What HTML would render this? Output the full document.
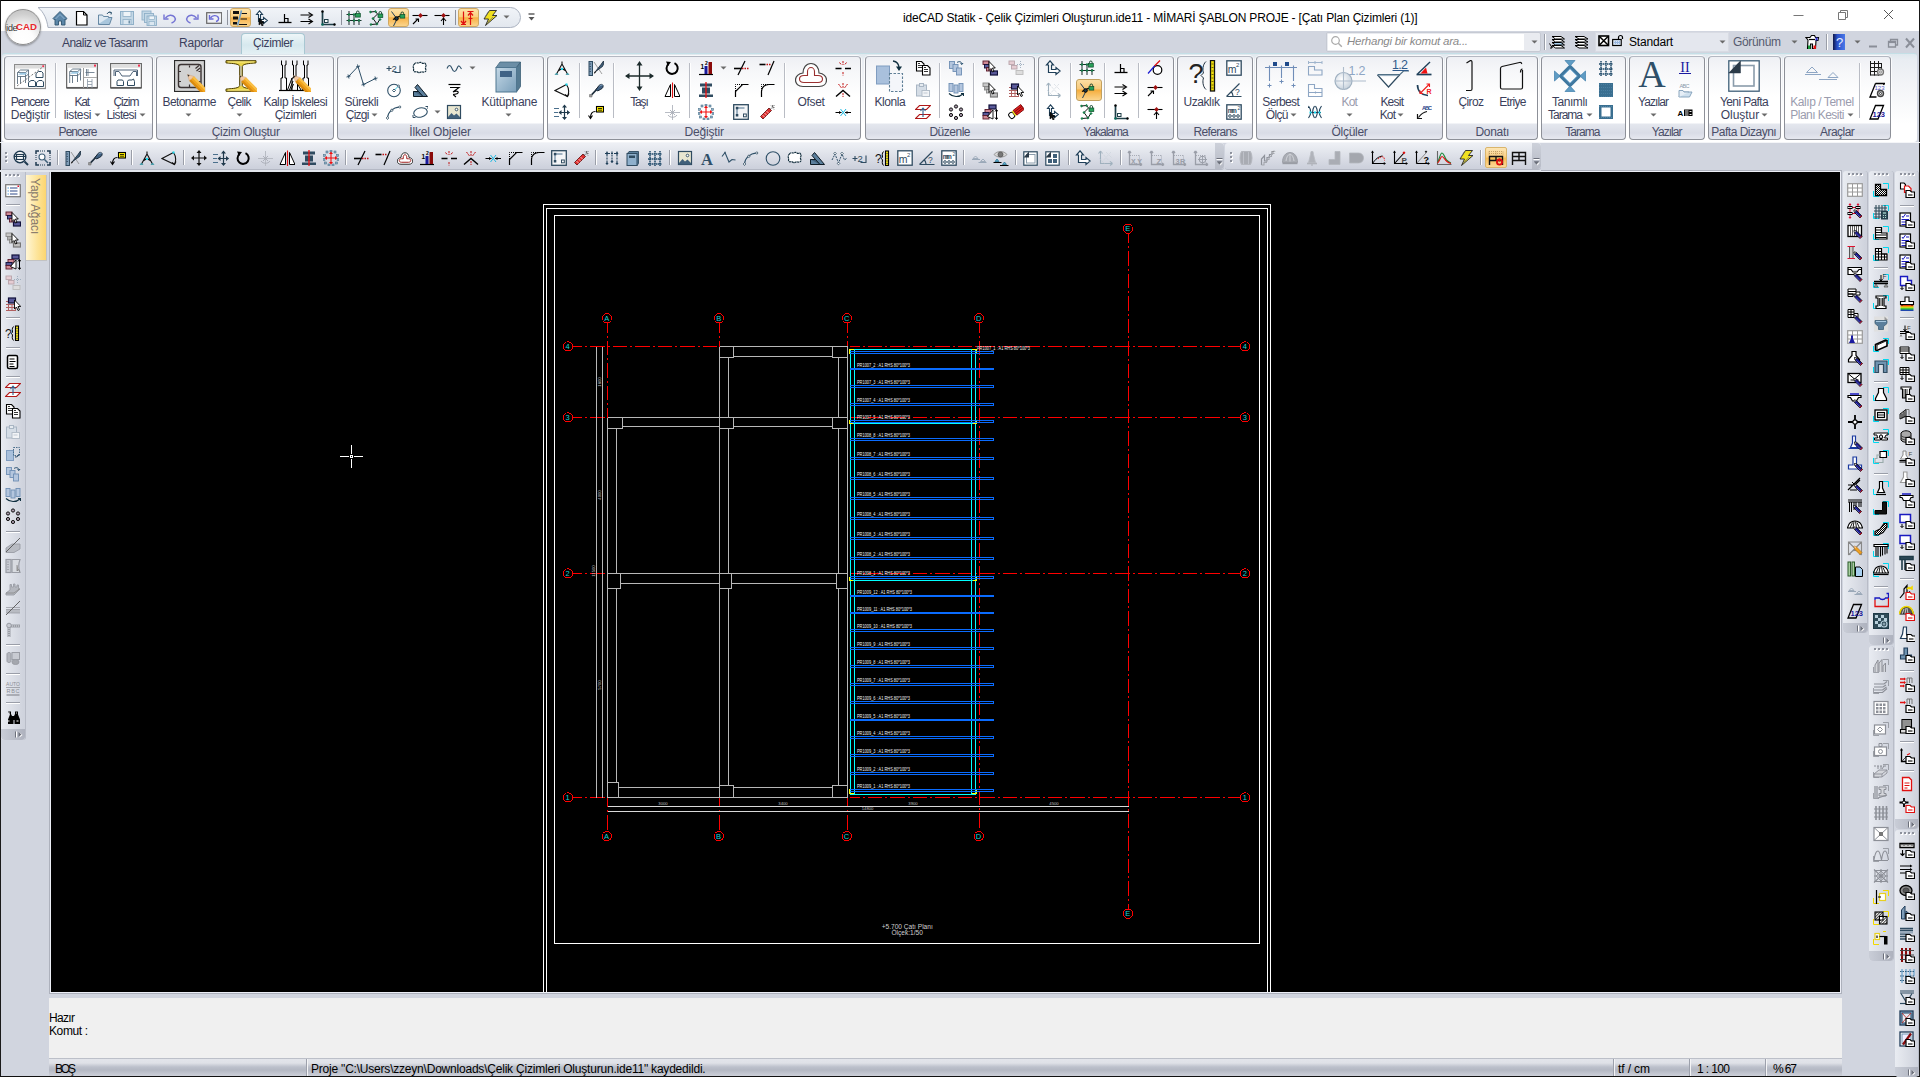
<!DOCTYPE html>
<html><head><meta charset="utf-8"><title>ideCAD Statik</title>
<style>
html,body{margin:0;padding:0}
body{width:1920px;height:1077px;position:relative;overflow:hidden;background:#d1d5df;font-family:"Liberation Sans",sans-serif;font-size:12px}
.t{position:absolute;white-space:nowrap;line-height:1;}
.g{position:absolute;top:56px;height:84px;border:1px solid #8d9098;border-top-color:#b4b8c2;border-radius:4px;box-sizing:border-box;background:linear-gradient(#eef0f4 0px,#f6f7f9 14px,#ffffff 40px,#ffffff 66px,#e4e7ee 67px,#d9dce6 76px,#e6e8ef 82px);box-shadow:0 0 0 1px rgba(255,255,255,.75)}
.sep{position:absolute;top:63px;height:55px;width:1px;background:#b9bcc4;box-shadow:1px 0 0 #fff}
.tsep{position:absolute;top:150px;height:15px;width:1px;background:#9a9ea8;box-shadow:1px 0 0 #fff}
</style></head><body>
<div style="position:absolute;left:0px;top:0px;width:1920px;height:31px;background:#fff"></div>
<div style="position:absolute;left:0px;top:31px;width:1920px;height:22px;background:#d1d5df"></div>
<div style="position:absolute;left:2px;top:53px;width:1915px;height:88px;background:linear-gradient(#dfe8ee 0,#e9edf2 6px,#f3f4f7 30px,#ffffff 70px);border-radius:3px;border-top:1px solid #c4dfe6"></div>
<div style="position:absolute;left:0px;top:142px;width:1920px;height:30px;background:#d1d5df"></div>
<div style="position:absolute;left:0px;top:0px;width:1920px;height:1px;background:#000"></div>
<div style="position:absolute;left:0px;top:0px;width:1px;height:1077px;background:#1a1a1a"></div>
<div style="position:absolute;left:1919px;top:0px;width:1px;height:1077px;background:#1a1a1a"></div>
<svg style="position:absolute;left:30px;top:0px" width="500" height="32" viewBox="0 0 500 32" ><defs><linearGradient id="qg" x1="0" x2="0" y1="0" y2="1"><stop offset="0" stop-color="#f1f4f8"/><stop offset="1" stop-color="#e2e7ee"/></linearGradient></defs><path d="M8 7.500H480.500a10 10 0 0 1 0 20H18C17 20 14 12 8 7.500z" fill="url(#qg)" stroke="#aab2c0" stroke-width="1"/></svg>
<div style="position:absolute;left:4.5px;top:9px;width:36px;height:36px;border-radius:50%;border:1px solid #8e8e8e;box-sizing:border-box;background:radial-gradient(circle at 50% 88%,#ffffff 0,#fdfdfd 30%,#e9e9e9 52%,#cfcfcf 75%,#bdbdbd 100%);box-shadow:0 1px 2px rgba(0,0,0,.35)"></div>
<div class="t" style="left:6px;top:23px;font-size:9.5px;color:#3c3c3c;letter-spacing:-0.4px">ide</div>
<div class="t" style="left:16px;top:23.4px;font-size:9px;font-weight:bold;color:#e8282c;letter-spacing:0.1px;transform-origin:0 50%;transform:scaleX(1.07)">CAD</div>
<div style="position:absolute;left:229.5px;top:8px;width:21px;height:19px;box-sizing:border-box;border:1px solid #d0a860;border-radius:3px;background:linear-gradient(#fde3a8,#fbcf80 45%,#f7b146 52%,#fbd58d)"></div>
<div style="position:absolute;left:387.5px;top:8px;width:21px;height:19px;box-sizing:border-box;border:1px solid #d0a860;border-radius:3px;background:linear-gradient(#fde3a8,#fbcf80 45%,#f7b146 52%,#fbd58d)"></div>
<div style="position:absolute;left:457.5px;top:8px;width:21px;height:19px;box-sizing:border-box;border:1px solid #d0a860;border-radius:3px;background:linear-gradient(#fde3a8,#fbcf80 45%,#f7b146 52%,#fbd58d)"></div>
<svg style="position:absolute;left:52px;top:9.5px" width="16" height="16" viewBox="0 0 16 16" ><path d="M1 8.500L8 1.500l7 7l-1.200 1.200L13 9v6H9.500v-4h-3v4H3V9l-0.800 0.700z" stroke="#2f5570" fill="#5b86a8" stroke-width="0.9" /><path d="M3.500 9L8 4.500L12.500 9" stroke="#9fc0dc" fill="none" stroke-width="0.8" /></svg>
<svg style="position:absolute;left:74px;top:9.5px" width="16" height="16" viewBox="0 0 16 16" ><path d="M2.500 1.500h7l3.500 3.500v10h-10.500z" stroke="#000" fill="#fff" stroke-width="1.2" /><path d="M9.500 1.500v3.500h3.500" stroke="#000" fill="none" stroke-width="1" /></svg>
<svg style="position:absolute;left:96.5px;top:9.5px" width="16" height="16" viewBox="0 0 16 16" ><path d="M1.500 14.500l2.500-7h11l-2.500 7z" stroke="#5a7f9c" fill="#a9c6dc" stroke-width="0.9" /><path d="M1.500 14V5h4l1 1.500h5V7.500" stroke="#5a7f9c" fill="#dce8f2" stroke-width="0.9" /><path d="M10 4c1-2 3-2.500 4-1 M12.500 2l2 0.500l-0.500 2" stroke="#2f5570" fill="none" stroke-width="1" /></svg>
<svg style="position:absolute;left:118.5px;top:9.5px" width="16" height="16" viewBox="0 0 16 16" ><rect x="1.5" y="1.5" width="13" height="13" stroke="#8fb0c8" fill="#c4d8e6" stroke-width="1" /><rect x="4" y="1.5" width="8" height="5" stroke="#8fb0c8" fill="#eef4f8" stroke-width="0.8" /><rect x="4" y="9.5" width="8" height="5" stroke="#8fb0c8" fill="#dbe7f0" stroke-width="0.8" /><rect x="9.5" y="10.5" width="1.5" height="3" stroke="none" fill="#6f90a8" stroke-width="1" /></svg>
<svg style="position:absolute;left:140.5px;top:9.5px" width="16" height="16" viewBox="0 0 16 16" ><rect x="1" y="1" width="9" height="9" stroke="#8fb0c8" fill="#c4d8e6" stroke-width="0.9" /><rect x="3.5" y="3.5" width="9" height="9" stroke="#8fb0c8" fill="#c4d8e6" stroke-width="0.9" /><rect x="6" y="6" width="9.5" height="9.5" stroke="#8fb0c8" fill="#c4d8e6" stroke-width="0.9" /><rect x="8" y="6" width="5.5" height="3.5" stroke="#8fb0c8" fill="#eef4f8" stroke-width="0.7" /><rect x="8" y="11.5" width="5.5" height="4" stroke="#8fb0c8" fill="#dbe7f0" stroke-width="0.7" /></svg>
<svg style="position:absolute;left:162px;top:9.5px" width="16" height="16" viewBox="0 0 16 16" ><path d="M3.500 8c2.500-3.500 7-3.500 9-1s0 5-3 6" stroke="#7474d4" fill="none" stroke-width="1.4" /><path d="M2 4.500v4.500h4.500" stroke="#7474d4" fill="none" stroke-width="1.4" /></svg>
<svg style="position:absolute;left:184px;top:9.5px" width="16" height="16" viewBox="0 0 16 16" ><path d="M12.500 8c-2.500-3.500-7-3.500-9-1s0 5 3 6" stroke="#7474d4" fill="none" stroke-width="1.4" /><path d="M14 4.500v4.500h-4.500" stroke="#7474d4" fill="none" stroke-width="1.4" /></svg>
<svg style="position:absolute;left:206px;top:9.5px" width="16" height="16" viewBox="0 0 16 16" ><rect x="0.7" y="2.7" width="15" height="10.6" stroke="#666" fill="#eef0f4" stroke-width="1.2" /><path d="M4.500 8c2-3 6-3 7.500-1s0 4-2 4.500" stroke="#6a6ad8" fill="none" stroke-width="1.4" /><path d="M3.500 5v4h4" stroke="#6a6ad8" fill="none" stroke-width="1.4" /></svg>
<svg style="position:absolute;left:232px;top:9.5px" width="16" height="16" viewBox="0 0 16 16" ><rect x="1" y="1" width="6" height="3" stroke="none" fill="#111" stroke-width="1" /><rect x="1" y="6.5" width="5" height="3" stroke="none" fill="#111" stroke-width="1" /><rect x="1" y="12" width="4" height="2.5" stroke="none" fill="#111" stroke-width="1" /><path d="M9.500 3.500h5.500 M8.500 9h6.500 M7 14.500h8" stroke="#111" fill="none" stroke-width="1.2" /><path d="M9.500 0.500L5.500 15.500" stroke="#6f9fc8" fill="none" stroke-width="1.6" /></svg>
<svg style="position:absolute;left:254px;top:9.5px" width="16" height="16" viewBox="0 0 16 16" ><path d="M4.500 0.800L1.500 4.500h2v7h5v2l3.800-3l-3.800-3v2h-3v-5h2z" stroke="#1f3f58" fill="#fff" stroke-width="1.1" transform="translate(1 0)"/><path d="M5 8v7l1.800-1.500l1.200 2.500l1.200-0.600l-1.200-2.400h2.200z" stroke="#000" fill="#111" stroke-width="0.6" /></svg>
<svg style="position:absolute;left:277px;top:9.5px" width="16" height="16" viewBox="0 0 16 16" ><path d="M1.500 12.500h13" stroke="#000" fill="none" stroke-width="1.3" /><path d="M7.500 12V4 M7.500 8.500h3.500V12" stroke="#000" fill="none" stroke-width="1.2" /></svg>
<svg style="position:absolute;left:299px;top:9.5px" width="16" height="16" viewBox="0 0 16 16" ><path d="M1.500 5h11.500 M1.500 11.500h11.500" stroke="#000" fill="none" stroke-width="1.1" /><path d="M9.500 2.500L13.500 5l-4 2.500 M9.500 9l4 2.500l-4 2.500" stroke="#000" fill="none" stroke-width="1.1" /></svg>
<svg style="position:absolute;left:320px;top:9.5px" width="16" height="16" viewBox="0 0 16 16" ><path d="M2.500 1.500V14.500H15" stroke="#1f3f48" fill="none" stroke-width="1.7" /><rect x="4.5" y="9.5" width="3.5" height="3" stroke="#1f3f48" fill="#fff" stroke-width="1" /><circle cx="2.5" cy="1.5" r="1.2" stroke="none" fill="#000" stroke-width="1" /><circle cx="14.5" cy="14.5" r="1.2" stroke="none" fill="#000" stroke-width="1" /><circle cx="2.5" cy="14.5" r="1.3" stroke="none" fill="#0a6a5a" stroke-width="1" /></svg>
<svg style="position:absolute;left:346px;top:9.5px" width="16" height="16" viewBox="0 0 16 16" ><path d="M0.500 4.500h10 M0.500 10.500h15 M3 1v14 M8 5v10 M13 9v6" stroke="#1a2a2a" fill="none" stroke-width="1" /><path d="M3 3.3l1.200 1.200l-1.200 1.200l-1.200-1.200z" stroke="#063" fill="#1a8a50" stroke-width="0.5" /><path d="M8 3.3l1.200 1.200l-1.200 1.200l-1.200-1.200z" stroke="#063" fill="#1a8a50" stroke-width="0.5" /><path d="M3 9.3l1.200 1.200l-1.200 1.200l-1.200-1.200z" stroke="#063" fill="#1a8a50" stroke-width="0.5" /><path d="M8 9.3l1.200 1.200l-1.200 1.200l-1.200-1.200z" stroke="#063" fill="#1a8a50" stroke-width="0.5" /><path d="M13 9.3l1.200 1.200l-1.200 1.200l-1.200-1.200z" stroke="#063" fill="#1a8a50" stroke-width="0.5" /><path d="M10.5 3.5v-1.200a1.300 1.300 0 0 1 2.600 0v1.200" stroke="#0a3a22" fill="none" stroke-width="0.9" /><rect x="9.5" y="3.5" width="4.8" height="3.6" stroke="#0a4a28" fill="#27a058" stroke-width="0.7" /></svg>
<svg style="position:absolute;left:368px;top:9.5px" width="16" height="16" viewBox="0 0 16 16" ><path d="M2.500 2l5-0.500l2 2.500L5 8.500l4 5.500l-6 0.500 M9 14l3-5" stroke="#111" fill="none" stroke-width="1" /><path d="M2.5 0.8l1.200 1.200l-1.200 1.200l-1.200-1.200z" stroke="#063" fill="#1a8a50" stroke-width="0.5" /><path d="M7.5 0.30000000000000004l1.200 1.200l-1.200 1.200l-1.200-1.200z" stroke="#063" fill="#1a8a50" stroke-width="0.5" /><path d="M5 7.3l1.200 1.200l-1.200 1.200l-1.200-1.200z" stroke="#063" fill="#1a8a50" stroke-width="0.5" /><path d="M3 13.3l1.200 1.200l-1.200 1.200l-1.200-1.200z" stroke="#063" fill="#1a8a50" stroke-width="0.5" /><path d="M9 12.8l1.200 1.200l-1.200 1.200l-1.200-1.200z" stroke="#063" fill="#1a8a50" stroke-width="0.5" /><path d="M12 8.3l1.200 1.200l-1.200 1.200l-1.200-1.200z" stroke="#063" fill="#1a8a50" stroke-width="0.5" /><path d="M11 4v-1.200a1.300 1.300 0 0 1 2.600 0v1.200" stroke="#0a3a22" fill="none" stroke-width="0.9" /><rect x="10" y="4" width="4.8" height="3.6" stroke="#0a4a28" fill="#27a058" stroke-width="0.7" /></svg>
<svg style="position:absolute;left:390px;top:9.5px" width="16" height="16" viewBox="0 0 16 16" ><path d="M1.500 1.500L7 9L3.500 16" stroke="#1f3f58" fill="none" stroke-width="1" /><path d="M3 9.500L10 6" stroke="#000" fill="none" stroke-width="1.3" /><circle cx="6.5" cy="8.5" r="1.8" stroke="#000" fill="#1a3a4a" stroke-width="1" /><path d="M11 4.5v-1.200a1.300 1.300 0 0 1 2.600 0v1.200" stroke="#0a3a22" fill="none" stroke-width="0.9" /><rect x="10" y="4.5" width="4.8" height="3.6" stroke="#0a4a28" fill="#27a058" stroke-width="0.7" /></svg>
<svg style="position:absolute;left:412px;top:9.5px" width="16" height="16" viewBox="0 0 16 16" ><path d="M0.500 5.500h15" stroke="#000" fill="none" stroke-width="1.1" /><path d="M8.500 3l2.300 2.500l-2.300 2.500l-2.300-2.500z" stroke="none" fill="#a01010" stroke-width="1" /><path d="M1 14l5-5 M3.500 9h3v3" stroke="#000" fill="none" stroke-width="1.1" /></svg>
<svg style="position:absolute;left:434px;top:9.5px" width="16" height="16" viewBox="0 0 16 16" ><path d="M0.500 5.500h15" stroke="#000" fill="none" stroke-width="1.1" /><path d="M9.500 3l2.300 2.500l-2.300 2.500l-2.300-2.500z" stroke="none" fill="#a01010" stroke-width="1" /><path d="M9.500 15V8 M7 11l2.500-3l2.500 3" stroke="#000" fill="none" stroke-width="1.1" /></svg>
<svg style="position:absolute;left:460px;top:9.5px" width="16" height="16" viewBox="0 0 16 16" ><path d="M3.500 1.500v12 M1 11l2.500 3l2.500-3 M1 14.500h5" stroke="#e01010" fill="none" stroke-width="1.2" /><path d="M10.500 15V3 M8 5.500l2.500-3l2.500 3 M7.500 1.500h6 M8.500 8.500h4" stroke="#e01010" fill="none" stroke-width="1.2" /></svg>
<svg style="position:absolute;left:482px;top:9.5px" width="16" height="16" viewBox="0 0 16 16" ><path d="M7.500 0.500h7l-4 5h4.500L3.500 15.500l3-6.500h-4.500z" stroke="#222" fill="#f0e020" stroke-width="0.9" /><path d="M6 2l-3 5 M11 7l-6 6" stroke="#777" fill="none" stroke-width="0.7" /></svg>
<div style="position:absolute;left:227px;top:10px;width:1px;height:15px;background:#8d919c"></div>
<div style="position:absolute;left:341px;top:10px;width:1px;height:15px;background:#8d919c"></div>
<div style="position:absolute;left:455px;top:10px;width:1px;height:15px;background:#8d919c"></div>
<svg style="position:absolute;left:502.7px;top:15.2px" width="7" height="4"><path d="M0.5 0.5h6l-3 3z" fill="#6a6a6a"/></svg>
<svg style="position:absolute;left:528px;top:13px" width="8" height="9" viewBox="0 0 8 9" ><path d="M0.500 1h6" stroke="#555" stroke-width="1.4"/><path d="M0.500 4h6l-3 3.500z" fill="#555"/></svg>
<div class="t" style="left:903.0px;top:12.2px;font-size:12px;letter-spacing:-0.18px;color:#000;">ideCAD Statik - Çelik Çizimleri Oluşturun.ide11 - MİMARİ ŞABLON PROJE - [Çatı Plan Çizimleri (1)]</div>
<svg style="position:absolute;left:1790px;top:5px" width="120" height="22" viewBox="0 0 120 22" ><path d="M3.5 10.5h10" stroke="#777" fill="none"/><path d="M48.5 7.5h7v7h-7z M50.5 7.5v-2h7v7h-2" stroke="#777" fill="none"/><path d="M94 5l9 9M103 5l-9 9" stroke="#555" fill="none"/></svg>
<div class="t" style="left:62.0px;top:36.8px;font-size:12px;letter-spacing:-0.53px;color:#3b3f5c;">Analiz ve Tasarım</div>
<div class="t" style="left:179.0px;top:36.8px;font-size:12px;letter-spacing:-0.22px;color:#3b3f5c;">Raporlar</div>
<div style="position:absolute;left:241px;top:33px;width:64px;height:21px;box-sizing:border-box;border:1px solid #a8c7d2;border-bottom:none;border-radius:4px 4px 0 0;background:linear-gradient(#eef6f8,#d6e8ee 55%,#e4f0f4)"></div>
<div class="t" style="left:253.0px;top:36.8px;font-size:12px;letter-spacing:-0.40px;color:#3b3f5c;">Çizimler</div>
<div style="position:absolute;left:1326px;top:32px;width:215px;height:20px;box-sizing:border-box;border:1px solid #c6cad3;background:#e9ebf0;border-radius:2px"></div>
<div style="position:absolute;left:1328px;top:34px;width:196px;height:16px;background:#fff"></div>
<svg style="position:absolute;left:1330px;top:35px" width="14" height="14" viewBox="0 0 14 14" ><circle cx="5.5" cy="5.5" r="3.8" stroke="#aaa" fill="none" stroke-width="1.2"/><path d="M8.3 8.3l3.5 3.5" stroke="#aaa" stroke-width="1.4"/></svg>
<div class="t" style="left:1347.0px;top:36.3px;font-size:11.5px;letter-spacing:-0.23px;color:#8a8a8a;font-style:italic">Herhangi bir komut ara...</div>
<svg style="position:absolute;left:1530.5px;top:40.0px" width="7" height="4"><path d="M0.5 0.5h6l-3 3z" fill="#6a6a6a"/></svg>
<div style="position:absolute;left:1595px;top:32px;width:134px;height:20px;box-sizing:border-box;background:#e4e7ee;border:1px solid #d8dbe3"></div>
<div class="t" style="left:1629.0px;top:35.8px;font-size:12px;letter-spacing:-0.19px;color:#000;">Standart</div>
<svg style="position:absolute;left:1718.5px;top:40.0px" width="7" height="4"><path d="M0.5 0.5h6l-3 3z" fill="#6a6a6a"/></svg>
<div class="t" style="left:1733.0px;top:35.8px;font-size:12px;letter-spacing:-0.34px;color:#555a6e;">Görünüm</div>
<svg style="position:absolute;left:1790.5px;top:40.0px" width="7" height="4"><path d="M0.5 0.5h6l-3 3z" fill="#6a6a6a"/></svg>
<svg style="position:absolute;left:1853.5px;top:40.0px" width="7" height="4"><path d="M0.5 0.5h6l-3 3z" fill="#6a6a6a"/></svg>
<div style="position:absolute;left:1544px;top:34px;width:1px;height:16px;background:#9a9ea8;box-shadow:1px 0 0 #fff"></div>
<div style="position:absolute;left:1826px;top:34px;width:1px;height:16px;background:#9a9ea8;box-shadow:1px 0 0 #fff"></div>
<svg style="position:absolute;left:1549px;top:34px" width="16" height="16" viewBox="0 0 16 16" ><path d="M3 2.500h9l3.500 2.500h-9z M3 5.500h9l3.500 2.500h-9z M3 11.500h9l3.500 2.500h-9z" stroke="#000" fill="#fff" stroke-width="1" /><path d="M3 8.500h9l3.500 2.500h-9z" stroke="#000" fill="#a8d0f0" stroke-width="1" /><path d="M0.500 9.500l2.500 4 M1 14l2 0 0-2" stroke="#000" fill="none" stroke-width="1" /></svg>
<svg style="position:absolute;left:1573px;top:34px" width="16" height="16" viewBox="0 0 16 16" ><path d="M2 2.500h9l4 2.500h-9z M2 5.500h9l4 2.500h-9z M2 8.500h9l4 2.500h-9z M2 11.500h9l4 2.500h-9z" stroke="#000" fill="#fff" stroke-width="1" /></svg>
<svg style="position:absolute;left:1597.5px;top:34.5px" width="12" height="12" viewBox="0 0 12 12" ><rect x="1" y="1" width="9.5" height="9.5" stroke="#000" fill="#fff" stroke-width="1.6" /><path d="M1.500 1.500l8.500 8.500 M10 1.500L1.500 10" stroke="#000" fill="none" stroke-width="1.5" /></svg>
<svg style="position:absolute;left:1612px;top:34px" width="12" height="13" viewBox="0 0 12 13" ><rect x="0.7" y="5.5" width="8.5" height="6" stroke="#000" fill="#fff" stroke-width="1.2" /><path d="M6.500 5.500v-2a2 2 0 0 1 4 0v1.500" stroke="#000" fill="none" stroke-width="1.2" /><rect x="1.7" y="6.5" width="6.5" height="4" stroke="none" fill="#9ab8e0" stroke-width="1" /><path d="M2 7.500h6 M2 9.500h6" stroke="#fff" fill="none" stroke-width="0.6" stroke-dasharray="1 1"/></svg>
<svg style="position:absolute;left:1805px;top:34px" width="16" height="16" viewBox="0 0 16 16" ><path d="M1 3.500h4l1.500-2h3l1 2h3l-0.500 3h-2l-0.500 8h-3v-4.500h-2v4.500h-3l0.500-8.500z" stroke="#000" fill="#fff" stroke-width="1.1" /><rect x="3" y="11.5" width="2.5" height="3.5" stroke="none" fill="#1a9a3a" stroke-width="1" /><rect x="8.5" y="11.5" width="2.5" height="3.5" stroke="none" fill="#e01010" stroke-width="1" /><path d="M4 5.500h6" stroke="#000" fill="none" stroke-width="1.2" /><rect x="10.5" y="3.5" width="2" height="3" stroke="none" fill="#2a2ad0" stroke-width="1" /></svg>
<svg style="position:absolute;left:1833px;top:34px" width="12" height="16" viewBox="0 0 12 16" ><defs><linearGradient id="hg" x1="0" x2="1"><stop offset="0" stop-color="#10184a"/><stop offset=".35" stop-color="#2a50c8"/><stop offset="1" stop-color="#4a78e8"/></linearGradient></defs><rect x="0" y="0" width="12" height="16" stroke="none" fill="url(#hg)" stroke-width="1" /><text x="3" y="13" font-size="13" fill="#e6eeff" font-family="Liberation Sans, sans-serif" font-family="Liberation Serif">?</text></svg>
<svg style="position:absolute;left:1866px;top:36px" width="52" height="14" viewBox="0 0 52 14" ><path d="M3 10.500h8" stroke="#8a8e98" stroke-width="2"/><path d="M22.500 5.500h7v5.500h-7z M24.500 5.500v-2h7v5.500h-2" stroke="#8a8e98" fill="none" stroke-width="1.300"/><path d="M22.500 6.300h7" stroke="#8a8e98" stroke-width="1.600"/><path d="M40 2.500l8 9 M48 2.500l-8 9" stroke="#8a8e98" stroke-width="2"/></svg>
<div class="g" style="left:4px;width:149px"></div>
<div class="t" style="left:58.6px;top:125.6px;font-size:12px;letter-spacing:-0.97px;color:#4a4e68;">Pencere</div>
<div class="g" style="left:156px;width:178px"></div>
<div class="t" style="left:211.7px;top:125.6px;font-size:12px;letter-spacing:-0.31px;color:#4a4e68;">Çizim Oluştur</div>
<div class="g" style="left:337px;width:207px"></div>
<div class="t" style="left:409.2px;top:125.6px;font-size:12px;letter-spacing:-0.13px;color:#4a4e68;">İlkel Objeler</div>
<div class="g" style="left:547px;width:314px"></div>
<div class="t" style="left:684.4px;top:125.6px;font-size:12px;letter-spacing:-0.15px;color:#4a4e68;">Değiştir</div>
<div class="g" style="left:865px;width:170px"></div>
<div class="t" style="left:929.4px;top:125.6px;font-size:12px;letter-spacing:-0.49px;color:#4a4e68;">Düzenle</div>
<div class="g" style="left:1038px;width:136px"></div>
<div class="t" style="left:1083.3px;top:125.6px;font-size:12px;letter-spacing:-1.01px;color:#4a4e68;">Yakalama</div>
<div class="g" style="left:1177px;width:76px"></div>
<div class="t" style="left:1193.6px;top:125.6px;font-size:12px;letter-spacing:-0.68px;color:#4a4e68;">Referans</div>
<div class="g" style="left:1256px;width:187px"></div>
<div class="t" style="left:1331.5px;top:125.6px;font-size:12px;letter-spacing:-0.28px;color:#4a4e68;">Ölçüler</div>
<div class="g" style="left:1446px;width:92px"></div>
<div class="t" style="left:1475.5px;top:125.6px;font-size:12px;letter-spacing:-0.31px;color:#4a4e68;">Donatı</div>
<div class="g" style="left:1541px;width:85px"></div>
<div class="t" style="left:1565.3px;top:125.6px;font-size:12px;letter-spacing:-0.98px;color:#4a4e68;">Tarama</div>
<div class="g" style="left:1629px;width:76px"></div>
<div class="t" style="left:1651.8px;top:125.6px;font-size:12px;letter-spacing:-0.96px;color:#4a4e68;">Yazılar</div>
<div class="g" style="left:1708px;width:73px"></div>
<div class="t" style="left:1711.3px;top:125.6px;font-size:12px;letter-spacing:-0.50px;color:#4a4e68;">Pafta Dizaynı</div>
<div class="g" style="left:1784px;width:107px"></div>
<div class="t" style="left:1820.0px;top:125.6px;font-size:12px;letter-spacing:-0.54px;color:#4a4e68;">Araçlar</div>
<div class="sep" style="left:55px"></div>
<div class="sep" style="left:579px"></div>
<div class="sep" style="left:613px"></div>
<div class="sep" style="left:689px"></div>
<div class="sep" style="left:784px"></div>
<div class="sep" style="left:939px"></div>
<div class="sep" style="left:973px"></div>
<div class="sep" style="left:1070px"></div>
<div class="sep" style="left:1104px"></div>
<div class="sep" style="left:1138px"></div>
<div class="sep" style="left:1859px"></div>
<div class="t" style="left:10.7px;top:95.6px;font-size:12px;letter-spacing:-0.95px;color:#3b3f5c;">Pencere</div>
<div class="t" style="left:10.7px;top:108.5px;font-size:12px;letter-spacing:-0.21px;color:#3b3f5c;">Değiştir</div>
<div class="t" style="left:74.6px;top:95.6px;font-size:12px;letter-spacing:-1.31px;color:#3b3f5c;">Kat</div>
<div class="t" style="left:63.7px;top:108.5px;font-size:12px;letter-spacing:-0.37px;color:#3b3f5c;">listesi</div>
<svg style="position:absolute;left:94.0px;top:112.5px" width="7" height="4"><path d="M0.5 0.5h6l-3 3z" fill="#6a6a6a"/></svg>
<div class="t" style="left:113.4px;top:95.6px;font-size:12px;letter-spacing:-0.97px;color:#3b3f5c;">Çizim</div>
<div class="t" style="left:106.5px;top:108.5px;font-size:12px;letter-spacing:-0.65px;color:#3b3f5c;">Listesi</div>
<svg style="position:absolute;left:139.0px;top:112.5px" width="7" height="4"><path d="M0.5 0.5h6l-3 3z" fill="#6a6a6a"/></svg>
<svg style="position:absolute;left:14px;top:64px" width="32" height="26" viewBox="0 0 32 26" ><rect x="0.5" y="0.5" width="31" height="24" stroke="#8c8c8c" fill="#fff" stroke-width="1.2" /><rect x="1" y="1" width="30" height="3.5" stroke="none" fill="#dcdcdc" stroke-width="1" /><path d="M3.5 20V8.5l3-2.5h8v3 M3.5 8.5h8l3-2.5 M11.5 8.5V19 M3.5 12.5h8l3-2.5 M14.5 9v8.5 M6.5 12.5V20" stroke="#5c6f80" fill="none" stroke-width="0.9" /><path d="M4 10.8h7.2l2.6-2h-7.4z" stroke="none" fill="#9fcbe6" stroke-width="1" /><path d="M3 22L29.5 2.5" stroke="#777" fill="none" stroke-width="1" stroke-dasharray="2 1.6"/><path d="M22 13.5V9.5l2.5-2h3l1.5 1.5V13.5z" stroke="#2f4b60" fill="none" stroke-width="1" /><path d="M14.5 22.5V18.5l2.5-2h3l1.5 1.5V22.5z" stroke="#2f4b60" fill="none" stroke-width="1" /><path d="M22.5 22.5V18.5l2.5-2h3l1.5 1.5V22.5z" stroke="#2f4b60" fill="none" stroke-width="1" /><rect x="28.3" y="1.3" width="1.8" height="1.8" stroke="none" fill="#f03050" stroke-width="1" /></svg>
<svg style="position:absolute;left:66px;top:63px" width="32" height="26" viewBox="0 0 32 26" ><rect x="0.6" y="0.6" width="30.8" height="24" stroke="#6a6a6a" fill="#fff" stroke-width="1.3" /><rect x="1.2" y="1.2" width="29.6" height="3.6" stroke="none" fill="#dedede" stroke-width="1" /><path d="M0.5 25h31" stroke="#555" fill="none" stroke-width="1.4" /><path d="M3.7 20V8.5l3-2.5h8v3 M3.7 8.5h8l3-2.5 M11.5 8.5V19 M3.7 12.5h8l3-2.5 M14.5 9v8.5 M6.5 12.5V20" stroke="#5c6f80" fill="none" stroke-width="0.9" /><path d="M4 10.8h7.2l2.6-2h-7.4z" stroke="none" fill="#9fcbe6" stroke-width="1" /><path d="M17.5 5V25" stroke="#999" fill="none" stroke-width="1" /><path d="M18 14.5h13" stroke="#aaa" fill="none" stroke-width="1" /><path d="M20.5 6v7 M22 6v7 M19.5 9.5h9" stroke="#5c6f80" fill="none" stroke-width="0.8" /><path d="M21.5 16v9 M26 16v9 M21.5 18.5h4.5 M21.5 21.5h4.5" stroke="#8a98a6" fill="none" stroke-width="0.8" /><rect x="28" y="1.6" width="2" height="2" stroke="none" fill="#f03050" stroke-width="1" /></svg>
<svg style="position:absolute;left:110px;top:63px" width="32" height="26" viewBox="0 0 32 26" ><rect x="0.6" y="0.6" width="30.8" height="24" stroke="#6a6a6a" fill="#fff" stroke-width="1.3" /><rect x="1.2" y="1.2" width="29.6" height="3.6" stroke="none" fill="#dedede" stroke-width="1" /><path d="M0.5 25h31" stroke="#555" fill="none" stroke-width="1.4" /><path d="M4 13V7h23.5v6 M5.5 13V8.5h3.5l3 4.5h8l3-4.5h3.5V13" stroke="#50657a" fill="none" stroke-width="1" /><path d="M7 22.5V18.5l1-1.5h4.5l1 1.5V22.5z" stroke="#2f4b60" fill="none" stroke-width="1" /><path d="M17.5 22.5V18.5l1-1.5h3.5l1.5-1 1 2.5V22.5z" stroke="#2f4b60" fill="none" stroke-width="1" /><rect x="28" y="1.6" width="2" height="2" stroke="none" fill="#f03050" stroke-width="1" /></svg>
<div class="t" style="left:162.5px;top:95.6px;font-size:12px;letter-spacing:-0.60px;color:#3b3f5c;">Betonarme</div>
<svg style="position:absolute;left:185.0px;top:112.5px" width="7" height="4"><path d="M0.5 0.5h6l-3 3z" fill="#6a6a6a"/></svg>
<div class="t" style="left:227.4px;top:95.6px;font-size:12px;letter-spacing:-0.64px;color:#3b3f5c;">Çelik</div>
<svg style="position:absolute;left:235.8px;top:112.5px" width="7" height="4"><path d="M0.5 0.5h6l-3 3z" fill="#6a6a6a"/></svg>
<div class="t" style="left:263.4px;top:95.6px;font-size:12px;letter-spacing:-0.49px;color:#3b3f5c;">Kalıp İskelesi</div>
<div class="t" style="left:274.7px;top:108.5px;font-size:12px;letter-spacing:-0.50px;color:#3b3f5c;">Çizimleri</div>
<svg style="position:absolute;left:174px;top:60px" width="32" height="32" viewBox="0 0 32 32" ><rect x="0.5" y="0.5" width="30" height="31" stroke="#2a2a2a" fill="#d2d2d2" stroke-width="1.2" /><rect x="4.5" y="4.5" width="22.5" height="23" rx="2.5" fill="none" stroke="#3a3232" stroke-width="1.4"/><path d="M15.5 5.5v2 M15.5 24.5v2.5 M5 11.5h2 M5 21.5h2 M24.5 11.5h2 M24.5 21.5h2 M21.5 8.5l3.5-3 M22.5 11l3.5-3" stroke="#3a3232" fill="none" stroke-width="1.2" /><g clip-path="url(#cb)"><clipPath id="cb"><rect x="0" y="0" width="31" height="32"/></clipPath><g transform="translate(13.5 14.5) rotate(45)"><path d="M0 0L6 -3.25V3.25z" fill="#f1c9a5" stroke="#c9956a" stroke-width=".4"/><path d="M0 0L2 -1.0833333333333333V1.0833333333333333z" fill="#333"/><rect x="6" y="-3.25" width="22" height="6.5" fill="#f2a41c"/><rect x="6" y="-3.25" width="22" height="2.1666666666666665" fill="#f9c04a"/><rect x="6" y="1.0833333333333335" width="22" height="2.1666666666666665" fill="#d98a10"/></g></g></svg>
<svg style="position:absolute;left:225px;top:60px" width="32" height="32" viewBox="0 0 32 32" ><path d="M1 0.7h30v2.2c-8 0.6-13 1-13.7 3.5v19.2c0.7 2.5 5.7 2.9 13.7 3.5v2.2h-30v-2.2c8-0.6 13-1 13.7-3.5v-19.2c-0.7-2.5-5.700-2.900-13.700-3.500z" stroke="#4a3c00" fill="#e9d44a" stroke-width="1" /><path d="M3 2h26 M3 30h26" stroke="#fff3a0" fill="none" stroke-width="0.7" /><path d="M15.9 6v20" stroke="#b9b9b9" fill="none" stroke-width="1.3" /><g clip-path="url(#cc)"><clipPath id="cc"><rect x="0" y="0" width="32" height="32"/></clipPath><g transform="translate(14.5 15.5) rotate(45)"><path d="M0 0L6 -3.25V3.25z" fill="#f1c9a5" stroke="#c9956a" stroke-width=".4"/><path d="M0 0L2 -1.0833333333333333V1.0833333333333333z" fill="#333"/><rect x="6" y="-3.25" width="22" height="6.5" fill="#f2a41c"/><rect x="6" y="-3.25" width="22" height="2.1666666666666665" fill="#f9c04a"/><rect x="6" y="1.0833333333333335" width="22" height="2.1666666666666665" fill="#d98a10"/></g></g></svg>
<svg style="position:absolute;left:279px;top:60px" width="32" height="32" viewBox="0 0 32 32" ><path d="M0 30.5h31" stroke="#000" fill="none" stroke-width="1.2" /><path d="M2.5 0.5v4.5h1v13h-1.5v12.500 M7.0 0.5v4.5h-1v13h1.5v12.500" stroke="#000" fill="none" stroke-width="1" /><path d="M13.5 0.5v4.5h1v13h-1.5v12.500 M18.0 0.5v4.5h-1v13h1.5v12.500" stroke="#000" fill="none" stroke-width="1" /><path d="M24.5 0.5v4.5h1v13h-1.5v12.500 M29.0 0.5v4.5h-1v13h1.5v12.500" stroke="#000" fill="none" stroke-width="1" /><path d="M8.5 30L13 18 M10.5 30L14 21 M12 30l2.5-6 M24 30L19 20 M22 30l-4-7" stroke="#000" fill="none" stroke-width="1" /><g clip-path="url(#ck)"><clipPath id="ck"><rect x="0" y="0" width="32" height="32"/></clipPath><g transform="translate(14.5 15.5) rotate(45)"><path d="M0 0L6 -3.25V3.25z" fill="#f1c9a5" stroke="#c9956a" stroke-width=".4"/><path d="M0 0L2 -1.0833333333333333V1.0833333333333333z" fill="#333"/><rect x="6" y="-3.25" width="22" height="6.5" fill="#f2a41c"/><rect x="6" y="-3.25" width="22" height="2.1666666666666665" fill="#f9c04a"/><rect x="6" y="1.0833333333333335" width="22" height="2.1666666666666665" fill="#d98a10"/></g></g></svg>
<div class="t" style="left:344.4px;top:95.6px;font-size:12px;letter-spacing:-0.41px;color:#3b3f5c;">Sürekli</div>
<div class="t" style="left:345.7px;top:108.5px;font-size:12px;letter-spacing:-0.72px;color:#3b3f5c;">Çizgi</div>
<svg style="position:absolute;left:371.0px;top:112.5px" width="7" height="4"><path d="M0.5 0.5h6l-3 3z" fill="#6a6a6a"/></svg>
<svg style="position:absolute;left:346px;top:62px" width="32" height="26" viewBox="0 0 32 26" ><path d="M2.5 14.500L12 4.5L17.5 22.500L29.500 16.500" stroke="#2f5068" fill="none" stroke-width="1" /><path d="M0.5 15.0l4-1 M2.0 12.5l1 4" stroke="#2f5068" fill="none" stroke-width="1" /><path d="M10 5.0l4-1 M11.5 2.5l1 4" stroke="#2f5068" fill="none" stroke-width="1" /><path d="M15.5 23.0l4-1 M17.0 20.5l1 4" stroke="#2f5068" fill="none" stroke-width="1" /><path d="M27.5 17.0l4-1 M29.0 14.5l1 4" stroke="#2f5068" fill="none" stroke-width="1" /></svg>
<div class="t" style="left:481.6px;top:95.6px;font-size:12px;letter-spacing:-0.28px;color:#3b3f5c;">Kütüphane</div>
<svg style="position:absolute;left:505.1px;top:112.5px" width="7" height="4"><path d="M0.5 0.5h6l-3 3z" fill="#6a6a6a"/></svg>
<svg style="position:absolute;left:495px;top:61px" width="27" height="32" viewBox="0 0 27 32" ><defs><linearGradient id="kg" x1="0" y1="0" x2="1" y2="1"><stop offset="0" stop-color="#c4d8e6"/><stop offset="1" stop-color="#7a9fba"/></linearGradient></defs><path d="M1 6.500L5 1h20.500L21.500 6.500z" stroke="#456a80" fill="#6b8ea6" stroke-width="0.8" /><path d="M21.500 6.500L25.500 1V25.500L21.500 31z" stroke="#3c5f76" fill="#547a92" stroke-width="0.8" /><rect x="1" y="6.5" width="20.5" height="24.5" stroke="#4f7690" fill="url(#kg)" stroke-width="1" /><rect x="5" y="10" width="12" height="6" stroke="none" fill="#3f6285" stroke-width="1" /></svg>
<svg style="position:absolute;left:386px;top:59.5px" width="16" height="16" viewBox="0 0 16 16" ><path d="M0.5 8.5h5 M3 6v5" stroke="#2f4b60" fill="none" stroke-width="1.1" /><text x="5.6" y="12" font-size="9.5" fill="#2f4b60" font-family="Liberation Sans, sans-serif" >2</text><path d="M8.5 12.5h5.5V5.500" stroke="#2f4b60" fill="none" stroke-width="1.1" /></svg>
<svg style="position:absolute;left:386px;top:81.5px" width="16" height="16" viewBox="0 0 16 16" ><circle cx="8" cy="8.5" r="6.3" stroke="#2f5068" fill="none" stroke-width="1.1" /><path d="M8 8.500L12.500 4" stroke="#37c8e0" fill="none" stroke-width="1" /><path d="M8 7l1.500 1.500l-1.500 1.500l-1.500-1.500z" stroke="#2f5068" fill="#fff" stroke-width="0.9" /><circle cx="12.5" cy="4" r="1" stroke="#2f5068" fill="#fff" stroke-width="0.8" /></svg>
<svg style="position:absolute;left:386px;top:103.5px" width="16" height="16" viewBox="0 0 16 16" ><path d="M1.500 14c0.500-6 5-10.500 12.500-11" stroke="#2f5068" fill="none" stroke-width="1.1" /><path d="M1.500 12.500l1.300 1.500l-1.300 1.500l-1.300-1.500z M13.800 1.700l1.300 1.300l-1.300 1.300l-1.300-1.300z" stroke="#2f4b60" fill="#fff" stroke-width="0.8" /><circle cx="5.8" cy="6.3" r="1.1" stroke="#2f4b60" fill="#fff" stroke-width="0.8" /></svg>
<svg style="position:absolute;left:412px;top:59.5px" width="16" height="16" viewBox="0 0 16 16" ><path d="M2.5 4c1-2 2.5-1 3.5-1s2.500-1.500 4 0s2.500-1 3.500 1c1.500 1.500-0.500 3 0 4.500s1 3-1 3.500c-1.500 0.500-2.500-0.500-3.500 0s-2.500 1-3.500 0s-2.500 0.500-3.500-0.500s0-2.500-0.500-3.500s-0.500-3 1-4z" stroke="#15303f" fill="#fff" stroke-width="1.2" stroke-dasharray="2.2 0.5"/></svg>
<svg style="position:absolute;left:412px;top:81.5px" width="16" height="16" viewBox="0 0 16 16" ><path d="M1.500 14.500V9.500h5l-3.500-4l2.500-3l10 12z" stroke="#0d1a24" fill="#5b7f9c" stroke-width="1" /><path d="M1.500 9.500h5l4.500 5" stroke="#0d1a24" fill="#3f5f7a" stroke-width="1" /></svg>
<svg style="position:absolute;left:412px;top:103.5px" width="16" height="16" viewBox="0 0 16 16" ><ellipse cx="8.5" cy="8.5" rx="6.8" ry="4.6" stroke="#2f5068" fill="none" stroke-width="1.1" transform="rotate(-12 8.500 8.500)"/><path d="M1 11v2.500h2.500 M13.500 2.500h2.500v2.500" stroke="#2f4b60" fill="none" stroke-width="1" /></svg>
<svg style="position:absolute;left:446px;top:59.5px" width="16" height="16" viewBox="0 0 16 16" ><path d="M1 8.500c1.500-4 3.500-4 5 0s3.500 4 5 0s2.500-3 4.500 0.500" stroke="#2f5068" fill="none" stroke-width="1.1" /></svg>
<svg style="position:absolute;left:446px;top:81.5px" width="16" height="16" viewBox="0 0 16 16" ><path d="M2.500 2.500h12" stroke="#000" fill="none" stroke-width="1.2" /><path d="M4 5.500h9l-6 4.500c3-1.500 6-1 5 1s-5 0.500-4.500 2l2.500 2" stroke="#000" fill="none" stroke-width="1.1" /></svg>
<svg style="position:absolute;left:446px;top:103.5px" width="16" height="16" viewBox="0 0 16 16" ><rect x="1.5" y="1.5" width="13" height="13" stroke="#2f4b60" fill="#e8e6d0" stroke-width="1.2" /><path d="M2 13l3.500-4l2.500 2.500l2.500-2l3.500 3.500v1.500h-12z" stroke="none" fill="#3f5f7a" stroke-width="1" /><circle cx="10.5" cy="5.5" r="1.3" stroke="#2f4b60" fill="#fff" stroke-width="0.9" /></svg>
<svg style="position:absolute;left:469.0px;top:65.5px" width="7" height="4"><path d="M0.5 0.5h6l-3 3z" fill="#6a6a6a"/></svg>
<svg style="position:absolute;left:433.9px;top:109.5px" width="7" height="4"><path d="M0.5 0.5h6l-3 3z" fill="#6a6a6a"/></svg>
<svg style="position:absolute;left:553.5px;top:59.5px" width="16" height="16" viewBox="0 0 16 16" ><path d="M8 1.500v3 M8 4L2.500 14 M8 4l5.500 10 M4 11l4-2.500l4 2.500" stroke="#111" fill="none" stroke-width="1.1" /><rect x="7" y="8" width="2" height="2" stroke="none" fill="#19d9f0" stroke-width="1" /><path d="M1 14.500l1.500-1.500l1.500 1.500z M12 14.500l1.500-1.500l1.500 1.500z" stroke="#2f8a96" fill="#2fb0c0" stroke-width="0.6" /></svg>
<svg style="position:absolute;left:553.5px;top:81.5px" width="16" height="16" viewBox="0 0 16 16" ><path d="M1 8.500L12.500 2.500C15.500 7 15 11 13.500 14.500z" stroke="#111" fill="none" stroke-width="1.1" /><path d="M11 12.500l2.500 2l1.500-3" stroke="#111" fill="none" stroke-width="1.1" /><rect x="11.5" y="1.5" width="2" height="2" stroke="none" fill="#19d9f0" stroke-width="1" /></svg>
<svg style="position:absolute;left:553.5px;top:103.5px" width="16" height="16" viewBox="0 0 16 16" ><path d="M0 4.500h5 M0 8.500h4 M0 12.500h5" stroke="#4a6f8c" fill="none" stroke-width="1" /><path d="M5.500 8.500h10 M10.500 2v13" stroke="#203a4c" fill="none" stroke-width="1.2" /><path d="M10.500 0.500l2.500 3h-5z M10.500 16l2.500-3h-5z M16 8.500l-3-2.500v5z M4.500 8.500l3-2.500v5z" stroke="none" fill="#203a4c" stroke-width="1" /></svg>
<svg style="position:absolute;left:588px;top:59.5px" width="16" height="16" viewBox="0 0 16 16" ><rect x="1" y="1.5" width="3.5" height="14" stroke="#2f4b60" fill="#7f9db8" stroke-width="1" /><path d="M1.500 4h1.500 M1.500 6.500h1.500 M1.500 9h1.500 M1.500 11.500h1.500" stroke="#24384a" fill="none" stroke-width="0.7" /><path d="M6 2l8 12 M6 14L11 8" stroke="#888" fill="none" stroke-width="0.8" /><path d="M7.500 11.500L13 4.500l2.500-3.500l0.500 2l-1.500 3.500z" stroke="#142433" fill="#3f5f7a" stroke-width="0.8" /><path d="M6.500 13l1-1.500" stroke="#000" fill="none" stroke-width="1.2" /></svg>
<svg style="position:absolute;left:588px;top:81.5px" width="16" height="16" viewBox="0 0 16 16" ><path d="M3 13.500L9.500 6.500" stroke="#1a2a38" fill="none" stroke-width="1.8" /><path d="M8 7.500l3-4c1.500-1.500 3.500-1.500 4 0s-0.500 3-2.500 4l-3 1.500z" stroke="#0f1c28" fill="#3f5f80" stroke-width="0.9" /><path d="M1.500 12.500h2.500v2.500h-2.500z" stroke="#777" fill="#999" stroke-width="0.6" /><path d="M11.500 4c1-1 2-1.200 3-0.800" stroke="#9fc0dc" fill="none" stroke-width="0.9" /></svg>
<svg style="position:absolute;left:588px;top:103.5px" width="16" height="16" viewBox="0 0 16 16" ><rect x="8.5" y="2.5" width="7" height="5.5" stroke="#000" fill="#ffee00" stroke-width="1.1" /><path d="M10 4.500h4 M10 6.200h4" stroke="#000" fill="none" stroke-width="0.8" /><path d="M7.500 7.500c-3.500 0-5 2-5 6.500 M0.500 11.500l2 3l2-3" stroke="#000" fill="none" stroke-width="1.1" /></svg>
<svg style="position:absolute;left:625px;top:61px" width="30" height="30" viewBox="0 0 30 30" ><path d="M14.500 2v26 M1.500 15h26" stroke="#1c2b2b" fill="none" stroke-width="1.3" /><path d="M14.500 0l3 4.500h-6z M14.500 30l3-4.500h-6z M0 15l4.500-3v6z M29 15l-4.500-3v6z" stroke="none" fill="#1c2b2b" stroke-width="1" /></svg>
<div class="t" style="left:630.2px;top:95.6px;font-size:12px;letter-spacing:-1.14px;color:#3b3f5c;">Taşı</div>
<svg style="position:absolute;left:664px;top:59.5px" width="16" height="16" viewBox="0 0 16 16" ><path d="M10.500 3.200A5.600 5.600 0 1 1 4.500 4" stroke="#000" fill="none" stroke-width="2" /><path d="M2 1.500l5 0.500l-3 4z" stroke="none" fill="#000" stroke-width="1" /></svg>
<svg style="position:absolute;left:664px;top:81.5px" width="16" height="16" viewBox="0 0 16 16" ><path d="M6.500 2.500V14.500H1z M10.500 2.500V14.500H16z" stroke="#000" fill="#fff" stroke-width="1" /><path d="M8.500 0.500V16" stroke="#e01010" fill="none" stroke-width="1.1" /></svg>
<svg style="position:absolute;left:664px;top:103.5px" width="16" height="16" viewBox="0 0 16 16" ><path d="M8.500 1v15 M1 8.500h15" stroke="#b8bcc4" fill="none" stroke-width="1" /><path d="M4 11c2 3 7 3 9 0 M6 6l5 5 M11 6l-5 5" stroke="#a8acb6" fill="none" stroke-width="0.9" /></svg>
<svg style="position:absolute;left:698px;top:59.5px" width="16" height="16" viewBox="0 0 16 16" ><path d="M1 14.500h14" stroke="#000" fill="none" stroke-width="1.2" /><rect x="6.5" y="6" width="3" height="8" stroke="none" fill="#1a1a9a" stroke-width="1" /><rect x="10.5" y="2" width="3.5" height="12" stroke="none" fill="#8a0a0a" stroke-width="1" /><text x="2.5" y="9" font-size="6.5" fill="#000" font-family="Liberation Sans, sans-serif" font-weight="bold">1</text><text x="7" y="4.5" font-size="5" fill="#000" font-family="Liberation Sans, sans-serif" font-weight="bold">2</text></svg>
<svg style="position:absolute;left:698px;top:81.5px" width="16" height="16" viewBox="0 0 16 16" ><rect x="2" y="1.5" width="12" height="3" stroke="none" fill="#2f4b60" stroke-width="1" /><rect x="4" y="5.5" width="8" height="6" stroke="none" fill="#2f4b60" stroke-width="1" /><rect x="1" y="12.5" width="14" height="2.5" stroke="none" fill="#2f4b60" stroke-width="1" /><path d="M8 0v16" stroke="#f01010" fill="none" stroke-width="1.3" /></svg>
<svg style="position:absolute;left:698px;top:103.5px" width="16" height="16" viewBox="0 0 16 16" ><rect x="3" y="1" width="2" height="2" stroke="#4f7690" fill="#8fb0c4" stroke-width="0.6" /><rect x="7" y="0" width="2" height="2" stroke="#4f7690" fill="#8fb0c4" stroke-width="0.6" /><rect x="11" y="1" width="2" height="2" stroke="#4f7690" fill="#8fb0c4" stroke-width="0.6" /><rect x="0.5" y="4.5" width="2" height="2" stroke="#4f7690" fill="#8fb0c4" stroke-width="0.6" /><rect x="13.5" y="4.5" width="2" height="2" stroke="#4f7690" fill="#8fb0c4" stroke-width="0.6" /><rect x="0" y="8.5" width="2" height="2" stroke="#4f7690" fill="#8fb0c4" stroke-width="0.6" /><rect x="14" y="8.5" width="2" height="2" stroke="#4f7690" fill="#8fb0c4" stroke-width="0.6" /><rect x="1.5" y="12" width="2" height="2" stroke="#4f7690" fill="#8fb0c4" stroke-width="0.6" /><rect x="12.5" y="12" width="2" height="2" stroke="#4f7690" fill="#8fb0c4" stroke-width="0.6" /><rect x="5" y="14" width="2" height="2" stroke="#4f7690" fill="#8fb0c4" stroke-width="0.6" /><rect x="9" y="14" width="2" height="2" stroke="#4f7690" fill="#8fb0c4" stroke-width="0.6" /><path d="M8 3v10 M3 8h10" stroke="#f01010" fill="none" stroke-width="1.1" /><path d="M8 1.500l2 2.500h-4z M8 14.500l2-2.500h-4z M1.500 8l2.500-2v4z M14.500 8l-2.500-2v4z" stroke="none" fill="#f01010" stroke-width="1" /></svg>
<svg style="position:absolute;left:720.1px;top:65.5px" width="7" height="4"><path d="M0.5 0.5h6l-3 3z" fill="#6a6a6a"/></svg>
<svg style="position:absolute;left:733px;top:59.5px" width="16" height="16" viewBox="0 0 16 16" ><path d="M1 8.500h7" stroke="#000" fill="none" stroke-width="1.6" /><path d="M12 1L5 15" stroke="#000" fill="none" stroke-width="1.2" /><path d="M9 8.500h6.500" stroke="#c01010" fill="none" stroke-width="1.6" stroke-dasharray="1.500 1"/></svg>
<svg style="position:absolute;left:733px;top:81.5px" width="16" height="16" viewBox="0 0 16 16" ><path d="M2.500 15V9.500L9.500 2.500H15.500" stroke="#000" fill="none" stroke-width="1.2" /><path d="M2.500 9V2.500H9" stroke="#000" fill="none" stroke-width="1" stroke-dasharray="1 1"/></svg>
<svg style="position:absolute;left:733px;top:103.5px" width="16" height="16" viewBox="0 0 16 16" ><rect x="0.7" y="0.7" width="14.6" height="14.6" stroke="#2f4b60" fill="#f4f6f8" stroke-width="1.3" /><path d="M4 11.500V4h7.500" stroke="#4a6f8c" fill="none" stroke-width="1" /><rect x="2.8" y="2.8" width="2.5" height="2.5" stroke="none" fill="#2f4b60" stroke-width="1" /><rect x="2.8" y="10" width="2.5" height="2.5" stroke="none" fill="#2f4b60" stroke-width="1" /><rect x="10.5" y="10" width="2.8" height="2.8" stroke="#2f4b60" fill="#fff" stroke-width="1" /></svg>
<svg style="position:absolute;left:759px;top:59.5px" width="16" height="16" viewBox="0 0 16 16" ><path d="M0.500 4.500h6" stroke="#000" fill="none" stroke-width="1.6" /><path d="M15 1L9 15" stroke="#000" fill="none" stroke-width="1.2" /><path d="M7.500 4.500h5" stroke="#c01010" fill="none" stroke-width="1.6" stroke-dasharray="1.500 1"/></svg>
<svg style="position:absolute;left:759px;top:81.5px" width="16" height="16" viewBox="0 0 16 16" ><path d="M2.500 15V9.500C2.500 5 6 2.500 10 2.500H15.500" stroke="#000" fill="none" stroke-width="1.2" /><path d="M2.500 9V2.500H9" stroke="#000" fill="none" stroke-width="1" stroke-dasharray="1 1"/></svg>
<svg style="position:absolute;left:759px;top:103.5px" width="16" height="16" viewBox="0 0 16 16" ><path d="M1.500 14.500L10 6l2.500 2.500L4 17z" stroke="#5a0808" fill="#e03030" stroke-width="0.8" transform="translate(0 -2)"/><path d="M3.500 11l2.500 2.500 M5.500 9l2.500 2.500 M7.500 7l2.500 2.500" stroke="#ffd0d0" fill="none" stroke-width="0.8" /><path d="M11 5.500l2-2 M13.500 1v2 M15.500 3.500h-2 M12 1.500l1 1 M15 5.500l-1-1 M15.500 1l-1.500 1.500" stroke="#555" fill="none" stroke-width="0.8" /></svg>
<svg style="position:absolute;left:795px;top:62px" width="32" height="26" viewBox="0 0 32 26" ><path d="M8 24.500c-5 0-7.500-3-7.500-6.500s3-6.500 7.500-7c0-5 3-9.500 8-9.500s8 4.500 8 9.500c4.500 0.500 7.500 3.500 7.500 7s-2.500 6.500-7.500 6.500z" stroke="#444" fill="#fff" stroke-width="1.2" /><path d="M9 20.500c-3 0-4.500-1.500-4.500-3.500s1.500-3.500 4.500-3.500h3.500v-4c0-2 1.500-4 3.500-4s3.500 2 3.500 4v4h3.500c3 0 4.500 1.500 4.500 3.500s-1.500 3.500-4.500 3.500z" stroke="#9a3030" fill="none" stroke-width="1.1" /></svg>
<div class="t" style="left:797.6px;top:95.6px;font-size:12px;letter-spacing:-0.37px;color:#3b3f5c;">Ofset</div>
<svg style="position:absolute;left:835px;top:59.5px" width="16" height="16" viewBox="0 0 16 16" ><path d="M0.500 8.500h6 M10 8.500h6" stroke="#000" fill="none" stroke-width="1.6" /><path d="M8 1v4 M8 12v3.500 M4.500 2.500l2 2.500 M11.500 2.500l-2 2.500" stroke="#c01010" fill="none" stroke-width="1" stroke-dasharray="2 .8"/></svg>
<svg style="position:absolute;left:835px;top:81.5px" width="16" height="16" viewBox="0 0 16 16" ><path d="M1 14.500L8 8.500l7 6" stroke="#000" fill="none" stroke-width="1.4" /><path d="M8 1v5 M8 11v4 M3.500 2l3 4 M12.500 2l-3 4" stroke="#c01010" fill="none" stroke-width="1" stroke-dasharray="2 .8"/></svg>
<svg style="position:absolute;left:835px;top:103.5px" width="16" height="16" viewBox="0 0 16 16" ><path d="M0.500 8.500h6 M10 8.500h6" stroke="#000" fill="none" stroke-width="1.1" /><path d="M6.500 8.500l-2.500-1.500v3z M10 8.500l2.500-1.500v3z" stroke="none" fill="#000" stroke-width="1" /><path d="M5.500 5l5.500 7 M11 5l-5.500 7" stroke="#20b8e0" fill="none" stroke-width="1" /></svg>
<svg style="position:absolute;left:875px;top:60px" width="32" height="32" viewBox="0 0 32 32" ><rect x="1.5" y="6" width="13" height="18" stroke="#7f9cc0" fill="#a9c0dc" stroke-width="1" /><rect x="14.5" y="13.5" width="13" height="18" stroke="#5f7f96" fill="#f4f6fa" stroke-width="1.1" stroke-dasharray="2.500 1.500"/><path d="M18 1c4 0.500 6 3.500 6 7.500" stroke="#0f2f3f" fill="none" stroke-width="1.3" /><path d="M21 6.500h6l-3 4.500z" stroke="none" fill="#0f2f3f" stroke-width="1" /></svg>
<div class="t" style="left:874.4px;top:95.6px;font-size:12px;letter-spacing:-0.43px;color:#3b3f5c;">Klonla</div>
<svg style="position:absolute;left:914.5px;top:59.5px" width="16" height="16" viewBox="0 0 16 16" ><path d="M1.5 1.5h5l2.500 2.500v7h-7.500z" stroke="#000" fill="#fff" stroke-width="1.1" /><path d="M3.0 5.5h4 M3.0 7.5h4 M3.0 3.5h2" stroke="#000" fill="none" stroke-width="0.8" /><path d="M7.5 5.5h5l2.500 2.500v7h-7.500z" stroke="#000" fill="#fff" stroke-width="1.1" /><path d="M9.0 9.5h4 M9.0 11.5h4 M9.0 7.5h2" stroke="#000" fill="none" stroke-width="0.8" /></svg>
<svg style="position:absolute;left:914.5px;top:81.5px" width="16" height="16" viewBox="0 0 16 16" ><rect x="1.5" y="3" width="10" height="11" stroke="#a9b6c4" fill="#d5dde6" stroke-width="1" /><rect x="4.5" y="1.5" width="4" height="3" stroke="#a9b6c4" fill="#e6ebf0" stroke-width="1" /><rect x="7" y="8.5" width="7.5" height="6" stroke="#b4bec9" fill="#f2f4f7" stroke-width="1" /><path d="M8.500 11h4" stroke="#b4bec9" fill="none" stroke-width="0.8" /></svg>
<svg style="position:absolute;left:914.5px;top:103.5px" width="16" height="16" viewBox="0 0 16 16" ><path d="M4.500 1.500h11l-4 4h-11z M4.500 10.500h11l-4 4h-11z" stroke="#b01818" fill="#fff" stroke-width="1.1" /><path d="M8 13V4.500 M5.500 7L8 4l2.500 3" stroke="#2f5f8c" fill="none" stroke-width="1.1" /></svg>
<svg style="position:absolute;left:948px;top:59.5px" width="16" height="16" viewBox="0 0 16 16" ><rect x="1.5" y="1.5" width="5" height="7" stroke="#6f8fb4" fill="#b4c6de" stroke-width="0.9" /><rect x="5" y="4.5" width="5" height="7" stroke="#6f8fb4" fill="#b4c6de" stroke-width="0.9" /><rect x="8.5" y="8" width="5" height="7" stroke="#6f8fb4" fill="#b4c6de" stroke-width="0.9" /><path d="M9 2.500c2-1.500 4.500-1 5 1.500 M12.500 3.500l1.500 1l1-1.500" stroke="#204a6a" fill="none" stroke-width="1" /></svg>
<svg style="position:absolute;left:948px;top:81.5px" width="16" height="16" viewBox="0 0 16 16" ><rect x="1" y="1.5" width="4" height="8" stroke="#6f8fb4" fill="#b4c6de" stroke-width="0.9" /><rect x="6" y="3" width="4" height="8" stroke="#6f8fb4" fill="#b4c6de" stroke-width="0.9" /><rect x="11" y="1.5" width="4" height="8" stroke="#6f8fb4" fill="#b4c6de" stroke-width="0.9" /><path d="M1 11.500c4 4 10 4 14 0.500 M13 11.500h2.500v2.500" stroke="#0f2f3f" fill="none" stroke-width="1.1" /></svg>
<svg style="position:absolute;left:948px;top:103.5px" width="16" height="16" viewBox="0 0 16 16" ><circle cx="8" cy="2.5" r="1.6" stroke="#111" fill="#a898aa" stroke-width="1" /><circle cx="13" cy="5.5" r="1.6" stroke="#111" fill="#a898aa" stroke-width="1" /><circle cx="13" cy="11" r="1.6" stroke="#111" fill="#a898aa" stroke-width="1" /><circle cx="8" cy="14" r="1.6" stroke="#111" fill="#a898aa" stroke-width="1" /><circle cx="3" cy="11" r="1.6" stroke="#111" fill="#a898aa" stroke-width="1" /><circle cx="3" cy="5.5" r="1.6" stroke="#111" fill="#a898aa" stroke-width="1" /></svg>
<svg style="position:absolute;left:982px;top:59.5px" width="16" height="16" viewBox="0 0 16 16" ><rect x="1" y="1" width="6" height="3.5" stroke="#5a1a2a" fill="#d08a96" stroke-width="0.9" /><rect x="2.5" y="4.5" width="6" height="3.5" stroke="#10103a" fill="#5a5a9a" stroke-width="0.9" /><rect x="4.5" y="7.5" width="6" height="3.5" stroke="#5a1a2a" fill="#d08a96" stroke-width="0.9" /><rect x="8.5" y="11" width="7" height="4" stroke="#10103a" fill="#5a5a9a" stroke-width="1.2" /><path d="M7 1.5v9l2-2l1.500 3.500l1.500-0.700l-1.500-3.300h2.800z" stroke="#000" fill="#fff" stroke-width="0.9" /></svg>
<svg style="position:absolute;left:982px;top:81.5px" width="16" height="16" viewBox="0 0 16 16" ><rect x="1" y="1" width="6" height="3.5" stroke="#888" fill="#c8c8c8" stroke-width="0.9" /><rect x="2.5" y="4.5" width="6" height="3.5" stroke="#888" fill="#b0b0b0" stroke-width="0.9" /><rect x="4.5" y="7.5" width="6" height="3.5" stroke="#888" fill="#c8c8c8" stroke-width="0.9" /><rect x="8.5" y="11" width="7" height="4" stroke="#777" fill="#c0c0c0" stroke-width="1.2" /><path d="M7 1.5v9l2-2l1.500 3.500l1.500-0.700l-1.500-3.300h2.800z" stroke="#000" fill="#fff" stroke-width="0.9" /></svg>
<svg style="position:absolute;left:982px;top:103.5px" width="16" height="16" viewBox="0 0 16 16" ><rect x="7" y="1" width="7" height="4" stroke="#10103a" fill="#5a5a9a" stroke-width="1.2" /><rect x="3" y="5.5" width="6" height="3.5" stroke="#5a1a2a" fill="#d08a96" stroke-width="0.9" /><rect x="1" y="8.5" width="6" height="3" stroke="#10103a" fill="#5a5a9a" stroke-width="0.9" /><rect x="1" y="11.5" width="6" height="3.5" stroke="#5a1a2a" fill="#d08a96" stroke-width="0.9" /><path d="M5.500 12.500L11 6v9z" stroke="#000" fill="#fff" stroke-width="0.9" /><path d="M14.500 6v9 M13 7.500l1.500-2l1.500 2 M13 13.500l1.500 2l1.500-2" stroke="#000" fill="none" stroke-width="1" /></svg>
<svg style="position:absolute;left:1008px;top:59.5px" width="16" height="16" viewBox="0 0 16 16" ><rect x="1" y="1" width="5.5" height="3.5" stroke="#b9a4aa" fill="#e6ccd2" stroke-width="0.9" /><rect x="3.5" y="5.5" width="5.5" height="3.5" stroke="#b9a4aa" fill="#e6ccd2" stroke-width="0.9" /><rect x="8" y="10.5" width="7" height="4" stroke="#bbb" fill="#ddd" stroke-width="0.9" /><path d="M12.500 1v7 M9 4.500h7" stroke="#9ab" fill="none" stroke-width="0.9" stroke-dasharray="1 1"/></svg>
<svg style="position:absolute;left:1008px;top:81.5px" width="16" height="16" viewBox="0 0 16 16" ><path d="M1 8.500h10 M1 11.500h10 M1 14.500h10 M3.500 8.500v6 M7 8.500v6 M10.500 8.500v6 M1 5.500h4" stroke="#b06060" fill="none" stroke-width="1" /><rect x="3.5" y="2" width="7" height="5" stroke="#10103a" fill="#5a5a9a" stroke-width="1.2" /><path d="M9.5 4v9l2-2l1.500 3.500l1.500-0.700l-1.500-3.300h2.800z" stroke="#000" fill="#fff" stroke-width="0.9" /></svg>
<svg style="position:absolute;left:1008px;top:103.5px" width="16" height="16" viewBox="0 0 16 16" ><g transform="rotate(-38 8 8)"><rect x="0" y="5" width="5" height="6" stroke="#000" fill="#fff" stroke-width="1" rx="2"/><rect x="5" y="5" width="1.8" height="6" stroke="none" fill="#f0e020" stroke-width="1" /><rect x="6.8" y="5" width="9.5" height="6" stroke="#700" fill="#e02020" stroke-width="0.8" /><path d="M7 7h9 M7 9h9" stroke="#600" fill="none" stroke-width="0.7" /></g></svg>
<div style="position:absolute;left:1076px;top:79px;width:26px;height:22px;box-sizing:border-box;border:1px solid #c2a05e;border-radius:3px;background:linear-gradient(#fbdfa4,#f9c97a 45%,#f5ad3c 50%,#fbd58d)"></div>
<svg style="position:absolute;left:1045px;top:59.5px" width="16" height="16" viewBox="0 0 16 16" ><path d="M5 0.800L1.500 5h2v7.500h7.500v2l4.200-3.500l-4.200-3.500v2h-4.500V5h2z" stroke="#1f3f58" fill="#fff" stroke-width="1.2" /></svg>
<svg style="position:absolute;left:1045px;top:81.5px" width="16" height="16" viewBox="0 0 16 16" ><path d="M3.500 1v12.500h12 M3.500 1l-2 2.500 M3.500 1l2 2.500 M15.500 13.500l-2.500-2 M15.500 13.500l-2.500 2" stroke="#9fb0bd" fill="none" stroke-width="1.1" /><path d="M4 2l10 11 M14 2L4 13 M9 2l6 6 M2 8l6 6" stroke="#c8d0d8" fill="none" stroke-width="0.8" stroke-dasharray="1 1"/></svg>
<svg style="position:absolute;left:1045px;top:103.5px" width="16" height="16" viewBox="0 0 16 16" ><path d="M4.500 0.800L1.500 4.500h2v7h5v2l3.800-3l-3.800-3v2h-3v-5h2z" stroke="#1f3f58" fill="#fff" stroke-width="1.1" transform="translate(1 0)"/><path d="M5 8v7l1.800-1.500l1.200 2.500l1.200-0.600l-1.200-2.400h2.200z" stroke="#000" fill="#111" stroke-width="0.6" /></svg>
<svg style="position:absolute;left:1079px;top:59.5px" width="16" height="16" viewBox="0 0 16 16" ><path d="M0.500 4.500h10 M0.500 10.500h15 M3 1v14 M8 5v10 M13 9v6" stroke="#1a2a2a" fill="none" stroke-width="1" /><path d="M3 3.3l1.200 1.200l-1.200 1.200l-1.200-1.200z" stroke="#063" fill="#1a8a50" stroke-width="0.5" /><path d="M8 3.3l1.200 1.200l-1.200 1.200l-1.200-1.200z" stroke="#063" fill="#1a8a50" stroke-width="0.5" /><path d="M3 9.3l1.200 1.200l-1.200 1.200l-1.200-1.200z" stroke="#063" fill="#1a8a50" stroke-width="0.5" /><path d="M8 9.3l1.200 1.200l-1.200 1.200l-1.200-1.200z" stroke="#063" fill="#1a8a50" stroke-width="0.5" /><path d="M13 9.3l1.200 1.200l-1.200 1.200l-1.200-1.200z" stroke="#063" fill="#1a8a50" stroke-width="0.5" /><path d="M10.5 3.5v-1.200a1.300 1.300 0 0 1 2.600 0v1.200" stroke="#0a3a22" fill="none" stroke-width="0.9" /><rect x="9.5" y="3.5" width="4.8" height="3.6" stroke="#0a4a28" fill="#27a058" stroke-width="0.7" /></svg>
<svg style="position:absolute;left:1079px;top:81.5px" width="16" height="16" viewBox="0 0 16 16" ><path d="M1.500 1.500L7 9L3.500 16" stroke="#1f3f58" fill="none" stroke-width="1" /><path d="M3 9.500L10 6" stroke="#000" fill="none" stroke-width="1.3" /><circle cx="6.5" cy="8.5" r="1.8" stroke="#000" fill="#1a3a4a" stroke-width="1" /><path d="M11 4.5v-1.200a1.300 1.300 0 0 1 2.600 0v1.200" stroke="#0a3a22" fill="none" stroke-width="0.9" /><rect x="10" y="4.5" width="4.8" height="3.6" stroke="#0a4a28" fill="#27a058" stroke-width="0.7" /></svg>
<svg style="position:absolute;left:1079px;top:103.5px" width="16" height="16" viewBox="0 0 16 16" ><path d="M2.500 2l5-0.500l2 2.500L5 8.500l4 5.500l-6 0.500 M9 14l3-5" stroke="#111" fill="none" stroke-width="1" /><path d="M2.5 0.8l1.200 1.200l-1.200 1.200l-1.200-1.200z" stroke="#063" fill="#1a8a50" stroke-width="0.5" /><path d="M7.5 0.30000000000000004l1.200 1.200l-1.200 1.200l-1.200-1.200z" stroke="#063" fill="#1a8a50" stroke-width="0.5" /><path d="M5 7.3l1.200 1.200l-1.200 1.200l-1.200-1.200z" stroke="#063" fill="#1a8a50" stroke-width="0.5" /><path d="M3 13.3l1.200 1.200l-1.200 1.200l-1.200-1.200z" stroke="#063" fill="#1a8a50" stroke-width="0.5" /><path d="M9 12.8l1.200 1.200l-1.200 1.200l-1.200-1.200z" stroke="#063" fill="#1a8a50" stroke-width="0.5" /><path d="M12 8.3l1.200 1.200l-1.200 1.200l-1.200-1.200z" stroke="#063" fill="#1a8a50" stroke-width="0.5" /><path d="M11 4v-1.200a1.300 1.300 0 0 1 2.600 0v1.200" stroke="#0a3a22" fill="none" stroke-width="0.9" /><rect x="10" y="4" width="4.8" height="3.6" stroke="#0a4a28" fill="#27a058" stroke-width="0.7" /></svg>
<svg style="position:absolute;left:1113px;top:59.5px" width="16" height="16" viewBox="0 0 16 16" ><path d="M1.500 12.500h13" stroke="#000" fill="none" stroke-width="1.3" /><path d="M7.500 12V4 M7.500 8.500h3.500V12" stroke="#000" fill="none" stroke-width="1.2" /></svg>
<svg style="position:absolute;left:1113px;top:81.5px" width="16" height="16" viewBox="0 0 16 16" ><path d="M1.500 5h11.500 M1.500 11.500h11.500" stroke="#000" fill="none" stroke-width="1.1" /><path d="M9.500 2.500L13.500 5l-4 2.500 M9.500 9l4 2.500l-4 2.500" stroke="#000" fill="none" stroke-width="1.1" /></svg>
<svg style="position:absolute;left:1113px;top:103.5px" width="16" height="16" viewBox="0 0 16 16" ><path d="M2.500 1.500V14.500H15" stroke="#1f3f48" fill="none" stroke-width="1.7" /><rect x="4.5" y="9.5" width="3.5" height="3" stroke="#1f3f48" fill="#fff" stroke-width="1" /><circle cx="2.5" cy="1.5" r="1.2" stroke="none" fill="#000" stroke-width="1" /><circle cx="14.5" cy="14.5" r="1.2" stroke="none" fill="#000" stroke-width="1" /><circle cx="2.5" cy="14.5" r="1.3" stroke="none" fill="#0a6a5a" stroke-width="1" /></svg>
<svg style="position:absolute;left:1147px;top:59.5px" width="16" height="16" viewBox="0 0 16 16" ><circle cx="10.5" cy="10" r="4.3" stroke="#000" fill="#fff" stroke-width="1.2" /><path d="M1 13.500L8 5.500" stroke="#1818d0" fill="none" stroke-width="1.2" /><path d="M7.500 6l5.500-5.500" stroke="#e01010" fill="none" stroke-width="1.2" /></svg>
<svg style="position:absolute;left:1147px;top:81.5px" width="16" height="16" viewBox="0 0 16 16" ><path d="M0.500 5.500h15" stroke="#000" fill="none" stroke-width="1.1" /><path d="M8.500 3l2.300 2.500l-2.300 2.500l-2.300-2.500z" stroke="none" fill="#a01010" stroke-width="1" /><path d="M1 14l5-5 M3.500 9h3v3" stroke="#000" fill="none" stroke-width="1.1" /></svg>
<svg style="position:absolute;left:1147px;top:103.5px" width="16" height="16" viewBox="0 0 16 16" ><path d="M0.500 5.500h15" stroke="#000" fill="none" stroke-width="1.1" /><path d="M9.500 3l2.300 2.500l-2.300 2.500l-2.300-2.500z" stroke="none" fill="#a01010" stroke-width="1" /><path d="M9.500 15V8 M7 11l2.500-3l2.500 3" stroke="#000" fill="none" stroke-width="1.1" /></svg>
<svg style="position:absolute;left:1189px;top:60px" width="27" height="32" viewBox="0 0 27 32" ><text x="-0.5" y="23" font-size="27" fill="#222" font-family="Liberation Sans, sans-serif" font-family="Liberation Sans">?</text><path d="M17 1.500c-3.500 3-3.500 9-2.500 11.500l-2.500 2.500l2.500 2.500c-1 2.500-1 8.500 2.500 11.500" stroke="#1f2f3f" fill="none" stroke-width="1" /><rect x="21.5" y="0.5" width="4" height="30.5" stroke="#111" fill="#f0e010" stroke-width="1.3" /><path d="M22.500 4h2 M22.500 7.500h2 M22.500 11h2 M22.500 14.500h2 M22.500 18h2 M22.500 21.500h2 M22.500 25h2 M22.500 28h2" stroke="#6a5a00" fill="none" stroke-width="0.9" /></svg>
<div class="t" style="left:1183.6px;top:95.6px;font-size:12px;letter-spacing:-0.49px;color:#3b3f5c;">Uzaklık</div>
<svg style="position:absolute;left:1226px;top:59.5px" width="16" height="16" viewBox="0 0 16 16" ><rect x="0.8" y="0.8" width="14.4" height="14.4" stroke="#2f4b60" fill="#fff" stroke-width="1.3" /><text x="1.8" y="13" font-size="10.5" fill="#2f4b60" font-family="Liberation Sans, sans-serif" >m</text><text x="10" y="7" font-size="6" fill="#2f4b60" font-family="Liberation Sans, sans-serif" >2</text></svg>
<svg style="position:absolute;left:1226px;top:81.5px" width="16" height="16" viewBox="0 0 16 16" ><path d="M0.500 14.500h15 M0.500 14.500L13.500 1.500 M7 14c0-2-1-3.500-2-4.500" stroke="#2f4b60" fill="none" stroke-width="1.2" /><text x="9" y="12.5" font-size="8.5" fill="#2f4b60" font-family="Liberation Sans, sans-serif" >?</text></svg>
<svg style="position:absolute;left:1226px;top:103.5px" width="16" height="16" viewBox="0 0 16 16" ><rect x="0.8" y="0.8" width="14.4" height="14.4" stroke="#2f4b60" fill="#fff" stroke-width="1.3" /><text x="1.8" y="8.5" font-size="6.5" fill="#2f4b60" font-family="Liberation Sans, sans-serif" font-weight="bold" textLength="9">mm</text><text x="11.5" y="6" font-size="5" fill="#2f4b60" font-family="Liberation Sans, sans-serif" >2</text><circle cx="4" cy="12" r="1.3" stroke="#2f4b60" fill="none" stroke-width="1" /><circle cx="8" cy="12" r="1.3" stroke="#2f4b60" fill="none" stroke-width="1" /><circle cx="12" cy="12" r="1.3" stroke="#2f4b60" fill="none" stroke-width="1" /></svg>
<svg style="position:absolute;left:1265px;top:60px" width="32" height="32" viewBox="0 0 32 32" ><path d="M0 7.500h32 M4.500 5.500V21 M16.500 5.500V18 M28.500 5.500V21" stroke="#6f8db8" fill="none" stroke-width="1.1" /><rect x="8" y="2" width="4" height="4" stroke="none" fill="#1f4a8a" stroke-width="1" /><rect x="20" y="2" width="4" height="4" stroke="none" fill="#1f4a8a" stroke-width="1" /><path d="M2.5 25.5h4 M4.5 23.5v4" stroke="#6f8db8" fill="none" stroke-width="1" /><path d="M14.5 21.5h4 M16.5 19.5v4" stroke="#6f8db8" fill="none" stroke-width="1" /><path d="M26.5 25.5h4 M28.5 23.5v4" stroke="#6f8db8" fill="none" stroke-width="1" /></svg>
<div class="t" style="left:1262.3px;top:95.6px;font-size:12px;letter-spacing:-0.64px;color:#3b3f5c;">Serbest</div>
<div class="t" style="left:1265.7px;top:108.5px;font-size:12px;letter-spacing:-0.62px;color:#3b3f5c;">Ölçü</div>
<svg style="position:absolute;left:1290.2px;top:112.5px" width="7" height="4"><path d="M0.5 0.5h6l-3 3z" fill="#6a6a6a"/></svg>
<svg style="position:absolute;left:1306.5px;top:59.5px" width="16" height="16" viewBox="0 0 16 16" ><path d="M1.500 1v3 M8 1v3 M15 1v3 M1.500 2.500h13.500" stroke="#9fb4cc" fill="none" stroke-width="1" /><path d="M1.500 6.500h6v3.500h7.500v5h-13.500z" stroke="#8ea6c4" fill="none" stroke-width="1.1" /></svg>
<svg style="position:absolute;left:1306.5px;top:81.5px" width="16" height="16" viewBox="0 0 16 16" ><path d="M1.500 2.500h6v4h7.500v8h-13.500z M1.500 10.500h13.500 M8.500 9.500v2" stroke="#8ea6c4" fill="none" stroke-width="1.1" /></svg>
<svg style="position:absolute;left:1306.5px;top:103.5px" width="16" height="16" viewBox="0 0 16 16" ><path d="M1.500 2c3 4 3 8 0 12 M7.500 2c-2.500 4-2.500 8 0 12 M8.500 2c2.500 4 2.500 8 0 12 M14.500 2c-3 4-3 8 0 12 M3 8.500h11" stroke="#1f3f58" fill="none" stroke-width="1.1" /><rect x="2.5" y="7.5" width="2" height="2" stroke="none" fill="#19d9f0" stroke-width="1" /><rect x="7" y="7.5" width="2" height="2" stroke="none" fill="#19d9f0" stroke-width="1" /><rect x="11.5" y="7.5" width="2" height="2" stroke="none" fill="#19d9f0" stroke-width="1" /><path d="M1 3.500h1" stroke="#1f3f58" fill="none" stroke-width="1" /></svg>
<svg style="position:absolute;left:1334px;top:60px" width="32" height="32" viewBox="0 0 32 32" ><defs><radialGradient id="kgr" cx=".4" cy=".4" r=".7"><stop offset="0" stop-color="#fff"/><stop offset="1" stop-color="#c0ccd8"/></radialGradient></defs><circle cx="9.5" cy="21" r="8.5" stroke="#9fb0c0" fill="url(#kgr)" stroke-width="1.2" /><path d="M9.500 7v23 M1 21h31" stroke="#aebccb" fill="none" stroke-width="1.1" /><text x="14.5" y="15" font-size="12.5" fill="#8ea6c4" font-family="Liberation Sans, sans-serif" textLength="17">1.2</text></svg>
<div class="t" style="left:1341.5px;top:95.6px;font-size:12px;letter-spacing:-0.86px;color:#9a9cae;">Kot</div>
<svg style="position:absolute;left:1345.9px;top:112.5px" width="7" height="4"><path d="M0.5 0.5h6l-3 3z" fill="#6a6a6a"/></svg>
<svg style="position:absolute;left:1377px;top:60px" width="32" height="32" viewBox="0 0 32 32" ><path d="M0.500 14.500h22.500l3.500-3.500h5.500" stroke="#4a6a80" fill="none" stroke-width="1.1" /><path d="M1 15.500h21L11.500 27z" stroke="#2f4b60" fill="#fff" stroke-width="1.2" /><path d="M1.500 15.500h20" stroke="#9fb4c4" fill="none" stroke-width="1.2" /><text x="15" y="8.5" font-size="12.5" fill="#2f5a8a" font-family="Liberation Sans, sans-serif" textLength="16">1.2</text><path d="M15.500 10.500h16" stroke="#2f5a8a" fill="none" stroke-width="1" /></svg>
<div class="t" style="left:1380.4px;top:95.6px;font-size:12px;letter-spacing:-0.77px;color:#3b3f5c;">Kesit</div>
<div class="t" style="left:1379.7px;top:108.5px;font-size:12px;letter-spacing:-0.86px;color:#3b3f5c;">Kot</div>
<svg style="position:absolute;left:1397.2px;top:112.5px" width="7" height="4"><path d="M0.5 0.5h6l-3 3z" fill="#6a6a6a"/></svg>
<svg style="position:absolute;left:1416px;top:59.5px" width="16" height="16" viewBox="0 0 16 16" ><path d="M0.500 14.500h15" stroke="#1f3f58" fill="none" stroke-width="1.7" /><path d="M1.500 14L14 2" stroke="#1f3f58" fill="none" stroke-width="1.4" /><path d="M4.500 13.500L10 7.500l1.500 6z" stroke="none" fill="#f01010" stroke-width="1" /></svg>
<svg style="position:absolute;left:1416px;top:81.5px" width="16" height="16" viewBox="0 0 16 16" ><path d="M1.500 3c0 6 4 10 10.500 10.500" stroke="#1f3f58" fill="none" stroke-width="1.7" /><path d="M4 11.500L13.500 2 M4 8.500v3h3 M10.500 2h3v3" stroke="#f02020" fill="none" stroke-width="1.1" /><text x="10.5" y="11.5" font-size="7" fill="#f02020" font-family="Liberation Sans, sans-serif" font-weight="bold">R</text></svg>
<svg style="position:absolute;left:1416px;top:103.5px" width="16" height="16" viewBox="0 0 16 16" ><text x="6" y="6" font-size="5.5" fill="#1f3f8a" font-family="Liberation Sans, sans-serif" font-weight="bold" textLength="10">ABC</text><path d="M11 7.500c-3 0.500-6 2.500-8.500 6 M1.500 10v4.500h4.500" stroke="#111" fill="none" stroke-width="1.2" /></svg>
<svg style="position:absolute;left:1458px;top:60px" width="27" height="32" viewBox="0 0 27 32" ><path d="M8.500 3l4-2.500c1 0 1.500 0.500 1.500 1.500v27c0 1-0.500 1.500-1.500 1.500h-4.500" stroke="#111" fill="none" stroke-width="1.2" /></svg>
<div class="t" style="left:1458.5px;top:95.6px;font-size:12px;letter-spacing:-0.63px;color:#3b3f5c;">Çiroz</div>
<svg style="position:absolute;left:1497px;top:60px" width="32" height="32" viewBox="0 0 32 32" ><path d="M25.500 10V27.500c0 1-0.500 1.500-1.500 1.500h-19c-1 0-1.500-0.500-1.500-1.500V8.500c0-1 0.500-1.700 1.500-2L22.500 2.500c1.500-0.300 2.500 0.500 2 1.500 M23.500 12.500c0-2.500 0.500-3.500 2-3.500" stroke="#111" fill="none" stroke-width="1.2" /></svg>
<div class="t" style="left:1499.3px;top:95.6px;font-size:12px;letter-spacing:-0.69px;color:#3b3f5c;">Etriye</div>
<svg style="position:absolute;left:1554px;top:60px" width="32" height="32" viewBox="0 0 32 32" ><path d="M16 6.500L25.500 16L16 25.500L6.500 16z" stroke="#3f78a0" fill="none" stroke-width="3.2" /><path d="M11 0.500h10L16 6z M11 31.500h10L16 26z M0.500 11v10L6 16z M31.500 11v10L26 16z" stroke="#4a86b0" fill="#5f9cc4" stroke-width="0.8" /><path d="M16 8.800L23.200 16L16 23.200L8.800 16z" stroke="#7fb4d8" fill="none" stroke-width="1" /></svg>
<div class="t" style="left:1552.0px;top:95.6px;font-size:12px;letter-spacing:-0.46px;color:#3b3f5c;">Tanımlı</div>
<div class="t" style="left:1548.0px;top:108.5px;font-size:12px;letter-spacing:-1.00px;color:#3b3f5c;">Tarama</div>
<svg style="position:absolute;left:1585.9px;top:112.5px" width="7" height="4"><path d="M0.5 0.5h6l-3 3z" fill="#6a6a6a"/></svg>
<svg style="position:absolute;left:1598px;top:59.5px" width="16" height="16" viewBox="0 0 16 16" ><defs><pattern id="chk" width="2" height="2" patternUnits="userSpaceOnUse"><rect width="2" height="2" fill="#2f5f7f"/><rect width="1" height="1" fill="#7fb0d0"/><rect x="1" y="1" width="1" height="1" fill="#7fb0d0"/></pattern></defs><path d="M1 4h14 M1 9h14 M1 14h14 M3 1v15 M8 1v15 M13 1v15" stroke="#1f4a6a" fill="none" stroke-width="1.5" stroke-dasharray="1.500 .5"/></svg>
<svg style="position:absolute;left:1598px;top:81.5px" width="16" height="16" viewBox="0 0 16 16" ><rect x="1" y="1" width="14" height="14" stroke="none" fill="#3a6f90" stroke-width="1" /><path d="M1 2.500h14 M1 5.500h14 M1 8.500h14 M1 11.500h14 M1 14.500h14" stroke="#5a8fb0" fill="none" stroke-width="0.5" stroke-dasharray="1 1"/></svg>
<svg style="position:absolute;left:1598px;top:103.5px" width="16" height="16" viewBox="0 0 16 16" ><rect x="1" y="1" width="14" height="14" stroke="none" fill="#3a6f90" stroke-width="1" /><rect x="3.5" y="3.5" width="9" height="9" stroke="none" fill="#fff" stroke-width="1" /><path d="M1 2.500h14 M1 13.500h14" stroke="#6a9fc0" fill="none" stroke-width="0.5" stroke-dasharray="1 1"/></svg>
<svg style="position:absolute;left:1638px;top:60px" width="28" height="32" viewBox="0 0 28 32" ><text x="14" y="27" font-size="38" fill="#2f4f68" text-anchor="middle" font-family="Liberation Serif, serif">A</text></svg>
<div class="t" style="left:1638.0px;top:95.6px;font-size:12px;letter-spacing:-0.91px;color:#3b3f5c;">Yazılar</div>
<svg style="position:absolute;left:1649.9px;top:112.5px" width="7" height="4"><path d="M0.5 0.5h6l-3 3z" fill="#6a6a6a"/></svg>
<svg style="position:absolute;left:1677px;top:59.5px" width="16" height="16" viewBox="0 0 16 16" ><text x="8" y="11.500" font-size="14" fill="#1a1aa0" text-anchor="middle" font-family="Liberation Serif, serif">II</text><path d="M2 13.500h12" stroke="#1a1aa0" fill="none" stroke-width="1" /></svg>
<svg style="position:absolute;left:1677px;top:81.5px" width="16" height="16" viewBox="0 0 16 16" ><text x="2.5" y="6" font-size="5.5" fill="#8a98a8" font-family="Liberation Sans, sans-serif" textLength="10">ABC</text><path d="M2 15l2-5h11l-2.500 5z" stroke="#7f9db8" fill="#cfe0ee" stroke-width="0.9" /><path d="M2 15V8.500h4l1 1.500h5" stroke="#7f9db8" fill="#e6eef6" stroke-width="0.9" /></svg>
<svg style="position:absolute;left:1677px;top:103.5px" width="16" height="16" viewBox="0 0 16 16" ><text x="0.5" y="11.5" font-size="8" fill="#000" font-family="Liberation Sans, sans-serif" font-weight="bold">A</text><rect x="7" y="5.5" width="8.5" height="6.5" stroke="none" fill="#000" stroke-width="1" /><path d="M8 7h3.500 M8 9h3.500 M8 11h3.500 M12.500 7.500h2 M12.500 10.500h2" stroke="#fff" fill="none" stroke-width="0.9" /></svg>
<svg style="position:absolute;left:1728px;top:60px" width="32" height="32" viewBox="0 0 32 32" ><rect x="0.8" y="0.8" width="30.4" height="30.4" stroke="#3f5f78" fill="#fff" stroke-width="1.3" /><rect x="5.5" y="5.5" width="20.5" height="20.5" stroke="#8a9cab" fill="#fff" stroke-width="1.6" /><path d="M0.500 13L12.500 0.500v12.500z" stroke="none" fill="#2a3a48" stroke-width="1" /><path d="M0.500 13h12v-12" stroke="#2a3a48" fill="none" stroke-width="0.5" /></svg>
<div class="t" style="left:1720.0px;top:95.6px;font-size:12px;letter-spacing:-0.62px;color:#3b3f5c;">Yeni Pafta</div>
<div class="t" style="left:1720.7px;top:108.5px;font-size:12px;letter-spacing:-0.03px;color:#3b3f5c;">Oluştur</div>
<svg style="position:absolute;left:1761.1px;top:112.5px" width="7" height="4"><path d="M0.5 0.5h6l-3 3z" fill="#6a6a6a"/></svg>
<svg style="position:absolute;left:1799px;top:60px" width="46" height="32" viewBox="0 0 46 32" ><path d="M6 14.500h16 M20 19.500h18" stroke="#8ea6c4" fill="none" stroke-width="1" /><path d="M7.500 12.500L13 7l5.500 5.500z M29 17.500l5-5l5 5z" stroke="#8ea6c4" fill="none" stroke-width="1" /></svg>
<div class="t" style="left:1790.3px;top:95.6px;font-size:12px;letter-spacing:-0.45px;color:#9a9cae;">Kalıp / Temel</div>
<div class="t" style="left:1790.3px;top:108.5px;font-size:12px;letter-spacing:-0.54px;color:#9a9cae;">Planı Kesiti</div>
<svg style="position:absolute;left:1846.9px;top:112.5px" width="7" height="4"><path d="M0.5 0.5h6l-3 3z" fill="#6a6a6a"/></svg>
<svg style="position:absolute;left:1868.5px;top:59.5px" width="16" height="16" viewBox="0 0 16 16" ><path d="M1.500 1v14.500 M5.500 1v14.500 M9.500 1v14.500 M1 3.500h12 M1 7.500h12 M1 11.500h12 M1.500 15h9 M12.500 3.500v6" stroke="#1a1a1a" fill="none" stroke-width="1" /><circle cx="11.5" cy="12" r="3" stroke="#777" fill="#ddd" stroke-width="1.3" /><circle cx="11.5" cy="12" r="1" stroke="#777" fill="#fff" stroke-width="0.8" /></svg>
<svg style="position:absolute;left:1868.5px;top:81.5px" width="16" height="16" viewBox="0 0 16 16" ><path d="M6.500 1.500h9l-1 1.500 M6.500 1.500L1 15h6.500" stroke="#000" fill="none" stroke-width="1.3" /><text x="5.5" y="8" font-size="6" fill="#5a5ac0" font-family="Liberation Sans, sans-serif" textLength="10">123</text><circle cx="11.5" cy="11.5" r="3" stroke="#444" fill="#ccc" stroke-width="1.4" /><circle cx="11.5" cy="11.5" r="1" stroke="#222" fill="#fff" stroke-width="0.8" /></svg>
<svg style="position:absolute;left:1868.5px;top:103.5px" width="16" height="16" viewBox="0 0 16 16" ><path d="M6.500 1.500h8L9 15H1z" stroke="#000" fill="none" stroke-width="1.3" /><text x="3.5" y="13" font-size="7.5" fill="#1a1a9a" font-family="Liberation Sans, sans-serif" font-weight="bold" textLength="12.500">123</text></svg>
<div style="position:absolute;left:51px;top:172px;width:1789px;height:820px;background:#000;box-shadow:0 0 0 1px #eceef6,0 0 0 2px #adb1bc"></div>
<svg style="position:absolute;left:0;top:0" width="1920" height="1077" viewBox="0 0 1920 1077"><defs><clipPath id="cv"><rect x="51" y="172" width="1789" height="820"/></clipPath></defs><g clip-path="url(#cv)" shape-rendering="crispEdges"><path d="M543.5 992V204.5H1270.5V992 M546.5 992V208.5H1267.5V992" stroke="#ffffff" fill="none"/><rect x="554.5" y="215.5" width="705" height="728" fill="none" stroke="#ffffff" stroke-width="1"/><circle cx="607.0" cy="318.2" r="4.6" fill="none" stroke="#ff0000" stroke-width="1"/><text x="606.7" y="320.8" font-size="7.5" fill="#19d7d7" text-anchor="middle" font-family="Liberation Sans, sans-serif">A</text><circle cx="606.8" cy="836.2" r="4.6" fill="none" stroke="#ff0000" stroke-width="1"/><text x="606.5" y="838.8000000000001" font-size="7.5" fill="#19d7d7" text-anchor="middle" font-family="Liberation Sans, sans-serif">A</text><circle cx="719.0" cy="318.2" r="4.6" fill="none" stroke="#ff0000" stroke-width="1"/><text x="718.7" y="320.8" font-size="7.5" fill="#19d7d7" text-anchor="middle" font-family="Liberation Sans, sans-serif">B</text><circle cx="718.8" cy="836.2" r="4.6" fill="none" stroke="#ff0000" stroke-width="1"/><text x="718.5" y="838.8000000000001" font-size="7.5" fill="#19d7d7" text-anchor="middle" font-family="Liberation Sans, sans-serif">B</text><circle cx="847.0" cy="318.2" r="4.6" fill="none" stroke="#ff0000" stroke-width="1"/><text x="846.7" y="320.8" font-size="7.5" fill="#19d7d7" text-anchor="middle" font-family="Liberation Sans, sans-serif">C</text><circle cx="846.8" cy="836.2" r="4.6" fill="none" stroke="#ff0000" stroke-width="1"/><text x="846.5" y="838.8000000000001" font-size="7.5" fill="#19d7d7" text-anchor="middle" font-family="Liberation Sans, sans-serif">C</text><circle cx="979.0" cy="318.2" r="4.6" fill="none" stroke="#ff0000" stroke-width="1"/><text x="978.7" y="320.8" font-size="7.5" fill="#19d7d7" text-anchor="middle" font-family="Liberation Sans, sans-serif">D</text><circle cx="978.8" cy="836.2" r="4.6" fill="none" stroke="#ff0000" stroke-width="1"/><text x="978.5" y="838.8000000000001" font-size="7.5" fill="#19d7d7" text-anchor="middle" font-family="Liberation Sans, sans-serif">D</text><path d="M607.5 323L607.5 417.5" stroke="#ff0000" stroke-width="1" stroke-dasharray="14.5 3 2 3" stroke-dashoffset="5"/><path d="M607.5 797.5L607.5 831.5" stroke="#ff0000" stroke-width="1" stroke-dasharray="14.5 3 2 3" stroke-dashoffset="5"/><path d="M719.5 323L719.5 346.5" stroke="#ff0000" stroke-width="1" stroke-dasharray="14.5 3 2 3" stroke-dashoffset="5"/><path d="M719.5 797.5L719.5 831.5" stroke="#ff0000" stroke-width="1" stroke-dasharray="14.5 3 2 3" stroke-dashoffset="5"/><path d="M847.5 323L847.5 346.5" stroke="#ff0000" stroke-width="1" stroke-dasharray="14.5 3 2 3" stroke-dashoffset="5"/><path d="M847.5 797.5L847.5 831.5" stroke="#ff0000" stroke-width="1" stroke-dasharray="14.5 3 2 3" stroke-dashoffset="5"/><path d="M979.5 323L979.5 831.5" stroke="#ff0000" stroke-width="1" stroke-dasharray="14.5 3 2 3" stroke-dashoffset="5"/><path d="M1128.5 233.5L1128.5 909" stroke="#ff0000" stroke-width="1" stroke-dasharray="14.5 3 2 3" stroke-dashoffset="5"/><circle cx="1128" cy="228.8" r="4.6" fill="none" stroke="#ff0000" stroke-width="1"/><text x="1127.7" y="231.4" font-size="7.5" fill="#19d7d7" text-anchor="middle" font-family="Liberation Sans, sans-serif">E</text><circle cx="1128" cy="913.7" r="4.6" fill="none" stroke="#ff0000" stroke-width="1"/><text x="1127.7" y="916.3000000000001" font-size="7.5" fill="#19d7d7" text-anchor="middle" font-family="Liberation Sans, sans-serif">E</text><circle cx="567.9" cy="346.4" r="4.6" fill="none" stroke="#ff0000" stroke-width="1"/><text x="567.6" y="349.0" font-size="7.5" fill="#19d7d7" text-anchor="middle" font-family="Liberation Sans, sans-serif">4</text><circle cx="1245.1" cy="346.4" r="4.6" fill="none" stroke="#ff0000" stroke-width="1"/><text x="1244.8" y="349.0" font-size="7.5" fill="#19d7d7" text-anchor="middle" font-family="Liberation Sans, sans-serif">4</text><circle cx="567.9" cy="417.4" r="4.6" fill="none" stroke="#ff0000" stroke-width="1"/><text x="567.6" y="420.0" font-size="7.5" fill="#19d7d7" text-anchor="middle" font-family="Liberation Sans, sans-serif">3</text><circle cx="1245.1" cy="417.4" r="4.6" fill="none" stroke="#ff0000" stroke-width="1"/><text x="1244.8" y="420.0" font-size="7.5" fill="#19d7d7" text-anchor="middle" font-family="Liberation Sans, sans-serif">3</text><circle cx="567.9" cy="573.4" r="4.6" fill="none" stroke="#ff0000" stroke-width="1"/><text x="567.6" y="576.0" font-size="7.5" fill="#19d7d7" text-anchor="middle" font-family="Liberation Sans, sans-serif">2</text><circle cx="1245.1" cy="573.4" r="4.6" fill="none" stroke="#ff0000" stroke-width="1"/><text x="1244.8" y="576.0" font-size="7.5" fill="#19d7d7" text-anchor="middle" font-family="Liberation Sans, sans-serif">2</text><circle cx="567.9" cy="797.4" r="4.6" fill="none" stroke="#ff0000" stroke-width="1"/><text x="567.6" y="800.0" font-size="7.5" fill="#19d7d7" text-anchor="middle" font-family="Liberation Sans, sans-serif">1</text><circle cx="1245.1" cy="797.4" r="4.6" fill="none" stroke="#ff0000" stroke-width="1"/><text x="1244.8" y="800.0" font-size="7.5" fill="#19d7d7" text-anchor="middle" font-family="Liberation Sans, sans-serif">1</text><path d="M572.5 346.5L719.5 346.5" stroke="#ff0000" stroke-width="1" stroke-dasharray="14.5 3 2 3" stroke-dashoffset="5"/><path d="M850 346.5L1240.5 346.5" stroke="#ff0000" stroke-width="1" stroke-dasharray="14.5 3 2 3" stroke-dashoffset="5"/><path d="M572.5 417.5L607.5 417.5" stroke="#ff0000" stroke-width="1" stroke-dasharray="14.5 3 2 3" stroke-dashoffset="5"/><path d="M850 417.5L1240.5 417.5" stroke="#ff0000" stroke-width="1" stroke-dasharray="14.5 3 2 3" stroke-dashoffset="5"/><path d="M572.5 573.5L607.5 573.5" stroke="#ff0000" stroke-width="1" stroke-dasharray="14.5 3 2 3" stroke-dashoffset="5"/><path d="M850 573.5L1240.5 573.5" stroke="#ff0000" stroke-width="1" stroke-dasharray="14.5 3 2 3" stroke-dashoffset="5"/><path d="M572.5 797.5L607.5 797.5" stroke="#ff0000" stroke-width="1" stroke-dasharray="14.5 3 2 3" stroke-dashoffset="5"/><path d="M850 797.5L1240.5 797.5" stroke="#ff0000" stroke-width="1" stroke-dasharray="14.5 3 2 3" stroke-dashoffset="5"/><path d="M596.5 346.5L596.5 797.5" stroke="#b8b8b8" stroke-width="1" /><path d="M602.5 346.5L602.5 797.5" stroke="#b8b8b8" stroke-width="1" /><path d="M607.5 806.5L1128.5 806.5" stroke="#d8d8d8" stroke-width="1" /><path d="M607.5 811.5L1128.5 811.5" stroke="#d8d8d8" stroke-width="1" /><path d="M719.5 346.5H847.5 M733.5 356.5H832.5 M719.5 346.5V357.5H733.5V346.5 M832.5 346.5V357.5H847.5 M719.5 357.5V417.5 M728.5 357.5V417.5 M838.5 357.5V417.5 M847.5 346.5V797.5 M607.5 417.5H847.5 M622.5 426.5H719.5 M733.5 426.5H832.5 M607.5 417.5V428.5H622.5V417.5 M719.5 417.5V428.5H733.5V417.5 M832.5 417.5V428.5H847.5 M607.5 428.5V573.5 M616.5 428.5V573.5 M719.5 428.5V573.5 M728.5 428.5V573.5 M838.5 428.5V573.5 M607.5 573.5H847.5 M620.5 583.5H719.5 M731.5 583.5H836.5 M607.5 573.5V588.5H620.5V573.5 M719.5 573.5V588.5H731.5V573.5 M836.5 573.5V588.5H847.5 M607.5 588.5V797.5 M616.5 588.5V782.5 M719.5 588.5V797.5 M728.5 588.5V785.5 M838.5 588.5V785.5 M607.5 797.5H847.5 M618.5 787.5H719.5 M733.5 787.5H832.5 M607.5 782.5H618.5V797.5 M719.5 785.5H733.5V797.5 M832.5 797.5V785.5H847.5" stroke="#b8b8b8" fill="none"/><path d="M850.5 349.5V794.5 M854.5 349.5V794.5 M971.5 349.5V794.5 M975.5 349.5V794.5 M850 349.5H976 M850 423.5H976 M850 580.5H976 M850 794.5H976" stroke="#00ffff" fill="none"/><path d="M849.5 354V349.5H854 M972 349.5H976.5V354 M849.5 420V423.5H853 M973 423.5H976.5V420 M849.5 577V580.5H853 M973 580.5H976.5V577 M849.5 789V793.5H854 M972 793.5H976.5V789" stroke="#ffff00" fill="none"/><path d="M850 351.5H993.5 M993.5 351.0V354.0 M850 353.5H993.5" stroke="#0a6cff" fill="none" stroke-width="1"/><text x="977" y="349.9" font-size="4.6" fill="#f4f4f4" font-family="Liberation Sans, sans-serif" textLength="53" lengthAdjust="spacingAndGlyphs">PR1007_1 : A1 RHS 80*100*3</text><path d="M850 368.5H993.5 M850 369.5H993.5" stroke="#0a6cff" fill="none" stroke-width="1"/><text x="857" y="367.3" font-size="4.6" fill="#f4f4f4" font-family="Liberation Sans, sans-serif" textLength="53" lengthAdjust="spacingAndGlyphs">PR1007_2 : A1 RHS 80*100*3</text><path d="M850 385.5H993.5 M993.5 385.0V388.0 M850 387.5H993.5" stroke="#0a6cff" fill="none" stroke-width="1"/><text x="857" y="384.3" font-size="4.6" fill="#f4f4f4" font-family="Liberation Sans, sans-serif" textLength="53" lengthAdjust="spacingAndGlyphs">PR1007_3 : A1 RHS 80*100*3</text><path d="M850 403.5H993.5 M993.5 403.0V406.0 M850 405.5H993.5" stroke="#0a6cff" fill="none" stroke-width="1"/><text x="857" y="402.3" font-size="4.6" fill="#f4f4f4" font-family="Liberation Sans, sans-serif" textLength="53" lengthAdjust="spacingAndGlyphs">PR1007_4 : A1 RHS 80*100*3</text><path d="M850 420.5H993.5 M993.5 420.0V423.0 M850 422.5H993.5" stroke="#0a6cff" fill="none" stroke-width="1"/><text x="857" y="419.3" font-size="4.6" fill="#f4f4f4" font-family="Liberation Sans, sans-serif" textLength="53" lengthAdjust="spacingAndGlyphs">PR1007_5 : A1 RHS 80*100*3</text><path d="M850 438.5H993.5 M993.5 438.0V441.0 M850 440.5H993.5" stroke="#0a6cff" fill="none" stroke-width="1"/><text x="857" y="437.3" font-size="4.6" fill="#f4f4f4" font-family="Liberation Sans, sans-serif" textLength="53" lengthAdjust="spacingAndGlyphs">PR1008_8 : A1 RHS 80*100*3</text><path d="M850 457.5H993.5 M993.5 457.0V460.0 M850 459.5H993.5" stroke="#0a6cff" fill="none" stroke-width="1"/><text x="857" y="456.3" font-size="4.6" fill="#f4f4f4" font-family="Liberation Sans, sans-serif" textLength="53" lengthAdjust="spacingAndGlyphs">PR1008_7 : A1 RHS 80*100*3</text><path d="M850 477.5H993.5 M993.5 477.0V480.0 M850 479.5H993.5" stroke="#0a6cff" fill="none" stroke-width="1"/><text x="857" y="476.3" font-size="4.6" fill="#f4f4f4" font-family="Liberation Sans, sans-serif" textLength="53" lengthAdjust="spacingAndGlyphs">PR1008_6 : A1 RHS 80*100*3</text><path d="M850 497.5H993.5 M993.5 497.0V500.0 M850 499.5H993.5" stroke="#0a6cff" fill="none" stroke-width="1"/><text x="857" y="496.3" font-size="4.6" fill="#f4f4f4" font-family="Liberation Sans, sans-serif" textLength="53" lengthAdjust="spacingAndGlyphs">PR1008_5 : A1 RHS 80*100*3</text><path d="M850 517.5H993.5 M993.5 517.0V520.0 M850 519.5H993.5" stroke="#0a6cff" fill="none" stroke-width="1"/><text x="857" y="516.3" font-size="4.6" fill="#f4f4f4" font-family="Liberation Sans, sans-serif" textLength="53" lengthAdjust="spacingAndGlyphs">PR1008_4 : A1 RHS 80*100*3</text><path d="M850 537.5H993.5 M993.5 537.0V540.0 M850 539.5H993.5" stroke="#0a6cff" fill="none" stroke-width="1"/><text x="857" y="536.3" font-size="4.6" fill="#f4f4f4" font-family="Liberation Sans, sans-serif" textLength="53" lengthAdjust="spacingAndGlyphs">PR1008_3 : A1 RHS 80*100*3</text><path d="M850 557.5H993.5 M993.5 557.0V560.0 M850 559.5H993.5" stroke="#0a6cff" fill="none" stroke-width="1"/><text x="857" y="556.3" font-size="4.6" fill="#f4f4f4" font-family="Liberation Sans, sans-serif" textLength="53" lengthAdjust="spacingAndGlyphs">PR1008_2 : A1 RHS 80*100*3</text><path d="M850 576.5H993.5 M993.5 576.0V579.0 M850 578.5H993.5" stroke="#0a6cff" fill="none" stroke-width="1"/><text x="857" y="575.3" font-size="4.6" fill="#f4f4f4" font-family="Liberation Sans, sans-serif" textLength="53" lengthAdjust="spacingAndGlyphs">PR1008_1 : A1 RHS 80*100*3</text><path d="M850 595.5H993.5 M850 596.5H993.5" stroke="#0a6cff" fill="none" stroke-width="1"/><text x="857" y="594.3" font-size="4.6" fill="#f4f4f4" font-family="Liberation Sans, sans-serif" textLength="55" lengthAdjust="spacingAndGlyphs">PR1009_12 : A1 RHS 80*100*3</text><path d="M850 612.5H993.5 M850 613.5H993.5" stroke="#0a6cff" fill="none" stroke-width="1"/><text x="857" y="611.3" font-size="4.6" fill="#f4f4f4" font-family="Liberation Sans, sans-serif" textLength="55" lengthAdjust="spacingAndGlyphs">PR1009_11 : A1 RHS 80*100*3</text><path d="M850 629.5H993.5 M993.5 629.0V632.0 M850 631.5H993.5" stroke="#0a6cff" fill="none" stroke-width="1"/><text x="857" y="628.3" font-size="4.6" fill="#f4f4f4" font-family="Liberation Sans, sans-serif" textLength="55" lengthAdjust="spacingAndGlyphs">PR1009_10 : A1 RHS 80*100*3</text><path d="M850 647.5H993.5 M993.5 647.0V650.0 M850 649.5H993.5" stroke="#0a6cff" fill="none" stroke-width="1"/><text x="857" y="646.3" font-size="4.6" fill="#f4f4f4" font-family="Liberation Sans, sans-serif" textLength="53" lengthAdjust="spacingAndGlyphs">PR1009_9 : A1 RHS 80*100*3</text><path d="M850 665.5H993.5 M993.5 665.0V668.0 M850 667.5H993.5" stroke="#0a6cff" fill="none" stroke-width="1"/><text x="857" y="664.3" font-size="4.6" fill="#f4f4f4" font-family="Liberation Sans, sans-serif" textLength="53" lengthAdjust="spacingAndGlyphs">PR1009_8 : A1 RHS 80*100*3</text><path d="M850 683.5H993.5 M993.5 683.0V686.0 M850 685.5H993.5" stroke="#0a6cff" fill="none" stroke-width="1"/><text x="857" y="682.3" font-size="4.6" fill="#f4f4f4" font-family="Liberation Sans, sans-serif" textLength="53" lengthAdjust="spacingAndGlyphs">PR1009_7 : A1 RHS 80*100*3</text><path d="M850 701.5H993.5 M993.5 701.0V704.0 M850 703.5H993.5" stroke="#0a6cff" fill="none" stroke-width="1"/><text x="857" y="700.3" font-size="4.6" fill="#f4f4f4" font-family="Liberation Sans, sans-serif" textLength="53" lengthAdjust="spacingAndGlyphs">PR1009_6 : A1 RHS 80*100*3</text><path d="M850 719.5H993.5 M850 720.5H993.5" stroke="#0a6cff" fill="none" stroke-width="1"/><text x="857" y="718.3" font-size="4.6" fill="#f4f4f4" font-family="Liberation Sans, sans-serif" textLength="53" lengthAdjust="spacingAndGlyphs">PR1009_5 : A1 RHS 80*100*3</text><path d="M850 736.5H993.5 M993.5 736.0V739.0 M850 738.5H993.5" stroke="#0a6cff" fill="none" stroke-width="1"/><text x="857" y="735.3" font-size="4.6" fill="#f4f4f4" font-family="Liberation Sans, sans-serif" textLength="53" lengthAdjust="spacingAndGlyphs">PR1009_4 : A1 RHS 80*100*3</text><path d="M850 754.5H993.5 M993.5 754.0V757.0 M850 756.5H993.5" stroke="#0a6cff" fill="none" stroke-width="1"/><text x="857" y="753.3" font-size="4.6" fill="#f4f4f4" font-family="Liberation Sans, sans-serif" textLength="53" lengthAdjust="spacingAndGlyphs">PR1009_3 : A1 RHS 80*100*3</text><path d="M850 772.5H993.5 M993.5 772.0V775.0 M850 774.5H993.5" stroke="#0a6cff" fill="none" stroke-width="1"/><text x="857" y="771.3" font-size="4.6" fill="#f4f4f4" font-family="Liberation Sans, sans-serif" textLength="53" lengthAdjust="spacingAndGlyphs">PR1009_2 : A1 RHS 80*100*3</text><path d="M850 789.5H993.5 M993.5 789.0V792.0 M850 791.5H993.5" stroke="#0a6cff" fill="none" stroke-width="1"/><text x="857" y="788.3" font-size="4.6" fill="#f4f4f4" font-family="Liberation Sans, sans-serif" textLength="53" lengthAdjust="spacingAndGlyphs">PR1009_1 : A1 RHS 80*100*3</text><text x="663" y="804.8" font-size="4.2" fill="#c0c0c0" text-anchor="middle" font-family="Liberation Sans, sans-serif">3000</text><text x="783" y="804.8" font-size="4.2" fill="#c0c0c0" text-anchor="middle" font-family="Liberation Sans, sans-serif">3400</text><text x="913" y="804.8" font-size="4.2" fill="#c0c0c0" text-anchor="middle" font-family="Liberation Sans, sans-serif">3900</text><text x="1054" y="804.8" font-size="4.2" fill="#c0c0c0" text-anchor="middle" font-family="Liberation Sans, sans-serif">4500</text><text x="867.6" y="809.8" font-size="4.2" fill="#c0c0c0" text-anchor="middle" font-family="Liberation Sans, sans-serif">14800</text><text x="601" y="382" font-size="4.2" fill="#c0c0c0" text-anchor="middle" font-family="Liberation Sans, sans-serif" transform="rotate(-90 601 382)">1800</text><text x="601" y="495" font-size="4.2" fill="#c0c0c0" text-anchor="middle" font-family="Liberation Sans, sans-serif" transform="rotate(-90 601 495)">4000</text><text x="601" y="685" font-size="4.2" fill="#c0c0c0" text-anchor="middle" font-family="Liberation Sans, sans-serif" transform="rotate(-90 601 685)">5700</text><text x="595" y="571" font-size="4.2" fill="#c0c0c0" text-anchor="middle" font-family="Liberation Sans, sans-serif" transform="rotate(-90 595 571)">11500</text><text x="907.2" y="929" font-size="6.6" fill="#d0d0d0" text-anchor="middle" font-family="Liberation Sans, sans-serif">+5.700 Çatı Planı</text><text x="907.2" y="935" font-size="6.6" fill="#d0d0d0" text-anchor="middle" font-family="Liberation Sans, sans-serif">Ölçek:1/50</text><path d="M340 456.5H349 M354 456.5H363 M351.5 445V454 M351.5 459V468" stroke="#fff" fill="none"/><rect x="350.5" y="455.5" width="2" height="2" fill="none" stroke="#fff"/></g></svg>
<div style="position:absolute;left:49px;top:998px;width:1793px;height:60px;background:#f0f0f0"></div>
<div class="t" style="left:49.0px;top:1012.3px;font-size:12px;letter-spacing:-0.67px;color:#000;">Hazır</div>
<div class="t" style="left:49.0px;top:1025.3px;font-size:12px;letter-spacing:-0.39px;color:#000;">Komut :</div>
<div style="position:absolute;left:49px;top:1058px;width:1793px;height:19px;background:linear-gradient(#a9adb8 0,#e2e4ea 1.5px,#dfe1e7 5px,#bcc0cb 9px,#b4b8c3 12px,#cdd0d9 18px)"></div>
<div style="position:absolute;left:0px;top:1076px;width:1920px;height:1px;background:#111"></div>
<div style="position:absolute;left:306px;top:1059px;width:1px;height:17px;background:#9da1ac;box-shadow:1px 0 0 #f4f4f6"></div>
<div style="position:absolute;left:1613px;top:1059px;width:1px;height:17px;background:#9da1ac;box-shadow:1px 0 0 #f4f4f6"></div>
<div style="position:absolute;left:1689px;top:1059px;width:1px;height:17px;background:#9da1ac;box-shadow:1px 0 0 #f4f4f6"></div>
<div style="position:absolute;left:1765px;top:1059px;width:1px;height:17px;background:#9da1ac;box-shadow:1px 0 0 #f4f4f6"></div>
<div class="t" style="left:55.0px;top:1062.8px;font-size:12px;letter-spacing:-2.17px;color:#000;">BOŞ</div>
<div class="t" style="left:311.0px;top:1062.8px;font-size:12px;letter-spacing:-0.21px;color:#000;">Proje "C:\Users\zzeyn\Downloads\Çelik Çizimleri Oluşturun.ide11" kaydedildi.</div>
<div class="t" style="left:1618.0px;top:1062.8px;font-size:12px;letter-spacing:-0.11px;color:#000;">tf / cm</div>
<div class="t" style="left:1697.0px;top:1062.8px;font-size:12px;letter-spacing:-0.62px;color:#000;">1 : 100</div>
<div class="t" style="left:1773.0px;top:1062.8px;font-size:12px;letter-spacing:-1.12px;color:#000;">% 67</div>
<div style="position:absolute;left:0px;top:142px;width:1920px;height:1px;background:#f4f5f8"></div>
<div style="position:absolute;left:2px;top:143px;width:1222px;height:26px;background:linear-gradient(#eef0f5 0,#e6e9ef 6px,#d9dce5 16px,#cdd1dc 25px);border-radius:0 3px 3px 0;border-bottom:1px solid #b4b8c4"></div>
<div style="position:absolute;left:1215px;top:143px;width:9px;height:26px;background:linear-gradient(#cdd1da,#b6bac5);border-radius:0 4px 4px 0"></div>
<div style="position:absolute;left:1225px;top:143px;width:316px;height:26px;background:linear-gradient(#eef0f5 0,#e6e9ef 6px,#d9dce5 16px,#cdd1dc 25px);border-radius:3px;border-bottom:1px solid #b4b8c4"></div>
<div style="position:absolute;left:1532px;top:143px;width:9px;height:26px;background:linear-gradient(#cdd1da,#b6bac5);border-radius:0 4px 4px 0"></div>
<div style="position:absolute;left:0px;top:170px;width:1541px;height:2px;background:#e3e6ec"></div>
<svg style="position:absolute;left:1216px;top:158px" width="7" height="8" viewBox="0 0 7 8" ><path d="M0.5 1.5h6" stroke="#fff"/><path d="M0.5 0.5h6" stroke="#6b6f7a"/><path d="M1 3.5h5l-2.5 3z" fill="#6b6f7a"/><path d="M2 4.5h5l-2.5 3z" fill="#fff" opacity=".8"/><path d="M1 3.5h5l-2.5 3z" fill="#6b6f7a"/></svg>
<svg style="position:absolute;left:1533px;top:158px" width="7" height="8" viewBox="0 0 7 8" ><path d="M0.5 1.5h6" stroke="#fff"/><path d="M0.5 0.5h6" stroke="#6b6f7a"/><path d="M1 3.5h5l-2.5 3z" fill="#6b6f7a"/><path d="M2 4.5h5l-2.5 3z" fill="#fff" opacity=".8"/><path d="M1 3.5h5l-2.5 3z" fill="#6b6f7a"/></svg>
<svg style="position:absolute;left:5px;top:152px" width="3" height="12" viewBox="0 0 3 12" ><rect x="0" y="0" width="2" height="2" fill="#8d919c"/><rect x="1" y="1" width="2" height="2" fill="#fff"/><rect x="0" y="0" width="2" height="2" fill="#8d919c" opacity=".9"/><rect x="1" y="5" width="2" height="2" fill="#fff"/><rect x="0" y="4" width="2" height="2" fill="#8d919c"/><rect x="1" y="9" width="2" height="2" fill="#fff"/><rect x="0" y="8" width="2" height="2" fill="#8d919c"/></svg>
<svg style="position:absolute;left:1230px;top:152px" width="3" height="12" viewBox="0 0 3 12" ><rect x="0" y="0" width="2" height="2" fill="#8d919c"/><rect x="1" y="1" width="2" height="2" fill="#fff"/><rect x="0" y="0" width="2" height="2" fill="#8d919c" opacity=".9"/><rect x="1" y="5" width="2" height="2" fill="#fff"/><rect x="0" y="4" width="2" height="2" fill="#8d919c"/><rect x="1" y="9" width="2" height="2" fill="#fff"/><rect x="0" y="8" width="2" height="2" fill="#8d919c"/></svg>
<div class="tsep" style="left:57px"></div>
<div class="tsep" style="left:131px"></div>
<div class="tsep" style="left:183px"></div>
<div class="tsep" style="left:345px"></div>
<div class="tsep" style="left:595px"></div>
<div class="tsep" style="left:669px"></div>
<div class="tsep" style="left:963px"></div>
<div class="tsep" style="left:1015px"></div>
<div class="tsep" style="left:1068px"></div>
<div class="tsep" style="left:1120px"></div>
<div class="tsep" style="left:1480px"></div>
<div style="position:absolute;left:1485px;top:147px;width:22px;height:21px;box-sizing:border-box;border:1px solid #d9b56c;border-radius:2px;background:linear-gradient(#fde6b4,#fbd086 45%,#f9bd55 55%,#fcd999)"></div>
<svg style="position:absolute;left:13px;top:149.5px" width="16" height="16" viewBox="0 0 16 16" ><circle cx="7" cy="7" r="5.8" stroke="#1f3a50" fill="#fff" stroke-width="1.4" /><rect x="3.5" y="4.5" width="7" height="5" stroke="#1f3a50" fill="none" stroke-width="1.2" /><path d="M2 6.500h10" stroke="#1f3a50" fill="none" stroke-width="1" /><path d="M11.500 11.500l3.500 3.500" stroke="#1f3a50" fill="none" stroke-width="2" /></svg>
<svg style="position:absolute;left:35px;top:149.5px" width="16" height="16" viewBox="0 0 16 16" ><path d="M1 4V1h3 M12 1h3v3 M15 12v3h-3 M4 15H1v-3" stroke="#1f3a50" fill="none" stroke-width="1.5" /><path d="M5 1h6 M5 15h6 M1 5v6 M15 5v6" stroke="#1f3a50" fill="none" stroke-width="1" stroke-dasharray="1 1"/><circle cx="7" cy="7" r="3" stroke="#3f5f78" fill="#fff" stroke-width="1.1" /><path d="M9.500 9.500l3.500 3.500" stroke="#3f5f78" fill="none" stroke-width="1.5" /></svg>
<svg style="position:absolute;left:64.5px;top:149.5px" width="16" height="16" viewBox="0 0 16 16" ><rect x="1" y="1.5" width="3.5" height="14" stroke="#2f4b60" fill="#7f9db8" stroke-width="1" /><path d="M1.500 4h1.500 M1.500 6.500h1.500 M1.500 9h1.500 M1.500 11.500h1.500" stroke="#24384a" fill="none" stroke-width="0.7" /><path d="M6 2l8 12 M6 14L11 8" stroke="#888" fill="none" stroke-width="0.8" /><path d="M7.500 11.500L13 4.500l2.500-3.500l0.500 2l-1.500 3.500z" stroke="#142433" fill="#3f5f7a" stroke-width="0.8" /><path d="M6.500 13l1-1.500" stroke="#000" fill="none" stroke-width="1.2" /></svg>
<svg style="position:absolute;left:87px;top:149.5px" width="16" height="16" viewBox="0 0 16 16" ><path d="M3 13.500L9.500 6.500" stroke="#1a2a38" fill="none" stroke-width="1.8" /><path d="M8 7.500l3-4c1.500-1.500 3.500-1.500 4 0s-0.500 3-2.500 4l-3 1.500z" stroke="#0f1c28" fill="#3f5f80" stroke-width="0.9" /><path d="M1.500 12.500h2.500v2.500h-2.500z" stroke="#777" fill="#999" stroke-width="0.6" /><path d="M11.500 4c1-1 2-1.200 3-0.800" stroke="#9fc0dc" fill="none" stroke-width="0.9" /></svg>
<svg style="position:absolute;left:110px;top:149.5px" width="16" height="16" viewBox="0 0 16 16" ><rect x="8.5" y="2.5" width="7" height="5.5" stroke="#000" fill="#ffee00" stroke-width="1.1" /><path d="M10 4.500h4 M10 6.200h4" stroke="#000" fill="none" stroke-width="0.8" /><path d="M7.500 7.500c-3.500 0-5 2-5 6.500 M0.500 11.500l2 3l2-3" stroke="#000" fill="none" stroke-width="1.1" /></svg>
<svg style="position:absolute;left:139px;top:149.5px" width="16" height="16" viewBox="0 0 16 16" ><path d="M8 1.500v3 M8 4L2.500 14 M8 4l5.500 10 M4 11l4-2.500l4 2.500" stroke="#111" fill="none" stroke-width="1.1" /><rect x="7" y="8" width="2" height="2" stroke="none" fill="#19d9f0" stroke-width="1" /><path d="M1 14.500l1.500-1.500l1.500 1.500z M12 14.500l1.500-1.500l1.500 1.500z" stroke="#2f8a96" fill="#2fb0c0" stroke-width="0.6" /></svg>
<svg style="position:absolute;left:161px;top:149.5px" width="16" height="16" viewBox="0 0 16 16" ><path d="M1 8.500L12.500 2.500C15.500 7 15 11 13.500 14.500z" stroke="#111" fill="none" stroke-width="1.1" /><path d="M11 12.500l2.500 2l1.500-3" stroke="#111" fill="none" stroke-width="1.1" /><rect x="11.5" y="1.5" width="2" height="2" stroke="none" fill="#19d9f0" stroke-width="1" /></svg>
<svg style="position:absolute;left:190.5px;top:149.5px" width="16" height="16" viewBox="0 0 16 16" ><path d="M8 2v12 M2 8h12" stroke="#111" fill="none" stroke-width="1.2" /><path d="M8 0l2.500 3h-5z M8 16l2.500-3h-5z M0 8l3-2.500v5z M16 8l-3-2.500v5z" stroke="none" fill="#111" stroke-width="1" /></svg>
<svg style="position:absolute;left:212.5px;top:149.5px" width="16" height="16" viewBox="0 0 16 16" ><path d="M0 4.500h5 M0 8.500h4 M0 12.500h5" stroke="#4a6f8c" fill="none" stroke-width="1" /><path d="M5.500 8.500h10 M10.500 2v13" stroke="#203a4c" fill="none" stroke-width="1.2" /><path d="M10.500 0.500l2.500 3h-5z M10.500 16l2.500-3h-5z M16 8.500l-3-2.500v5z M4.500 8.500l3-2.500v5z" stroke="none" fill="#203a4c" stroke-width="1" /></svg>
<svg style="position:absolute;left:235px;top:149.5px" width="16" height="16" viewBox="0 0 16 16" ><path d="M10.500 3.200A5.600 5.600 0 1 1 4.500 4" stroke="#000" fill="none" stroke-width="2" /><path d="M2 1.500l5 0.500l-3 4z" stroke="none" fill="#000" stroke-width="1" /></svg>
<svg style="position:absolute;left:257px;top:149.5px" width="16" height="16" viewBox="0 0 16 16" ><path d="M8.500 1v15 M1 8.500h15" stroke="#b8bcc4" fill="none" stroke-width="1" /><path d="M4 11c2 3 7 3 9 0 M6 6l5 5 M11 6l-5 5" stroke="#a8acb6" fill="none" stroke-width="0.9" /></svg>
<svg style="position:absolute;left:279px;top:149.5px" width="16" height="16" viewBox="0 0 16 16" ><path d="M6.500 2.500V14.500H1z M10.500 2.500V14.500H16z" stroke="#000" fill="#fff" stroke-width="1" /><path d="M8.500 0.500V16" stroke="#e01010" fill="none" stroke-width="1.1" /></svg>
<svg style="position:absolute;left:301px;top:149.5px" width="16" height="16" viewBox="0 0 16 16" ><rect x="2" y="1.5" width="12" height="3" stroke="none" fill="#2f4b60" stroke-width="1" /><rect x="4" y="5.5" width="8" height="6" stroke="none" fill="#2f4b60" stroke-width="1" /><rect x="1" y="12.5" width="14" height="2.5" stroke="none" fill="#2f4b60" stroke-width="1" /><path d="M8 0v16" stroke="#f01010" fill="none" stroke-width="1.3" /></svg>
<svg style="position:absolute;left:323px;top:149.5px" width="16" height="16" viewBox="0 0 16 16" ><rect x="3" y="1" width="2" height="2" stroke="#4f7690" fill="#8fb0c4" stroke-width="0.6" /><rect x="7" y="0" width="2" height="2" stroke="#4f7690" fill="#8fb0c4" stroke-width="0.6" /><rect x="11" y="1" width="2" height="2" stroke="#4f7690" fill="#8fb0c4" stroke-width="0.6" /><rect x="0.5" y="4.5" width="2" height="2" stroke="#4f7690" fill="#8fb0c4" stroke-width="0.6" /><rect x="13.5" y="4.5" width="2" height="2" stroke="#4f7690" fill="#8fb0c4" stroke-width="0.6" /><rect x="0" y="8.5" width="2" height="2" stroke="#4f7690" fill="#8fb0c4" stroke-width="0.6" /><rect x="14" y="8.5" width="2" height="2" stroke="#4f7690" fill="#8fb0c4" stroke-width="0.6" /><rect x="1.5" y="12" width="2" height="2" stroke="#4f7690" fill="#8fb0c4" stroke-width="0.6" /><rect x="12.5" y="12" width="2" height="2" stroke="#4f7690" fill="#8fb0c4" stroke-width="0.6" /><rect x="5" y="14" width="2" height="2" stroke="#4f7690" fill="#8fb0c4" stroke-width="0.6" /><rect x="9" y="14" width="2" height="2" stroke="#4f7690" fill="#8fb0c4" stroke-width="0.6" /><path d="M8 3v10 M3 8h10" stroke="#f01010" fill="none" stroke-width="1.1" /><path d="M8 1.500l2 2.500h-4z M8 14.500l2-2.500h-4z M1.500 8l2.500-2v4z M14.500 8l-2.500-2v4z" stroke="none" fill="#f01010" stroke-width="1" /></svg>
<svg style="position:absolute;left:353px;top:149.5px" width="16" height="16" viewBox="0 0 16 16" ><path d="M1 8.500h7" stroke="#000" fill="none" stroke-width="1.6" /><path d="M12 1L5 15" stroke="#000" fill="none" stroke-width="1.2" /><path d="M9 8.500h6.500" stroke="#c01010" fill="none" stroke-width="1.6" stroke-dasharray="1.500 1"/></svg>
<svg style="position:absolute;left:375px;top:149.5px" width="16" height="16" viewBox="0 0 16 16" ><path d="M0.500 4.500h6" stroke="#000" fill="none" stroke-width="1.6" /><path d="M15 1L9 15" stroke="#000" fill="none" stroke-width="1.2" /><path d="M7.500 4.500h5" stroke="#c01010" fill="none" stroke-width="1.6" stroke-dasharray="1.500 1"/></svg>
<svg style="position:absolute;left:397px;top:149.5px" width="16" height="16" viewBox="0 0 16 16" ><g transform="scale(.5) translate(0 4)"><path d="M8 24.500c-5 0-7.500-3-7.500-6.500s3-6.500 7.500-7c0-5 3-9.500 8-9.500s8 4.500 8 9.500c4.500 0.500 7.500 3.500 7.500 7s-2.500 6.500-7.500 6.500z" stroke="#333" fill="#fff" stroke-width="2" /><path d="M9 20.500c-3 0-4.500-1.500-4.500-3.500s1.500-3.500 4.500-3.500h3.500v-4c0-2 1.500-4 3.500-4s3.500 2 3.500 4v4h3.500c3 0 4.500 1.500 4.500 3.500s-1.500 3.500-4.500 3.500z" stroke="#a02020" fill="none" stroke-width="2" /></g></svg>
<svg style="position:absolute;left:419px;top:149.5px" width="16" height="16" viewBox="0 0 16 16" ><path d="M1 14.500h14" stroke="#000" fill="none" stroke-width="1.2" /><rect x="6.5" y="6" width="3" height="8" stroke="none" fill="#1a1a9a" stroke-width="1" /><rect x="10.5" y="2" width="3.5" height="12" stroke="none" fill="#8a0a0a" stroke-width="1" /><text x="2.5" y="9" font-size="6.5" fill="#000" font-family="Liberation Sans, sans-serif" font-weight="bold">1</text><text x="7" y="4.5" font-size="5" fill="#000" font-family="Liberation Sans, sans-serif" font-weight="bold">2</text></svg>
<svg style="position:absolute;left:441px;top:149.5px" width="16" height="16" viewBox="0 0 16 16" ><path d="M0.500 8.500h6 M10 8.500h6" stroke="#000" fill="none" stroke-width="1.6" /><path d="M8 1v4 M8 12v3.500 M4.500 2.500l2 2.500 M11.500 2.500l-2 2.500" stroke="#c01010" fill="none" stroke-width="1" stroke-dasharray="2 .8"/></svg>
<svg style="position:absolute;left:463px;top:149.5px" width="16" height="16" viewBox="0 0 16 16" ><path d="M1 14.500L8 8.500l7 6" stroke="#000" fill="none" stroke-width="1.4" /><path d="M8 1v5 M8 11v4 M3.500 2l3 4 M12.500 2l-3 4" stroke="#c01010" fill="none" stroke-width="1" stroke-dasharray="2 .8"/></svg>
<svg style="position:absolute;left:485px;top:149.5px" width="16" height="16" viewBox="0 0 16 16" ><path d="M0.500 8.500h6 M10 8.500h6" stroke="#000" fill="none" stroke-width="1.1" /><path d="M6.500 8.500l-2.500-1.500v3z M10 8.500l2.500-1.500v3z" stroke="none" fill="#000" stroke-width="1" /><path d="M5.500 5l5.500 7 M11 5l-5.500 7" stroke="#20b8e0" fill="none" stroke-width="1" /></svg>
<svg style="position:absolute;left:507px;top:149.5px" width="16" height="16" viewBox="0 0 16 16" ><path d="M2.500 15V9.500L9.500 2.500H15.500" stroke="#000" fill="none" stroke-width="1.2" /><path d="M2.500 9V2.500H9" stroke="#000" fill="none" stroke-width="1" stroke-dasharray="1 1"/></svg>
<svg style="position:absolute;left:529px;top:149.5px" width="16" height="16" viewBox="0 0 16 16" ><path d="M2.500 15V9.500C2.500 5 6 2.500 10 2.500H15.500" stroke="#000" fill="none" stroke-width="1.2" /><path d="M2.500 9V2.500H9" stroke="#000" fill="none" stroke-width="1" stroke-dasharray="1 1"/></svg>
<svg style="position:absolute;left:551px;top:149.5px" width="16" height="16" viewBox="0 0 16 16" ><rect x="0.7" y="0.7" width="14.6" height="14.6" stroke="#2f4b60" fill="#f4f6f8" stroke-width="1.3" /><path d="M4 11.500V4h7.500" stroke="#4a6f8c" fill="none" stroke-width="1" /><rect x="2.8" y="2.8" width="2.5" height="2.5" stroke="none" fill="#2f4b60" stroke-width="1" /><rect x="2.8" y="10" width="2.5" height="2.5" stroke="none" fill="#2f4b60" stroke-width="1" /><rect x="10.5" y="10" width="2.8" height="2.8" stroke="#2f4b60" fill="#fff" stroke-width="1" /></svg>
<svg style="position:absolute;left:573px;top:149.5px" width="16" height="16" viewBox="0 0 16 16" ><path d="M1.500 14.500L10 6l2.500 2.500L4 17z" stroke="#5a0808" fill="#e03030" stroke-width="0.8" transform="translate(0 -2)"/><path d="M3.500 11l2.500 2.500 M5.500 9l2.500 2.500 M7.500 7l2.500 2.500" stroke="#ffd0d0" fill="none" stroke-width="0.8" /><path d="M11 5.500l2-2 M13.500 1v2 M15.500 3.500h-2 M12 1.500l1 1 M15 5.500l-1-1 M15.500 1l-1.500 1.500" stroke="#555" fill="none" stroke-width="0.8" /></svg>
<svg style="position:absolute;left:604px;top:149.5px" width="16" height="16" viewBox="0 0 16 16" ><path d="M1 3.500h13 M3 1.500v12 M8 1.500v11 M13 1.500v12" stroke="#1f3f58" fill="none" stroke-width="1.1" stroke-dasharray="2 1"/><path d="M3 12.0l1.500 1.500l-1.500 1.500l-1.500-1.500z" stroke="none" fill="#1f3f58" stroke-width="1" /><path d="M8 10.0l1.500 1.500l-1.500 1.500l-1.500-1.500z" stroke="none" fill="#1f3f58" stroke-width="1" /><path d="M13 12.0l1.500 1.500l-1.500 1.500l-1.500-1.500z" stroke="none" fill="#1f3f58" stroke-width="1" /><path d="M3 2.0l1.500 1.500l-1.500 1.500l-1.500-1.500z" stroke="none" fill="#1f3f58" stroke-width="1" /><path d="M13 2.0l1.500 1.500l-1.500 1.500l-1.500-1.500z" stroke="none" fill="#1f3f58" stroke-width="1" /></svg>
<svg style="position:absolute;left:625px;top:149.5px" width="16" height="16" viewBox="0 0 16 16" ><path d="M2.500 3.500l1.500-2h9.500v12l-1.500 2z" stroke="#2f4b60" fill="#5b7f9c" stroke-width="0.9" /><rect x="2" y="3.5" width="10" height="12" stroke="#2f4b60" fill="#8fb0cc" stroke-width="1" /><rect x="4" y="5.5" width="6" height="2.5" stroke="none" fill="#2f4b60" stroke-width="1" /></svg>
<svg style="position:absolute;left:647px;top:149.5px" width="16" height="16" viewBox="0 0 16 16" ><defs><pattern id="chk" width="2" height="2" patternUnits="userSpaceOnUse"><rect width="2" height="2" fill="#2f5f7f"/><rect width="1" height="1" fill="#7fb0d0"/><rect x="1" y="1" width="1" height="1" fill="#7fb0d0"/></pattern></defs><path d="M1 4h14 M1 9h14 M1 14h14 M3 1v15 M8 1v15 M13 1v15" stroke="#1f4a6a" fill="none" stroke-width="1.5" stroke-dasharray="1.500 .5"/></svg>
<svg style="position:absolute;left:677px;top:149.5px" width="16" height="16" viewBox="0 0 16 16" ><rect x="1.5" y="1.5" width="13" height="13" stroke="#2f4b60" fill="#e8e6d0" stroke-width="1.2" /><path d="M2 13l3.500-4l2.500 2.500l2.500-2l3.500 3.500v1.500h-12z" stroke="none" fill="#3f5f7a" stroke-width="1" /><circle cx="10.5" cy="5.5" r="1.3" stroke="#2f4b60" fill="#fff" stroke-width="0.9" /></svg>
<svg style="position:absolute;left:699px;top:149.5px" width="16" height="16" viewBox="0 0 16 16" ><text x="8" y="15" font-size="16.500" fill="#2f4f68" text-anchor="middle" font-family="Liberation Serif, serif" font-weight="bold">A</text></svg>
<svg style="position:absolute;left:721px;top:149.5px" width="16" height="16" viewBox="0 0 16 16" ><path d="M1 6.500l3-4l4 9.500l3-2.500l3.500 0.500" stroke="#2f5068" fill="none" stroke-width="1.1" /><path d="M3.500 2.500h1" stroke="#2f4b60" fill="none" stroke-width="1.5" /></svg>
<svg style="position:absolute;left:743px;top:149.5px" width="16" height="16" viewBox="0 0 16 16" ><path d="M1.500 14c0.500-6 5-10.500 12.500-11" stroke="#2f5068" fill="none" stroke-width="1.1" /><path d="M1.500 12.500l1.300 1.500l-1.300 1.500l-1.300-1.500z M13.800 1.700l1.300 1.300l-1.300 1.300l-1.300-1.300z" stroke="#2f4b60" fill="#fff" stroke-width="0.8" /><circle cx="5.8" cy="6.3" r="1.1" stroke="#2f4b60" fill="#fff" stroke-width="0.8" /></svg>
<svg style="position:absolute;left:765px;top:149.5px" width="16" height="16" viewBox="0 0 16 16" ><circle cx="8" cy="8.5" r="6.8" stroke="#2f5068" fill="none" stroke-width="1.1" /></svg>
<svg style="position:absolute;left:787px;top:149.5px" width="16" height="16" viewBox="0 0 16 16" ><path d="M2.5 4c1-2 2.5-1 3.5-1s2.500-1.500 4 0s2.500-1 3.500 1c1.500 1.500-0.500 3 0 4.500s1 3-1 3.500c-1.500 0.500-2.500-0.500-3.500 0s-2.500 1-3.500 0s-2.500 0.500-3.500-0.500s0-2.500-0.500-3.500s-0.500-3 1-4z" stroke="#15303f" fill="#fff" stroke-width="1.2" stroke-dasharray="2.2 0.5"/></svg>
<svg style="position:absolute;left:809px;top:149.5px" width="16" height="16" viewBox="0 0 16 16" ><path d="M1.500 14.500V9.500h5l-3.500-4l2.500-3l10 12z" stroke="#0d1a24" fill="#5b7f9c" stroke-width="1" /><path d="M1.500 9.500h5l4.500 5" stroke="#0d1a24" fill="#3f5f7a" stroke-width="1" /></svg>
<svg style="position:absolute;left:831px;top:149.5px" width="16" height="16" viewBox="0 0 16 16" ><path d="M1 10l3-6l3.500 9l3.500-9l2.500 6l2-1.500" stroke="#2f5068" fill="none" stroke-width="1" stroke-dasharray="2 1"/><path d="M4 2.2l1.300 1.300l-1.300 1.300l-1.300-1.300z" stroke="#2f4b60" fill="#fff" stroke-width="0.8" /><path d="M7.5 12.2l1.300 1.300l-1.300 1.300l-1.300-1.300z" stroke="#2f4b60" fill="#fff" stroke-width="0.8" /><path d="M11 2.2l1.300 1.300l-1.300 1.300l-1.300-1.300z" stroke="#2f4b60" fill="#fff" stroke-width="0.8" /></svg>
<svg style="position:absolute;left:852px;top:149.5px" width="16" height="16" viewBox="0 0 16 16" ><path d="M0.5 8.5h5 M3 6v5" stroke="#2f4b60" fill="none" stroke-width="1.1" /><text x="5.6" y="12" font-size="9.5" fill="#2f4b60" font-family="Liberation Sans, sans-serif" >2</text><path d="M8.5 12.5h5.5V5.500" stroke="#2f4b60" fill="none" stroke-width="1.1" /></svg>
<svg style="position:absolute;left:875px;top:149.5px" width="16" height="16" viewBox="0 0 16 16" ><text x="0" y="12.5" font-size="12" fill="#111" font-family="Liberation Sans, sans-serif" >?</text><path d="M8.500 1.500c-2 2-1 4.500-1 5.500l-1 1.500l1 1.500c0 1-1 3.500 1 5.500" stroke="#000" fill="none" stroke-width="1" /><rect x="10.5" y="1" width="3" height="14.5" stroke="#000" fill="#f0e010" stroke-width="1.1" /><path d="M11 3.500h2 M11 6h2 M11 8.500h2 M11 11h2 M11 13.500h2" stroke="#554" fill="none" stroke-width="0.7" /></svg>
<svg style="position:absolute;left:897px;top:149.5px" width="16" height="16" viewBox="0 0 16 16" ><rect x="0.8" y="0.8" width="14.4" height="14.4" stroke="#2f4b60" fill="#fff" stroke-width="1.3" /><text x="1.8" y="13" font-size="10.5" fill="#2f4b60" font-family="Liberation Sans, sans-serif" >m</text><text x="10" y="7" font-size="6" fill="#2f4b60" font-family="Liberation Sans, sans-serif" >2</text></svg>
<svg style="position:absolute;left:919px;top:149.5px" width="16" height="16" viewBox="0 0 16 16" ><path d="M0.500 14.500h15 M0.500 14.500L13.500 1.500 M7 14c0-2-1-3.500-2-4.500" stroke="#2f4b60" fill="none" stroke-width="1.2" /><text x="9" y="12.5" font-size="8.5" fill="#2f4b60" font-family="Liberation Sans, sans-serif" >?</text></svg>
<svg style="position:absolute;left:941px;top:149.5px" width="16" height="16" viewBox="0 0 16 16" ><rect x="0.8" y="0.8" width="14.4" height="14.4" stroke="#2f4b60" fill="#fff" stroke-width="1.3" /><text x="1.8" y="8.5" font-size="6.5" fill="#2f4b60" font-family="Liberation Sans, sans-serif" font-weight="bold" textLength="9">mm</text><text x="11.5" y="6" font-size="5" fill="#2f4b60" font-family="Liberation Sans, sans-serif" >2</text><circle cx="4" cy="12" r="1.3" stroke="#2f4b60" fill="none" stroke-width="1" /><circle cx="8" cy="12" r="1.3" stroke="#2f4b60" fill="none" stroke-width="1" /><circle cx="12" cy="12" r="1.3" stroke="#2f4b60" fill="none" stroke-width="1" /></svg>
<svg style="position:absolute;left:971px;top:149.5px" width="16" height="16" viewBox="0 0 16 16" ><path d="M1 9.500h8 M7.500 12.500h8" stroke="#9aa8b8" fill="none" stroke-width="1" /><path d="M2 8.500l2.500-2.500l2.500 2.500z M9.500 11.500l2.500-2.500l2.500 2.500z" stroke="#9aa8b8" fill="none" stroke-width="0.9" /></svg>
<svg style="position:absolute;left:993px;top:149.5px" width="16" height="16" viewBox="0 0 16 16" ><path d="M1 4.500c3-4 10-4 13 0c-3 3.500-10 3.500-13 0z" stroke="#888" fill="#d8d8d8" stroke-width="0.8" /><circle cx="7.5" cy="4.5" r="2.5" stroke="#555" fill="#777" stroke-width="0.8" /><path d="M0.500 12.500h8 M7 15.500h8.500" stroke="#000" fill="none" stroke-width="1.2" /><path d="M2 11.500l2-2.500l2 2.500z M9.500 14.500l2-2.500l2 2.500z" stroke="#1f6a8a" fill="#5fb0d0" stroke-width="0.7" /></svg>
<svg style="position:absolute;left:1023px;top:149.5px" width="16" height="16" viewBox="0 0 16 16" ><rect x="0.8" y="1.8" width="13.4" height="13.4" stroke="#2f4b60" fill="#fff" stroke-width="1.2" /><rect x="3.5" y="4.5" width="8.5" height="8.5" stroke="#8a9cab" fill="#fff" stroke-width="1" /><path d="M0.500 7.500L6 1.500v6z" stroke="none" fill="#2a3a48" stroke-width="1" /></svg>
<svg style="position:absolute;left:1045px;top:149.5px" width="16" height="16" viewBox="0 0 16 16" ><rect x="0.8" y="1.8" width="13.4" height="13.4" stroke="#2f4b60" fill="#fff" stroke-width="1.2" /><rect x="3" y="9" width="4" height="4" stroke="none" fill="#3f5f78" stroke-width="1" /><rect x="8" y="9" width="4" height="4" stroke="none" fill="#3f5f78" stroke-width="1" /><rect x="8" y="4" width="4" height="4" stroke="none" fill="#3f5f78" stroke-width="1" /><path d="M0.500 7.500L6 1.500v6z" stroke="none" fill="#2a3a48" stroke-width="1" /></svg>
<svg style="position:absolute;left:1075px;top:149.5px" width="16" height="16" viewBox="0 0 16 16" ><path d="M5 0.800L1.500 5h2v7.500h7.500v2l4.200-3.500l-4.200-3.500v2h-4.500V5h2z" stroke="#1f3f58" fill="#fff" stroke-width="1.2" /></svg>
<svg style="position:absolute;left:1097px;top:149.5px" width="16" height="16" viewBox="0 0 16 16" ><path d="M3.500 1v12.500h12 M3.500 1l-2 2.500 M3.500 1l2 2.500 M15.500 13.500l-2.500-2 M15.500 13.500l-2.500 2" stroke="#9fb0bd" fill="none" stroke-width="1.1" /><path d="M4 2l10 11 M14 2L4 13 M9 2l6 6 M2 8l6 6" stroke="#c8d0d8" fill="none" stroke-width="0.8" stroke-dasharray="1 1"/></svg>
<svg style="position:absolute;left:1127px;top:149.5px" width="16" height="16" viewBox="0 0 16 16" ><path d="M2.500 1.500v13h12 M2.500 1l-1.500 2 M2.500 1l1.500 2 M15 14.500l-2-1.500 M15 14.500l-2 1.500" stroke="#9a9ea8" fill="none" stroke-width="1.3" /><path d="M3 5.500h10 M12.500 5.500v8" stroke="#9a9ea8" fill="none" stroke-width="0.8" stroke-dasharray="1 1"/><text x="4" y="14" font-size="7" fill="#9a9ea8" font-family="Liberation Sans, sans-serif" font-weight="bold" textLength="11">X,Y</text></svg>
<svg style="position:absolute;left:1149px;top:149.5px" width="16" height="16" viewBox="0 0 16 16" ><path d="M2.500 1.500v13h12 M2.500 1l-1.500 2 M2.500 1l1.500 2 M15 14.500l-2-1.500 M15 14.500l-2 1.500" stroke="#9a9ea8" fill="none" stroke-width="1.3" /><path d="M3 5.500h10 M12.500 5.500v8" stroke="#9a9ea8" fill="none" stroke-width="0.8" stroke-dasharray="1 1"/><text x="7.5" y="13.5" font-size="8" fill="#9a9ea8" font-family="Liberation Sans, sans-serif" font-weight="bold">Z</text></svg>
<svg style="position:absolute;left:1171px;top:149.5px" width="16" height="16" viewBox="0 0 16 16" ><path d="M2.500 1.500v13h12 M2.500 1l-1.500 2 M2.500 1l1.500 2 M15 14.500l-2-1.500 M15 14.500l-2 1.500" stroke="#9a9ea8" fill="none" stroke-width="1.3" /><path d="M3 5.500h10 M12.500 5.500v8" stroke="#9a9ea8" fill="none" stroke-width="0.8" stroke-dasharray="1 1"/><text x="4.5" y="14" font-size="7.5" fill="#9a9ea8" font-family="Liberation Sans, sans-serif" font-weight="bold" textLength="10">3R</text></svg>
<svg style="position:absolute;left:1193px;top:149.5px" width="16" height="16" viewBox="0 0 16 16" ><path d="M2.500 1.500v13h12 M2.500 1l-1.500 2 M2.500 1l1.500 2 M15 14.500l-2-1.500 M15 14.500l-2 1.500" stroke="#9a9ea8" fill="none" stroke-width="1.3" /><path d="M3 5.500h10 M12.500 5.500v8" stroke="#9a9ea8" fill="none" stroke-width="0.8" stroke-dasharray="1 1"/><circle cx="9.5" cy="9.5" r="3.3" stroke="#9a9ea8" fill="none" stroke-width="1" /><path d="M9.500 5v9 M5 9.500h9" stroke="#9a9ea8" fill="none" stroke-width="0.9" /></svg>
<svg style="position:absolute;left:1238px;top:149.5px" width="16" height="16" viewBox="0 0 16 16" ><path d="M3.500 1.500h9c2 4 2 9 0 13h-9c-2-4-2-9 0-13z" stroke="#b4b7be" fill="#a9acb3" stroke-width="1" /><path d="M5.500 2v12 M10.500 2v12" stroke="#c4c7ce" fill="none" stroke-width="0.8" /></svg>
<svg style="position:absolute;left:1260px;top:149.5px" width="16" height="16" viewBox="0 0 16 16" ><path d="M1.500 15V9l3-3.500V11h2.500V7.500h2.500V4.500h2.500V1.500h2.500" stroke="#8f939b" fill="none" stroke-width="1.2" /><path d="M4 15V12.500h2.500V9.500h2.500V6.500h2.500V3.500h3 M1.500 15h3" stroke="#a4a7ae" fill="none" stroke-width="1.1" /><path d="M12 1l1.500 1.500 M14 0.500l1 1" stroke="#999" fill="none" stroke-width="0.8" /></svg>
<svg style="position:absolute;left:1282px;top:149.5px" width="16" height="16" viewBox="0 0 16 16" ><path d="M0.500 12.500c0-6 3-10 7.500-10s7.500 4 7.500 10z" stroke="#9a9da5" fill="#a9acb3" stroke-width="0.9" /><path d="M0.500 13.500h15" stroke="#9a9da5" fill="none" stroke-width="1.4" /><path d="M4 11c0.500-4 2-6.500 4-7 M12 11c-0.500-4-2-6.500-4-7 M8 4v7.500" stroke="#d4d6db" fill="none" stroke-width="0.9" /></svg>
<svg style="position:absolute;left:1304px;top:149.5px" width="16" height="16" viewBox="0 0 16 16" ><path d="M7 1.500h2l0.500 3l2 8h-7l2-8z" stroke="#b9bcc3" fill="#b0b3ba" stroke-width="0.8" /><path d="M3 13.500h10" stroke="#b0b3ba" fill="none" stroke-width="1.6" /><path d="M8 14v2" stroke="#b0b3ba" fill="none" stroke-width="1.2" /></svg>
<svg style="position:absolute;left:1326px;top:149.5px" width="16" height="16" viewBox="0 0 16 16" ><path d="M9 1.500h5v13h-11v-5h6z" stroke="#b4b7be" fill="#aaadb4" stroke-width="0.8" /></svg>
<svg style="position:absolute;left:1348px;top:149.5px" width="16" height="16" viewBox="0 0 16 16" ><path d="M1.500 3h9c3.500 0 5 2.500 5 5s-1.500 5-5 5h-9z" stroke="#b4b7be" fill="#a4a7ae" stroke-width="0.8" /></svg>
<svg style="position:absolute;left:1370px;top:149.5px" width="16" height="16" viewBox="0 0 16 16" ><path d="M2.500 1.500v12h12.500" stroke="#000" fill="none" stroke-width="1.1" /><path d="M2.500 0.500l-1.500 2.200h3z M16 13.500l-2.200-1.500v3z" stroke="none" fill="#000" stroke-width="1" /><path d="M2.500 13.500c3-4.500 6-7 10-7.500" stroke="#000" fill="none" stroke-width="1" /><path d="M8 9c2-2 4.500-3 6-1.500l0.500 3" stroke="#e01010" fill="none" stroke-width="0.9" stroke-dasharray="1.500 .8"/></svg>
<svg style="position:absolute;left:1392px;top:149.5px" width="16" height="16" viewBox="0 0 16 16" ><path d="M2.500 1.500v12h12.500" stroke="#000" fill="none" stroke-width="1.1" /><path d="M2.500 0.500l-1.500 2.200h3z M16 13.500l-2.200-1.500v3z" stroke="none" fill="#000" stroke-width="1" /><path d="M2.500 13.500L12 3" stroke="#000" fill="none" stroke-width="1.1" /><path d="M12 1.300l1.500 1.500l-1.500 1.500l-1.500-1.500z" stroke="none" fill="#e01010" stroke-width="1" /><text x="9.5" y="12.5" font-size="8" fill="#444" font-family="Liberation Sans, sans-serif" font-weight="bold">P</text></svg>
<svg style="position:absolute;left:1414px;top:149.5px" width="16" height="16" viewBox="0 0 16 16" ><path d="M2.500 1.500v12h12.500" stroke="#000" fill="none" stroke-width="1.1" /><path d="M2.500 0.500l-1.500 2.200h3z M16 13.500l-2.200-1.500v3z" stroke="none" fill="#000" stroke-width="1" /><path d="M2.500 13.500L12 3" stroke="#777" fill="none" stroke-width="0.8" /><path d="M12 0.500l1.300 1.300l-1.300 1.300l-1.300-1.300z" stroke="none" fill="#111" stroke-width="1" /><text x="9.5" y="12.5" font-size="9" fill="#000" font-family="Liberation Sans, sans-serif" font-weight="bold">?</text></svg>
<svg style="position:absolute;left:1436px;top:149.5px" width="16" height="16" viewBox="0 0 16 16" ><path d="M1.500 1v13.500h14" stroke="#666" fill="none" stroke-width="1.1" /><path d="M1.500 12c2-2 2.500-9 4.500-9s2.500 5 4.500 7s3 2.500 4.500 3" stroke="#1a8a3a" fill="none" stroke-width="1.2" /><path d="M1.500 13c2-1 3-6.500 4.500-6.500s3 3.500 5 5s2.500 1.500 4 2" stroke="#e01010" fill="none" stroke-width="1.1" /></svg>
<svg style="position:absolute;left:1458px;top:149.5px" width="16" height="16" viewBox="0 0 16 16" ><path d="M7.500 0.500h7l-4 5h4.500L3.500 15.500l3-6.500h-4.500z" stroke="#222" fill="#f0e020" stroke-width="0.9" /><path d="M6 2l-3 5 M11 7l-6 6" stroke="#777" fill="none" stroke-width="0.7" /></svg>
<svg style="position:absolute;left:1488px;top:149.5px" width="16" height="16" viewBox="0 0 16 16" ><path d="M1.500 15V6.500h13V15 M1.500 10.500h13 M8 6.500v4" stroke="#111" fill="none" stroke-width="1.4" /><path d="M1 1.500h14 M1 3.500h14 M1 1.500v4 M15 1.500v4 M8 1.500v4" stroke="#b08a50" fill="none" stroke-width="0.7" stroke-dasharray="1 1"/><circle cx="11.5" cy="12" r="2.6" stroke="#e01010" fill="none" stroke-width="1.8" /><path d="M11.500 8.500v3" stroke="#e01010" fill="none" stroke-width="1.4" /></svg>
<svg style="position:absolute;left:1511px;top:149.5px" width="16" height="16" viewBox="0 0 16 16" ><path d="M1.500 15V2.500h13V15 M1.500 6.500h13 M1.500 10.500h13 M8 2.500v8" stroke="#111" fill="none" stroke-width="1.4" /></svg>
<div style="position:absolute;left:1px;top:172px;width:24px;height:568px;background:linear-gradient(90deg,#e9ecf2 0,#e0e3ea 8px,#cfd3dd 22px);border-radius:0 0 3px 3px;border-right:1px solid #b8bcc7"></div>
<div style="position:absolute;left:1px;top:729px;width:24px;height:11px;background:linear-gradient(90deg,#c9cdd7,#aeb2be);border-radius:0 0 4px 4px"></div>
<svg style="position:absolute;left:5px;top:174px" width="15" height="3" viewBox="0 0 15 3" ><rect x="1" y="1" width="2" height="2" fill="#fff"/><rect x="0" y="0" width="2" height="2" fill="#8d919c"/><rect x="5" y="1" width="2" height="2" fill="#fff"/><rect x="4" y="0" width="2" height="2" fill="#8d919c"/><rect x="9" y="1" width="2" height="2" fill="#fff"/><rect x="8" y="0" width="2" height="2" fill="#8d919c"/><rect x="13" y="1" width="2" height="2" fill="#fff"/><rect x="12" y="0" width="2" height="2" fill="#8d919c"/></svg>
<svg style="position:absolute;left:15px;top:731px" width="8" height="7" viewBox="0 0 8 7" ><path d="M0.5 0.5v6" stroke="#6b6f7a"/><path d="M1.5 0.5v6" stroke="#fff"/><path d="M4.5 1.5l3 2.5l-3 2.5z" fill="#fff"/><path d="M3.5 1l3 2.5l-3 2.5z" fill="#6b6f7a"/></svg>
<svg style="position:absolute;left:5px;top:183px" width="16" height="16" viewBox="0 0 16 16" ><rect x="0.7" y="1.7" width="14.6" height="12" stroke="#777" fill="#fff" stroke-width="1.2" /><path d="M5 5h7.500 M5 8h7.500 M5 11h7.500" stroke="#2f4b8a" fill="none" stroke-width="1.2" /><path d="M2.500 5h1.500 M2.500 8h1.500 M2.500 11h1.500" stroke="#8fc0e8" fill="none" stroke-width="1.4" /><rect x="12.5" y="2.5" width="1.5" height="1.5" stroke="none" fill="#e01030" stroke-width="1" /></svg>
<div style="position:absolute;left:6px;top:204px;width:14px;height:1px;background:#9a9ea8;box-shadow:0 1px 0 #fff"></div>
<svg style="position:absolute;left:5px;top:211px" width="16" height="16" viewBox="0 0 16 16" ><rect x="1" y="1" width="6" height="3.5" stroke="#5a1a2a" fill="#d08a96" stroke-width="0.9" /><rect x="2.5" y="4.5" width="6" height="3.5" stroke="#10103a" fill="#5a5a9a" stroke-width="0.9" /><rect x="4.5" y="7.5" width="6" height="3.5" stroke="#5a1a2a" fill="#d08a96" stroke-width="0.9" /><rect x="8.5" y="11" width="7" height="4" stroke="#10103a" fill="#5a5a9a" stroke-width="1.2" /><path d="M7 1.5v9l2-2l1.500 3.500l1.500-0.700l-1.500-3.300h2.800z" stroke="#000" fill="#fff" stroke-width="0.9" /></svg>
<svg style="position:absolute;left:5px;top:232px" width="16" height="16" viewBox="0 0 16 16" ><rect x="1" y="1" width="6" height="3.5" stroke="#888" fill="#c8c8c8" stroke-width="0.9" /><rect x="2.5" y="4.5" width="6" height="3.5" stroke="#888" fill="#b0b0b0" stroke-width="0.9" /><rect x="4.5" y="7.5" width="6" height="3.5" stroke="#888" fill="#c8c8c8" stroke-width="0.9" /><rect x="8.5" y="11" width="7" height="4" stroke="#777" fill="#c0c0c0" stroke-width="1.2" /><path d="M7 1.5v9l2-2l1.500 3.500l1.500-0.700l-1.500-3.300h2.800z" stroke="#000" fill="#fff" stroke-width="0.9" /></svg>
<svg style="position:absolute;left:5px;top:254px" width="16" height="16" viewBox="0 0 16 16" ><rect x="7" y="1" width="7" height="4" stroke="#10103a" fill="#5a5a9a" stroke-width="1.2" /><rect x="3" y="5.5" width="6" height="3.5" stroke="#5a1a2a" fill="#d08a96" stroke-width="0.9" /><rect x="1" y="8.5" width="6" height="3" stroke="#10103a" fill="#5a5a9a" stroke-width="0.9" /><rect x="1" y="11.5" width="6" height="3.5" stroke="#5a1a2a" fill="#d08a96" stroke-width="0.9" /><path d="M5.500 12.500L11 6v9z" stroke="#000" fill="#fff" stroke-width="0.9" /><path d="M14.500 6v9 M13 7.500l1.500-2l1.500 2 M13 13.500l1.500 2l1.500-2" stroke="#000" fill="none" stroke-width="1" /></svg>
<svg style="position:absolute;left:5px;top:275px" width="16" height="16" viewBox="0 0 16 16" ><rect x="1" y="1" width="5.5" height="3.5" stroke="#b9a4aa" fill="#e6ccd2" stroke-width="0.9" /><rect x="3.5" y="5.5" width="5.5" height="3.5" stroke="#b9a4aa" fill="#e6ccd2" stroke-width="0.9" /><rect x="8" y="10.5" width="7" height="4" stroke="#bbb" fill="#ddd" stroke-width="0.9" /><path d="M12.500 1v7 M9 4.500h7" stroke="#9ab" fill="none" stroke-width="0.9" stroke-dasharray="1 1"/></svg>
<svg style="position:absolute;left:5px;top:296px" width="16" height="16" viewBox="0 0 16 16" ><path d="M1 8.500h10 M1 11.500h10 M1 14.500h10 M3.500 8.500v6 M7 8.500v6 M10.500 8.500v6 M1 5.500h4" stroke="#b06060" fill="none" stroke-width="1" /><rect x="3.5" y="2" width="7" height="5" stroke="#10103a" fill="#5a5a9a" stroke-width="1.2" /><path d="M9.5 4v9l2-2l1.500 3.500l1.500-0.700l-1.500-3.300h2.800z" stroke="#000" fill="#fff" stroke-width="0.9" /></svg>
<div style="position:absolute;left:6px;top:317px;width:14px;height:1px;background:#9a9ea8;box-shadow:0 1px 0 #fff"></div>
<svg style="position:absolute;left:5px;top:325px" width="16" height="16" viewBox="0 0 16 16" ><text x="0" y="12.5" font-size="12" fill="#111" font-family="Liberation Sans, sans-serif" >?</text><path d="M8.500 1.500c-2 2-1 4.500-1 5.500l-1 1.500l1 1.500c0 1-1 3.500 1 5.500" stroke="#000" fill="none" stroke-width="1" /><rect x="10.5" y="1" width="3" height="14.5" stroke="#000" fill="#f0e010" stroke-width="1.1" /><path d="M11 3.500h2 M11 6h2 M11 8.500h2 M11 11h2 M11 13.500h2" stroke="#554" fill="none" stroke-width="0.7" /></svg>
<div style="position:absolute;left:6px;top:347px;width:14px;height:1px;background:#9a9ea8;box-shadow:0 1px 0 #fff"></div>
<svg style="position:absolute;left:5px;top:354px" width="16" height="16" viewBox="0 0 16 16" ><rect x="2.5" y="1.5" width="10" height="13" stroke="#000" fill="#fff" stroke-width="1.5" rx="1.500"/><path d="M4.500 5h5 M4.500 7.500h6 M4.500 10h4 M4.500 12.500h5" stroke="#000" fill="none" stroke-width="1" /></svg>
<div style="position:absolute;left:6px;top:376px;width:14px;height:1px;background:#9a9ea8;box-shadow:0 1px 0 #fff"></div>
<svg style="position:absolute;left:5px;top:382px" width="16" height="16" viewBox="0 0 16 16" ><path d="M4.500 1.500h11l-4 4h-11z M4.500 10.500h11l-4 4h-11z" stroke="#b01818" fill="#fff" stroke-width="1.1" /><path d="M8 13V4.500 M5.500 7L8 4l2.500 3" stroke="#2f5f8c" fill="none" stroke-width="1.1" /></svg>
<svg style="position:absolute;left:5px;top:403px" width="16" height="16" viewBox="0 0 16 16" ><path d="M1.5 1.5h5l2.500 2.500v7h-7.500z" stroke="#000" fill="#fff" stroke-width="1.1" /><path d="M3.0 5.5h4 M3.0 7.5h4 M3.0 3.5h2" stroke="#000" fill="none" stroke-width="0.8" /><path d="M7.5 5.5h5l2.500 2.500v7h-7.500z" stroke="#000" fill="#fff" stroke-width="1.1" /><path d="M9.0 9.5h4 M9.0 11.5h4 M9.0 7.5h2" stroke="#000" fill="none" stroke-width="0.8" /></svg>
<svg style="position:absolute;left:5px;top:424px" width="16" height="16" viewBox="0 0 16 16" ><rect x="1.5" y="3" width="10" height="11" stroke="#a9b6c4" fill="#d5dde6" stroke-width="1" /><rect x="4.5" y="1.5" width="4" height="3" stroke="#a9b6c4" fill="#e6ebf0" stroke-width="1" /><rect x="7" y="8.5" width="7.5" height="6" stroke="#b4bec9" fill="#f2f4f7" stroke-width="1" /><path d="M8.500 11h4" stroke="#b4bec9" fill="none" stroke-width="0.8" /></svg>
<svg style="position:absolute;left:5px;top:446px" width="16" height="16" viewBox="0 0 16 16" ><rect x="1.5" y="4.5" width="7" height="10" stroke="#7f9cc0" fill="#a9c0dc" stroke-width="1" /><rect x="8.5" y="1.5" width="6" height="8" stroke="#4a6f8c" fill="none" stroke-width="1" stroke-dasharray="1.500 1"/><path d="M10 11c2 0 4-1 4-3" stroke="#204060" fill="none" stroke-width="1" /></svg>
<svg style="position:absolute;left:5px;top:466px" width="16" height="16" viewBox="0 0 16 16" ><rect x="1.5" y="1.5" width="5" height="7" stroke="#6f8fb4" fill="#b4c6de" stroke-width="0.9" /><rect x="5" y="4.5" width="5" height="7" stroke="#6f8fb4" fill="#b4c6de" stroke-width="0.9" /><rect x="8.5" y="8" width="5" height="7" stroke="#6f8fb4" fill="#b4c6de" stroke-width="0.9" /><path d="M9 2.500c2-1.500 4.500-1 5 1.500 M12.500 3.500l1.500 1l1-1.500" stroke="#204a6a" fill="none" stroke-width="1" /></svg>
<svg style="position:absolute;left:5px;top:487px" width="16" height="16" viewBox="0 0 16 16" ><rect x="1" y="1.5" width="4" height="8" stroke="#6f8fb4" fill="#b4c6de" stroke-width="0.9" /><rect x="6" y="3" width="4" height="8" stroke="#6f8fb4" fill="#b4c6de" stroke-width="0.9" /><rect x="11" y="1.5" width="4" height="8" stroke="#6f8fb4" fill="#b4c6de" stroke-width="0.9" /><path d="M1 11.500c4 4 10 4 14 0.500 M13 11.500h2.500v2.500" stroke="#0f2f3f" fill="none" stroke-width="1.1" /></svg>
<svg style="position:absolute;left:5px;top:508px" width="16" height="16" viewBox="0 0 16 16" ><circle cx="8" cy="2.5" r="1.6" stroke="#111" fill="#a898aa" stroke-width="1" /><circle cx="13" cy="5.5" r="1.6" stroke="#111" fill="#a898aa" stroke-width="1" /><circle cx="13" cy="11" r="1.6" stroke="#111" fill="#a898aa" stroke-width="1" /><circle cx="8" cy="14" r="1.6" stroke="#111" fill="#a898aa" stroke-width="1" /><circle cx="3" cy="11" r="1.6" stroke="#111" fill="#a898aa" stroke-width="1" /><circle cx="3" cy="5.5" r="1.6" stroke="#111" fill="#a898aa" stroke-width="1" /></svg>
<div style="position:absolute;left:6px;top:531px;width:14px;height:1px;background:#9a9ea8;box-shadow:0 1px 0 #fff"></div>
<svg style="position:absolute;left:5px;top:537px" width="16" height="16" viewBox="0 0 16 16" ><path d="M1 11l6-4h8v5l-6 3.500h-8z" stroke="#9a9da5" fill="#b8bbc2" stroke-width="0.9" /><path d="M1 15L15 1" stroke="#555" fill="none" stroke-width="0.9" /></svg>
<svg style="position:absolute;left:5px;top:558px" width="16" height="16" viewBox="0 0 16 16" ><rect x="1" y="1.5" width="5" height="13" stroke="#9a9da5" fill="#c8cbd2" stroke-width="1.2" /><path d="M2 4h2 M2 6.500h2 M2 9h2 M2 11.500h2" stroke="#9a9da5" fill="none" stroke-width="0.8" /><path d="M7 1.500h8c-1.500 4-1.500 9 0 13h-8z" stroke="#9a9da5" fill="#d8dbe0" stroke-width="1.2" /><path d="M12 7v6l1.500-1.500l1 2" stroke="#777" fill="#aaa" stroke-width="0.7" /></svg>
<svg style="position:absolute;left:5px;top:580px" width="16" height="16" viewBox="0 0 16 16" ><path d="M1 13l4-3V4.500h1.500V7h2V4h1.500V7h2V5h1.500v4.500L15 9l-6 6h-8z" stroke="#9a9da5" fill="#b4b7be" stroke-width="0.9" /><path d="M1 13h8l6-4.500" stroke="#888" fill="none" stroke-width="0.8" /></svg>
<svg style="position:absolute;left:5px;top:600px" width="16" height="16" viewBox="0 0 16 16" ><path d="M1 9.500h14v3.500h-14z" stroke="none" fill="#b8bbc2" stroke-width="1" /><path d="M1 9.500h14 M1 7.500h14 M1 13h14" stroke="#9a9da5" fill="none" stroke-width="0.8" /><path d="M1 15L15 1" stroke="#555" fill="none" stroke-width="0.9" /></svg>
<svg style="position:absolute;left:5px;top:622px" width="16" height="16" viewBox="0 0 16 16" ><path d="M4 15V4h11" stroke="#9a9da5" fill="none" stroke-width="3" /><path d="M4 15V4h11" stroke="#d8dbe0" fill="none" stroke-width="1.2" stroke-dasharray="1 1"/><circle cx="4" cy="3.5" r="2.3" stroke="#9a9da5" fill="#c8cbd2" stroke-width="1" /></svg>
<div style="position:absolute;left:6px;top:644px;width:14px;height:1px;background:#9a9ea8;box-shadow:0 1px 0 #fff"></div>
<svg style="position:absolute;left:5px;top:650px" width="16" height="16" viewBox="0 0 16 16" ><path d="M2 4c0-2 4-2 4 0v7c0 2-4 2-4 0z" stroke="#9a9da5" fill="#b4b7be" stroke-width="1" /><rect x="7" y="2.5" width="7.5" height="7" stroke="#9a9da5" fill="#c8cbd2" stroke-width="1" /><ellipse cx="10.5" cy="12" rx="3.5" ry="2.5" stroke="#9a9da5" fill="#a4a7ae" stroke-width="1" /></svg>
<div style="position:absolute;left:6px;top:673px;width:14px;height:1px;background:#9a9ea8;box-shadow:0 1px 0 #fff"></div>
<svg style="position:absolute;left:5px;top:680px" width="16" height="16" viewBox="0 0 16 16" ><text x="1" y="6" font-size="5" fill="#8a8d95" font-family="Liberation Sans, sans-serif" textLength="14">AUTO</text><path d="M1 7.500h14" stroke="#8a8d95" fill="none" stroke-width="0.7" /><text x="1.5" y="13" font-size="5.5" fill="#8a8d95" font-family="Liberation Sans, sans-serif" textLength="13">RBC</text><path d="M1.500 15h13" stroke="#9a9da5" fill="none" stroke-width="1.5" /></svg>
<div style="position:absolute;left:6px;top:702px;width:14px;height:1px;background:#9a9ea8;box-shadow:0 1px 0 #fff"></div>
<svg style="position:absolute;left:5px;top:709px" width="16" height="16" viewBox="0 0 16 16" ><path d="M3 2.500h3v2.500l1 2h2l1-2V2.500h3v3l2 5v4.500h-5.500v-4h-1v4h-5.500v-4.500l2-5z" stroke="none" fill="#000" stroke-width="1" /><path d="M2.500 12h2 M11.500 12h2" stroke="#fff" fill="none" stroke-width="1.2" /><path d="M4 4h1 M11 4h1" stroke="#fff" fill="none" stroke-width="0.8" /></svg>
<div style="position:absolute;left:26px;top:175px;width:20px;height:85px;background:linear-gradient(90deg,#fff6d6,#fde49a 55%,#fcd56e);border-right:1px solid #c2c2c2;border-bottom:1px solid #c2c2c2"></div>
<div class="t" style="left:40.5px;top:177.5px;font-size:12px;color:#85776a;transform-origin:0 0;transform:rotate(90deg);letter-spacing:-0.1px">Yapı Ağacı</div>
<div style="position:absolute;left:1843px;top:171px;width:24px;height:462px;background:linear-gradient(90deg,#e9ecf2 0,#e0e3ea 8px,#cfd3dd 22px);border-radius:3px 3px 4px 4px;box-shadow:1px 0 0 #b8bcc7"></div>
<div style="position:absolute;left:1843px;top:623px;width:24px;height:10px;background:linear-gradient(90deg,#c9cdd7,#aeb2be);border-radius:0 0 4px 4px"></div>
<svg style="position:absolute;left:1848px;top:173px" width="15" height="3" viewBox="0 0 15 3" ><rect x="1" y="1" width="2" height="2" fill="#fff"/><rect x="0" y="0" width="2" height="2" fill="#8d919c"/><rect x="5" y="1" width="2" height="2" fill="#fff"/><rect x="4" y="0" width="2" height="2" fill="#8d919c"/><rect x="9" y="1" width="2" height="2" fill="#fff"/><rect x="8" y="0" width="2" height="2" fill="#8d919c"/><rect x="13" y="1" width="2" height="2" fill="#fff"/><rect x="12" y="0" width="2" height="2" fill="#8d919c"/></svg>
<svg style="position:absolute;left:1857px;top:625px" width="8" height="7" viewBox="0 0 8 7" ><path d="M0.5 0.5v6" stroke="#6b6f7a"/><path d="M1.5 0.5v6" stroke="#fff"/><path d="M4.5 1.5l3 2.5l-3 2.5z" fill="#fff"/><path d="M3.5 1l3 2.5l-3 2.5z" fill="#6b6f7a"/></svg>
<div style="position:absolute;left:1869px;top:171px;width:24px;height:474px;background:linear-gradient(90deg,#e9ecf2 0,#e0e3ea 8px,#cfd3dd 22px);border-radius:3px 3px 4px 4px;box-shadow:1px 0 0 #b8bcc7"></div>
<div style="position:absolute;left:1869px;top:635px;width:24px;height:10px;background:linear-gradient(90deg,#c9cdd7,#aeb2be);border-radius:0 0 4px 4px"></div>
<svg style="position:absolute;left:1874px;top:173px" width="15" height="3" viewBox="0 0 15 3" ><rect x="1" y="1" width="2" height="2" fill="#fff"/><rect x="0" y="0" width="2" height="2" fill="#8d919c"/><rect x="5" y="1" width="2" height="2" fill="#fff"/><rect x="4" y="0" width="2" height="2" fill="#8d919c"/><rect x="9" y="1" width="2" height="2" fill="#fff"/><rect x="8" y="0" width="2" height="2" fill="#8d919c"/><rect x="13" y="1" width="2" height="2" fill="#fff"/><rect x="12" y="0" width="2" height="2" fill="#8d919c"/></svg>
<svg style="position:absolute;left:1883px;top:637px" width="8" height="7" viewBox="0 0 8 7" ><path d="M0.5 0.5v6" stroke="#6b6f7a"/><path d="M1.5 0.5v6" stroke="#fff"/><path d="M4.5 1.5l3 2.5l-3 2.5z" fill="#fff"/><path d="M3.5 1l3 2.5l-3 2.5z" fill="#6b6f7a"/></svg>
<div style="position:absolute;left:1869px;top:646px;width:24px;height:315px;background:linear-gradient(90deg,#e9ecf2 0,#e0e3ea 8px,#cfd3dd 22px);border-radius:3px 3px 4px 4px;box-shadow:1px 0 0 #b8bcc7"></div>
<div style="position:absolute;left:1869px;top:951px;width:24px;height:10px;background:linear-gradient(90deg,#c9cdd7,#aeb2be);border-radius:0 0 4px 4px"></div>
<svg style="position:absolute;left:1874px;top:648px" width="15" height="3" viewBox="0 0 15 3" ><rect x="1" y="1" width="2" height="2" fill="#fff"/><rect x="0" y="0" width="2" height="2" fill="#8d919c"/><rect x="5" y="1" width="2" height="2" fill="#fff"/><rect x="4" y="0" width="2" height="2" fill="#8d919c"/><rect x="9" y="1" width="2" height="2" fill="#fff"/><rect x="8" y="0" width="2" height="2" fill="#8d919c"/><rect x="13" y="1" width="2" height="2" fill="#fff"/><rect x="12" y="0" width="2" height="2" fill="#8d919c"/></svg>
<svg style="position:absolute;left:1883px;top:953px" width="8" height="7" viewBox="0 0 8 7" ><path d="M0.5 0.5v6" stroke="#6b6f7a"/><path d="M1.5 0.5v6" stroke="#fff"/><path d="M4.5 1.5l3 2.5l-3 2.5z" fill="#fff"/><path d="M3.5 1l3 2.5l-3 2.5z" fill="#6b6f7a"/></svg>
<div style="position:absolute;left:1895px;top:171px;width:23px;height:658px;background:linear-gradient(90deg,#e9ecf2 0,#e0e3ea 8px,#cfd3dd 22px);border-radius:3px 3px 4px 4px;box-shadow:1px 0 0 #b8bcc7"></div>
<div style="position:absolute;left:1895px;top:819px;width:23px;height:10px;background:linear-gradient(90deg,#c9cdd7,#aeb2be);border-radius:0 0 4px 4px"></div>
<svg style="position:absolute;left:1900px;top:173px" width="15" height="3" viewBox="0 0 15 3" ><rect x="1" y="1" width="2" height="2" fill="#fff"/><rect x="0" y="0" width="2" height="2" fill="#8d919c"/><rect x="5" y="1" width="2" height="2" fill="#fff"/><rect x="4" y="0" width="2" height="2" fill="#8d919c"/><rect x="9" y="1" width="2" height="2" fill="#fff"/><rect x="8" y="0" width="2" height="2" fill="#8d919c"/><rect x="13" y="1" width="2" height="2" fill="#fff"/><rect x="12" y="0" width="2" height="2" fill="#8d919c"/></svg>
<svg style="position:absolute;left:1908px;top:821px" width="8" height="7" viewBox="0 0 8 7" ><path d="M0.5 0.5v6" stroke="#6b6f7a"/><path d="M1.5 0.5v6" stroke="#fff"/><path d="M4.5 1.5l3 2.5l-3 2.5z" fill="#fff"/><path d="M3.5 1l3 2.5l-3 2.5z" fill="#6b6f7a"/></svg>
<div style="position:absolute;left:1895px;top:830px;width:23px;height:247px;background:linear-gradient(90deg,#e9ecf2 0,#e0e3ea 8px,#cfd3dd 22px);border-radius:3px 3px 4px 4px;box-shadow:1px 0 0 #b8bcc7"></div>
<div style="position:absolute;left:1895px;top:1067px;width:23px;height:10px;background:linear-gradient(90deg,#c9cdd7,#aeb2be);border-radius:0 0 4px 4px"></div>
<svg style="position:absolute;left:1900px;top:832px" width="15" height="3" viewBox="0 0 15 3" ><rect x="1" y="1" width="2" height="2" fill="#fff"/><rect x="0" y="0" width="2" height="2" fill="#8d919c"/><rect x="5" y="1" width="2" height="2" fill="#fff"/><rect x="4" y="0" width="2" height="2" fill="#8d919c"/><rect x="9" y="1" width="2" height="2" fill="#fff"/><rect x="8" y="0" width="2" height="2" fill="#8d919c"/><rect x="13" y="1" width="2" height="2" fill="#fff"/><rect x="12" y="0" width="2" height="2" fill="#8d919c"/></svg>
<svg style="position:absolute;left:1908px;top:1069px" width="8" height="7" viewBox="0 0 8 7" ><path d="M0.5 0.5v6" stroke="#6b6f7a"/><path d="M1.5 0.5v6" stroke="#fff"/><path d="M4.5 1.5l3 2.5l-3 2.5z" fill="#fff"/><path d="M3.5 1l3 2.5l-3 2.5z" fill="#6b6f7a"/></svg>
<svg style="position:absolute;left:1847px;top:182px" width="16" height="16" viewBox="0 0 16 16" ><rect x="0.7" y="1.7" width="14.6" height="12.6" stroke="#9a9a9a" fill="#fff" stroke-width="1.2" /><path d="M1 6h14 M1 10h14 M5.500 2v12 M10.500 2v12" stroke="#9a9a9a" fill="none" stroke-width="1" /></svg>
<svg style="position:absolute;left:1847px;top:203px" width="16" height="16" viewBox="0 0 16 16" ><path d="M3 1v14 M11 1v12 M3 4.500h8 M3 10.500h8" stroke="#e01030" fill="none" stroke-width="1" /><path d="M3 0l1.500 2h-3z M3 16l1.500-2h-3z M11 0l1.500 2h-3z" stroke="none" fill="#e01030" stroke-width="1" /><rect x="1" y="3.5" width="4" height="2" stroke="#000" fill="#ddd" stroke-width="1" /><rect x="9" y="3.5" width="4" height="2" stroke="#000" fill="#ddd" stroke-width="1" /><rect x="1" y="9.5" width="4" height="2" stroke="#000" fill="#ddd" stroke-width="1" /><g transform="translate(7 7)"><path d="M0 0l2.500 0.500L8 6l-2 2L0.500 2.500z" stroke="#000" fill="#1a1a8a" stroke-width="0.7" /><path d="M0 0l2.500 0.500l-2 2z" stroke="#000" fill="#fff" stroke-width="0.5" /><path d="M6 8l2-2l-0.700-0.700l-2 2z" stroke="none" fill="#c01010" stroke-width="1" /><path d="M2 3l4 4" stroke="#6a6ad0" fill="none" stroke-width="0.7" /></g></svg>
<svg style="position:absolute;left:1847px;top:224px" width="16" height="16" viewBox="0 0 16 16" ><rect x="1" y="1.5" width="13.5" height="11" stroke="#000" fill="#fff" stroke-width="1.3" /><path d="M3.500 2v10 M5.500 2v10 M7.500 2v10 M9.500 2v10 M11.500 2v10" stroke="#333" fill="none" stroke-width="0.8" /><g transform="translate(7 6.5)"><path d="M0 0l2.500 0.500L8 6l-2 2L0.500 2.500z" stroke="#000" fill="#1a1a8a" stroke-width="0.7" /><path d="M0 0l2.500 0.500l-2 2z" stroke="#000" fill="#fff" stroke-width="0.5" /><path d="M6 8l2-2l-0.700-0.700l-2 2z" stroke="none" fill="#c01010" stroke-width="1" /><path d="M2 3l4 4" stroke="#6a6ad0" fill="none" stroke-width="0.7" /></g></svg>
<svg style="position:absolute;left:1847px;top:245px" width="16" height="16" viewBox="0 0 16 16" ><rect x="2.5" y="1.5" width="3.5" height="12" stroke="#555" fill="#ccc" stroke-width="1" /><path d="M0.500 1.500h7.500 M0.500 13.500h7.500" stroke="#e01030" fill="none" stroke-width="1.2" /><g transform="translate(7 7)"><path d="M0 0l2.500 0.500L8 6l-2 2L0.500 2.500z" stroke="#000" fill="#1a1a8a" stroke-width="0.7" /><path d="M0 0l2.500 0.500l-2 2z" stroke="#000" fill="#fff" stroke-width="0.5" /><path d="M6 8l2-2l-0.700-0.700l-2 2z" stroke="none" fill="#c01010" stroke-width="1" /><path d="M2 3l4 4" stroke="#6a6ad0" fill="none" stroke-width="0.7" /></g></svg>
<svg style="position:absolute;left:1847px;top:266px" width="16" height="16" viewBox="0 0 16 16" ><path d="M1 1.500h13.500v7h-13.500z M1 3.500h3l2 2.500h4l2-2.500h2.500" stroke="#000" fill="#fff" stroke-width="1.2" /><g transform="translate(7 7.5)"><path d="M0 0l2.500 0.500L8 6l-2 2L0.500 2.500z" stroke="#000" fill="#1a1a8a" stroke-width="0.7" /><path d="M0 0l2.500 0.500l-2 2z" stroke="#000" fill="#fff" stroke-width="0.5" /><path d="M6 8l2-2l-0.700-0.700l-2 2z" stroke="none" fill="#c01010" stroke-width="1" /><path d="M2 3l4 4" stroke="#6a6ad0" fill="none" stroke-width="0.7" /></g></svg>
<svg style="position:absolute;left:1847px;top:287px" width="16" height="16" viewBox="0 0 16 16" ><path d="M1 2h8v2.500h-8z M1 4.500h8v2.500h-8z M1 7h5v2.500h-5z M9 5h4v3h-4" stroke="#000" fill="#fff" stroke-width="1" /><g transform="translate(7 7.5)"><path d="M0 0l2.500 0.500L8 6l-2 2L0.500 2.500z" stroke="#000" fill="#1a1a8a" stroke-width="0.7" /><path d="M0 0l2.500 0.500l-2 2z" stroke="#000" fill="#fff" stroke-width="0.5" /><path d="M6 8l2-2l-0.700-0.700l-2 2z" stroke="none" fill="#c01010" stroke-width="1" /><path d="M2 3l4 4" stroke="#6a6ad0" fill="none" stroke-width="0.7" /></g></svg>
<svg style="position:absolute;left:1847px;top:308px" width="16" height="16" viewBox="0 0 16 16" ><path d="M1 1.500h6v8h-6z M1 4h6 M1 6.500h6 M4 1.500v8 M7 5.500h4v4" stroke="#000" fill="#fff" stroke-width="1" /><g transform="translate(7 7.5)"><path d="M0 0l2.500 0.500L8 6l-2 2L0.500 2.500z" stroke="#000" fill="#1a1a8a" stroke-width="0.7" /><path d="M0 0l2.500 0.500l-2 2z" stroke="#000" fill="#fff" stroke-width="0.5" /><path d="M6 8l2-2l-0.700-0.700l-2 2z" stroke="none" fill="#c01010" stroke-width="1" /><path d="M2 3l4 4" stroke="#6a6ad0" fill="none" stroke-width="0.7" /></g></svg>
<svg style="position:absolute;left:1847px;top:329px" width="16" height="16" viewBox="0 0 16 16" ><rect x="0.7" y="1.7" width="14.6" height="12.6" stroke="#9a9a9a" fill="#fff" stroke-width="1.2" /><path d="M1 6h14 M1 10h14 M5.500 2v12 M10.500 2v12" stroke="#9a9a9a" fill="none" stroke-width="1" /><path d="M4 6.500h2v3l2 4.500h-6l2-4.500z" stroke="none" fill="#1a1aa0" stroke-width="1" /></svg>
<svg style="position:absolute;left:1847px;top:350px" width="16" height="16" viewBox="0 0 16 16" ><path d="M5 1.500h4v4l3.500 4v2.500h-11V9.500L5 5.500z" stroke="#000" fill="#fff" stroke-width="1.2" /><g transform="translate(7.5 7.5)"><path d="M0 0l2.500 0.500L8 6l-2 2L0.500 2.500z" stroke="#000" fill="#1a1a8a" stroke-width="0.7" /><path d="M0 0l2.500 0.500l-2 2z" stroke="#000" fill="#fff" stroke-width="0.5" /><path d="M6 8l2-2l-0.700-0.700l-2 2z" stroke="none" fill="#c01010" stroke-width="1" /><path d="M2 3l4 4" stroke="#6a6ad0" fill="none" stroke-width="0.7" /></g></svg>
<svg style="position:absolute;left:1847px;top:371px" width="16" height="16" viewBox="0 0 16 16" ><rect x="1" y="2.5" width="13" height="9" stroke="#000" fill="#fff" stroke-width="1.3" /><path d="M1 2.500l6.500 5.500l6.500-5.500 M3.500 9h8" stroke="#000" fill="none" stroke-width="1" /><g transform="translate(7 7.5)"><path d="M0 0l2.500 0.500L8 6l-2 2L0.500 2.500z" stroke="#000" fill="#1a1a8a" stroke-width="0.7" /><path d="M0 0l2.500 0.500l-2 2z" stroke="#000" fill="#fff" stroke-width="0.5" /><path d="M6 8l2-2l-0.700-0.700l-2 2z" stroke="none" fill="#c01010" stroke-width="1" /><path d="M2 3l4 4" stroke="#6a6ad0" fill="none" stroke-width="0.7" /></g></svg>
<svg style="position:absolute;left:1847px;top:392px" width="16" height="16" viewBox="0 0 16 16" ><path d="M1 3.500h13v2h-2.500l-2 3.500h-4l-2-3.500h-2.500z" stroke="#000" fill="#fff" stroke-width="1.2" /><path d="M3 2h9" stroke="#1a1ac0" fill="none" stroke-width="1.5" /><g transform="translate(7 8)"><path d="M0 0l2.500 0.500L8 6l-2 2L0.500 2.500z" stroke="#000" fill="#1a1a8a" stroke-width="0.7" /><path d="M0 0l2.500 0.500l-2 2z" stroke="#000" fill="#fff" stroke-width="0.5" /><path d="M6 8l2-2l-0.700-0.700l-2 2z" stroke="none" fill="#c01010" stroke-width="1" /><path d="M2 3l4 4" stroke="#6a6ad0" fill="none" stroke-width="0.7" /></g></svg>
<svg style="position:absolute;left:1847px;top:414px" width="16" height="16" viewBox="0 0 16 16" ><path d="M8 1v14 M1 8h14" stroke="#000" fill="none" stroke-width="1.8" /><circle cx="8" cy="8" r="2.2" stroke="#000" fill="#fff" stroke-width="1.2" /></svg>
<svg style="position:absolute;left:1847px;top:435px" width="16" height="16" viewBox="0 0 16 16" ><path d="M5.500 1h3v7l2 4.500h-7l2-4.500z" stroke="#1a3aa0" fill="#fff" stroke-width="1.2" /><path d="M1.500 13.500h12" stroke="#1a3aa0" fill="none" stroke-width="1" /><g transform="translate(7.5 7)"><path d="M0 0l2.500 0.500L8 6l-2 2L0.500 2.500z" stroke="#000" fill="#1a1a8a" stroke-width="0.7" /><path d="M0 0l2.500 0.500l-2 2z" stroke="#000" fill="#fff" stroke-width="0.5" /><path d="M6 8l2-2l-0.700-0.700l-2 2z" stroke="none" fill="#c01010" stroke-width="1" /><path d="M2 3l4 4" stroke="#6a6ad0" fill="none" stroke-width="0.7" /></g></svg>
<svg style="position:absolute;left:1847px;top:456px" width="16" height="16" viewBox="0 0 16 16" ><path d="M6 1h3.500v8h5v4h-13v-4h4.500z" stroke="#1a3aa0" fill="#fff" stroke-width="1.2" /><g transform="translate(7.5 7.5)"><path d="M0 0l2.500 0.500L8 6l-2 2L0.500 2.500z" stroke="#000" fill="#1a1a8a" stroke-width="0.7" /><path d="M0 0l2.500 0.500l-2 2z" stroke="#000" fill="#fff" stroke-width="0.5" /><path d="M6 8l2-2l-0.700-0.700l-2 2z" stroke="none" fill="#c01010" stroke-width="1" /><path d="M2 3l4 4" stroke="#6a6ad0" fill="none" stroke-width="0.7" /></g></svg>
<svg style="position:absolute;left:1847px;top:477px" width="16" height="16" viewBox="0 0 16 16" ><path d="M1 13L13 1 M1 8h7l5-5 M3 13h7" stroke="#000" fill="none" stroke-width="1.2" /><path d="M5 5l3 3" stroke="#000" fill="none" stroke-width="1" /><g transform="translate(7.5 7.5)"><path d="M0 0l2.500 0.500L8 6l-2 2L0.500 2.500z" stroke="#000" fill="#1a1a8a" stroke-width="0.7" /><path d="M0 0l2.500 0.500l-2 2z" stroke="#000" fill="#fff" stroke-width="0.5" /><path d="M6 8l2-2l-0.700-0.700l-2 2z" stroke="none" fill="#c01010" stroke-width="1" /><path d="M2 3l4 4" stroke="#6a6ad0" fill="none" stroke-width="0.7" /></g></svg>
<svg style="position:absolute;left:1847px;top:498px" width="16" height="16" viewBox="0 0 16 16" ><path d="M1 2h14 M1 4h14" stroke="#000" fill="none" stroke-width="1.2" /><path d="M2.500 4v10 M4.500 4v10 M7 4v8 M9 4v6 M12 4v5 M14 4v5" stroke="#000" fill="none" stroke-width="1" /><g transform="translate(6.5 7.5)"><path d="M0 0l2.500 0.500L8 6l-2 2L0.500 2.500z" stroke="#000" fill="#1a1a8a" stroke-width="0.7" /><path d="M0 0l2.500 0.500l-2 2z" stroke="#000" fill="#fff" stroke-width="0.5" /><path d="M6 8l2-2l-0.700-0.700l-2 2z" stroke="none" fill="#c01010" stroke-width="1" /><path d="M2 3l4 4" stroke="#6a6ad0" fill="none" stroke-width="0.7" /></g></svg>
<svg style="position:absolute;left:1847px;top:519px" width="16" height="16" viewBox="0 0 16 16" ><path d="M0.500 9c1-5 4-7 7.500-7s6.500 2 7.500 7z" stroke="#000" fill="#fff" stroke-width="1.2" /><path d="M3 9l2.500-5.500 M6 9l1-6.500 M9.500 9l-1-6.500 M12.500 9l-2.500-5.500" stroke="#000" fill="none" stroke-width="0.9" /><g transform="translate(7 8)"><path d="M0 0l2.500 0.500L8 6l-2 2L0.500 2.500z" stroke="#000" fill="#1a1a8a" stroke-width="0.7" /><path d="M0 0l2.500 0.500l-2 2z" stroke="#000" fill="#fff" stroke-width="0.5" /><path d="M6 8l2-2l-0.700-0.700l-2 2z" stroke="none" fill="#c01010" stroke-width="1" /><path d="M2 3l4 4" stroke="#6a6ad0" fill="none" stroke-width="0.7" /></g></svg>
<svg style="position:absolute;left:1847px;top:540px" width="16" height="16" viewBox="0 0 16 16" ><path d="M1.500 15V2h13v13 M1.500 2l13 13 M14.500 2l-13 13 M3 15c0-6 10-6 10 0" stroke="#888" fill="none" stroke-width="1.1" /><path d="M7 6l2.500 1L15 12.500l-2 2L7.500 9z" stroke="#a86a10" fill="#f0a020" stroke-width="0.6" /><path d="M7 6l2.500 1l-1.500 1.500z" stroke="none" fill="#f1c9a5" stroke-width="1" /></svg>
<svg style="position:absolute;left:1847px;top:561px" width="16" height="16" viewBox="0 0 16 16" ><rect x="1" y="1" width="2.5" height="14" stroke="#2a5a2a" fill="#a8d0a0" stroke-width="1" /><rect x="5" y="1" width="2.5" height="14" stroke="#2a5a2a" fill="#a8d0a0" stroke-width="1" /><path d="M8.500 6h4.500l2.500 2.500v7h-7z" stroke="#000" fill="#a8d0f0" stroke-width="1" /></svg>
<svg style="position:absolute;left:1847px;top:582px" width="16" height="16" viewBox="0 0 16 16" ><path d="M1 9.500h8 M7.500 12.500h8" stroke="#9aa8b8" fill="none" stroke-width="1" /><path d="M2 8.500l2.500-2.500l2.500 2.500z M9.500 11.500l2.500-2.500l2.500 2.500z" stroke="#9aa8b8" fill="none" stroke-width="0.9" /></svg>
<svg style="position:absolute;left:1847px;top:603px" width="16" height="16" viewBox="0 0 16 16" ><path d="M6.500 1.500h8L9 15H1z" stroke="#000" fill="none" stroke-width="1.3" /><text x="3.5" y="13" font-size="7.5" fill="#1a1a9a" font-family="Liberation Sans, sans-serif" font-weight="bold" textLength="12.500">123</text></svg>
<svg style="position:absolute;left:1873px;top:182px" width="16" height="16" viewBox="0 0 16 16" ><path d="M10 1.500h5.500v5.500 M0.500 9v5.500h5.500" stroke="#00d8f0" fill="none" stroke-width="1" /><defs><pattern id="ck2" width="2" height="2" patternUnits="userSpaceOnUse"><rect width="2" height="2" fill="#fff"/><rect width="1" height="1" fill="#000"/><rect x="1" y="1" width="1" height="1" fill="#000"/></pattern></defs><path d="M2.500 2.500h5v5h6v6h-11z" stroke="#000" fill="url(#ck2)" stroke-width="1.3" /></svg>
<svg style="position:absolute;left:1873px;top:204px" width="16" height="16" viewBox="0 0 16 16" ><path d="M10 1.500h5.500v5.500 M0.500 9v5.500h5.500" stroke="#00d8f0" fill="none" stroke-width="1" /><path d="M1 4h13 M1 7h13 M1 10h13 M1 13h8 M3 1v14 M6 1v14 M9 1v6 M12 1v6" stroke="#2f4b58" fill="none" stroke-width="1.1" /><rect x="8.5" y="7.5" width="6" height="7.5" stroke="#1f3b48" fill="#2f4b58" stroke-width="1" /><path d="M10 9h3 M10 11.500h0.800 M12 11.500h0.800 M10 13.500h0.800 M12 13.500h0.800" stroke="#cfe" fill="none" stroke-width="1" /></svg>
<svg style="position:absolute;left:1873px;top:225px" width="16" height="16" viewBox="0 0 16 16" ><path d="M10 1.500h5.500v5.500 M0.500 9v5.500h5.500" stroke="#00d8f0" fill="none" stroke-width="1" /><path d="M2.500 2.500h6v5.500h5.500v6h-11.500z" stroke="#000" fill="#fff" stroke-width="1.2" /><path d="M2.500 5h6 M2.500 7.500h6 M2.500 10h11 M2.500 12.500h11" stroke="#000" fill="none" stroke-width="1.1" /></svg>
<svg style="position:absolute;left:1873px;top:246px" width="16" height="16" viewBox="0 0 16 16" ><path d="M10 1.500h5.500v5.500 M0.500 9v5.500h5.500" stroke="#00d8f0" fill="none" stroke-width="1" /><path d="M2.500 2.500h6v5.500h5.500v6h-11.500z" stroke="#000" fill="#fff" stroke-width="1.2" /><path d="M2.500 5.500h6 M2.500 8h11.500 M2.500 11h11.500 M5.500 2.500v11.500 M8.500 8v6 M11.500 8v6" stroke="#000" fill="none" stroke-width="1.1" /></svg>
<div style="position:absolute;left:1874px;top:267px;width:14px;height:1px;background:#9a9ea8;box-shadow:0 1px 0 #fff"></div>
<svg style="position:absolute;left:1873px;top:273px" width="16" height="16" viewBox="0 0 16 16" ><path d="M10 1.500h5.500v5.500 M0.500 9v5.500h5.500" stroke="#00d8f0" fill="none" stroke-width="1" /><path d="M1 8.500h14 M1 10.500h14" stroke="#000" fill="none" stroke-width="1.3" /><path d="M3 11l-2 3h4z M13 11l-2 3h4z" stroke="#555" fill="#aaa" stroke-width="0.8" /><path d="M8 2v6 M6.500 6l1.500 2l1.500-2" stroke="#000" fill="none" stroke-width="1" /><text x="9.5" y="6" font-size="6.5" fill="#333" font-family="Liberation Sans, sans-serif" >F</text></svg>
<svg style="position:absolute;left:1873px;top:294px" width="16" height="16" viewBox="0 0 16 16" ><path d="M10 1.500h5.500v5.500 M0.500 9v5.500h5.500" stroke="#00d8f0" fill="none" stroke-width="1" /><path d="M3 2h10v2h-2v8h2v2.500h-10V12h2V4h-2z" stroke="#000" fill="#fff" stroke-width="1.2" /><path d="M6.500 4v8 M8 4v8 M9.500 4v8" stroke="#000" fill="none" stroke-width="0.8" /></svg>
<svg style="position:absolute;left:1873px;top:316px" width="16" height="16" viewBox="0 0 16 16" ><rect x="1" y="0.5" width="14" height="15" stroke="none" fill="#e0e0e0" stroke-width="1" /><path d="M11.500 0.500l3.500 3.500h-3.500z" stroke="none" fill="#999" stroke-width="1" /><path d="M2 4.500h12v3l-3.500 3v3h-5v-3L2 7.500z" stroke="#3f5f78" fill="#5b7f9c" stroke-width="0.8" /><path d="M3 5.500h10" stroke="#a8c8e0" fill="none" stroke-width="1" /></svg>
<svg style="position:absolute;left:1873px;top:337px" width="16" height="16" viewBox="0 0 16 16" ><path d="M10 1.500h5.500v5.500 M0.500 9v5.500h5.500" stroke="#00d8f0" fill="none" stroke-width="1" /><path d="M2.500 13V7.500L12.500 3l1.500 0.500V9L4 13.500z" stroke="#000" fill="#fff" stroke-width="1.6" /><path d="M4 12.500V8l9-4" stroke="#000" fill="none" stroke-width="0.9" /></svg>
<svg style="position:absolute;left:1873px;top:358px" width="16" height="16" viewBox="0 0 16 16" ><path d="M10 1.500h5.500v5.500 M0.500 9v5.500h5.500" stroke="#00d8f0" fill="none" stroke-width="1" /><path d="M2 14.500V3h12v11.500h-3.500V6.500h-5v8z" stroke="#2f4b60" fill="#6f93b0" stroke-width="1.2" /></svg>
<div style="position:absolute;left:1874px;top:381px;width:14px;height:1px;background:#9a9ea8;box-shadow:0 1px 0 #fff"></div>
<svg style="position:absolute;left:1873px;top:386px" width="16" height="16" viewBox="0 0 16 16" ><path d="M10 1.500h5.500v5.500 M0.500 9v5.500h5.500" stroke="#00d8f0" fill="none" stroke-width="1" /><path d="M5.500 2.500h5v4l3 6v2h-11v-2l3-6z" stroke="#000" fill="#fff" stroke-width="1.2" /></svg>
<svg style="position:absolute;left:1873px;top:407px" width="16" height="16" viewBox="0 0 16 16" ><path d="M10 1.500h5.500v5.500 M0.500 9v5.500h5.500" stroke="#00d8f0" fill="none" stroke-width="1" /><rect x="2" y="3" width="12" height="10" stroke="#000" fill="#fff" stroke-width="1.3" /><rect x="4.5" y="5.5" width="7" height="5" stroke="#000" fill="#ddd" stroke-width="1.1" /><path d="M5 8h6" stroke="#000" fill="none" stroke-width="0.8" /></svg>
<svg style="position:absolute;left:1873px;top:428px" width="16" height="16" viewBox="0 0 16 16" ><path d="M10 1.500h5.500v5.500 M0.500 9v5.500h5.500" stroke="#00d8f0" fill="none" stroke-width="1" /><path d="M1 5h14v2h-2l-1.500 3h3v2h-6v-2h1.500l-1-3h-2l-1 3h1.500v2h-6v-2h3L4 7h-3z" stroke="#000" fill="#fff" stroke-width="1" /></svg>
<svg style="position:absolute;left:1873px;top:449px" width="16" height="16" viewBox="0 0 16 16" ><path d="M10 1.500h5.500v5.500 M0.500 9v5.500h5.500" stroke="#00d8f0" fill="none" stroke-width="1" /><path d="M7 2.500h6.500v6h-6.500z" stroke="#000" fill="#fff" stroke-width="1.2" /><path d="M7 6h-3v3.500h-2v4h8v-4.500" stroke="#9aa" fill="none" stroke-width="1.1" /></svg>
<div style="position:absolute;left:1874px;top:473px;width:14px;height:1px;background:#9a9ea8;box-shadow:0 1px 0 #fff"></div>
<svg style="position:absolute;left:1873px;top:480px" width="16" height="16" viewBox="0 0 16 16" ><path d="M10 1.500h5.500v5.500 M0.500 9v5.500h5.500" stroke="#00d8f0" fill="none" stroke-width="1" /><path d="M6.500 1.500h3v6.500l2 4.500h-7l2-4.500z" stroke="#000" fill="#fff" stroke-width="1.2" /><path d="M3 14.500h10" stroke="#000" fill="none" stroke-width="1.2" /></svg>
<svg style="position:absolute;left:1873px;top:500px" width="16" height="16" viewBox="0 0 16 16" ><path d="M10 1.500h5.500v5.500 M0.500 9v5.500h5.500" stroke="#00d8f0" fill="none" stroke-width="1" /><path d="M9.500 2v8.500h-7.500v3.500h11.500V2z" stroke="#000" fill="#111" stroke-width="1" /></svg>
<svg style="position:absolute;left:1873px;top:521px" width="16" height="16" viewBox="0 0 16 16" ><path d="M10 1.500h5.500v5.500 M0.500 9v5.500h5.500" stroke="#00d8f0" fill="none" stroke-width="1" /><defs><pattern id="ck2" width="2" height="2" patternUnits="userSpaceOnUse"><rect width="2" height="2" fill="#fff"/><rect width="1" height="1" fill="#000"/><rect x="1" y="1" width="1" height="1" fill="#000"/></pattern></defs><path d="M2 10.500l5-2.500l4-5.500h3v3.500l-4 5.500l-5 2.500h-3z" stroke="#000" fill="url(#ck2)" stroke-width="1.2" /></svg>
<svg style="position:absolute;left:1873px;top:542px" width="16" height="16" viewBox="0 0 16 16" ><path d="M10 1.500h5.500v5.500 M0.500 9v5.500h5.500" stroke="#00d8f0" fill="none" stroke-width="1" /><path d="M1 2.500h14v2h-14z" stroke="#000" fill="#fff" stroke-width="1.2" /><path d="M3 4.500v10 M5 4.500v10 M7.500 4.500v10 M9.500 4.500v9 M12 4.500v8 M14 4.500v7" stroke="#000" fill="none" stroke-width="1.1" /></svg>
<svg style="position:absolute;left:1873px;top:562px" width="16" height="16" viewBox="0 0 16 16" ><path d="M10 1.500h5.500v5.500 M0.500 9v5.500h5.500" stroke="#00d8f0" fill="none" stroke-width="1" /><path d="M0.500 11c1-5 4-7 7.500-7s6.500 2 7.500 7z" stroke="#000" fill="#fff" stroke-width="1.2" /><path d="M3 11l2.500-5.500 M6 11l1-6.500 M9.500 11l-1-6.500 M12.500 11l-2.500-5.500" stroke="#000" fill="none" stroke-width="0.9" /><path d="M0.500 12.500h15" stroke="#000" fill="none" stroke-width="1.2" /></svg>
<div style="position:absolute;left:1874px;top:586px;width:14px;height:1px;background:#9a9ea8;box-shadow:0 1px 0 #fff"></div>
<svg style="position:absolute;left:1873px;top:592px" width="16" height="16" viewBox="0 0 16 16" ><path d="M13.500 1.500h2v4.500h-3c-1 2-5 2-6 0h-4.500v2" stroke="#1818c0" fill="none" stroke-width="1.3" /><path d="M2 8v6.500h13.500v-8.500" stroke="#e01010" fill="none" stroke-width="1.3" /></svg>
<svg style="position:absolute;left:1873px;top:613px" width="16" height="16" viewBox="0 0 16 16" ><rect x="0.5" y="0.5" width="15" height="15" stroke="#1f3b48" fill="#2f4b58" stroke-width="1" /><path d="M2 2h3v3h-3z M8 2h3v3h-3z M5 5h3v3h-3z M2 8h3v3h-3z M5 11h3v3h-3z M11 5h3v3h-3z" stroke="none" fill="#b8d0dc" stroke-width="1" /><circle cx="11" cy="11" r="3" stroke="#b8d0dc" fill="#2f4b58" stroke-width="1.2" /><circle cx="11" cy="11" r="1" stroke="#b8d0dc" fill="none" stroke-width="0.8" /></svg>
<svg style="position:absolute;left:1873px;top:658px" width="16" height="16" viewBox="0 0 16 16" ><path d="M10 1.500h5.500v5.500 M0.500 9v5.500h5.500" stroke="#8c8f97" fill="none" stroke-width="0.8" /><path d="M2 14V7l3-5v12 M6 14V5l3-3.500V14 M10 14V8l2.500-3V14" stroke="#8c8f97" fill="#d4d6db" stroke-width="1" /></svg>
<svg style="position:absolute;left:1873px;top:679px" width="16" height="16" viewBox="0 0 16 16" ><path d="M10 1.500h5.500v5.500 M0.500 9v5.500h5.500" stroke="#8c8f97" fill="none" stroke-width="0.8" /><path d="M1 5h10l3-2.500 M1 8h9l3-2 M1 11h8.500l4-3 M1 13.500h8.500l4.500-4" stroke="#8c8f97" fill="none" stroke-width="1.1" /></svg>
<svg style="position:absolute;left:1873px;top:700px" width="16" height="16" viewBox="0 0 16 16" ><rect x="1" y="1.5" width="14" height="13" stroke="#8c8f97" fill="#fff" stroke-width="1.2" /><rect x="3" y="3.5" width="2.5" height="2.5" stroke="none" fill="#8c8f97" stroke-width="1" /><rect x="3" y="7" width="2.5" height="2.5" stroke="none" fill="#8c8f97" stroke-width="1" /><rect x="3" y="10.5" width="2.5" height="2.5" stroke="none" fill="#8c8f97" stroke-width="1" /><rect x="6.5" y="3.5" width="2.5" height="2.5" stroke="none" fill="#8c8f97" stroke-width="1" /><rect x="6.5" y="7" width="2.5" height="2.5" stroke="none" fill="#8c8f97" stroke-width="1" /><rect x="6.5" y="10.5" width="2.5" height="2.5" stroke="none" fill="#8c8f97" stroke-width="1" /><rect x="10" y="3.5" width="2.5" height="2.5" stroke="none" fill="#8c8f97" stroke-width="1" /><rect x="10" y="7" width="2.5" height="2.5" stroke="none" fill="#8c8f97" stroke-width="1" /><rect x="10" y="10.5" width="2.5" height="2.5" stroke="none" fill="#8c8f97" stroke-width="1" /></svg>
<svg style="position:absolute;left:1873px;top:721px" width="16" height="16" viewBox="0 0 16 16" ><path d="M10 1.500h5.500v5.500 M0.500 9v5.500h5.500" stroke="#8c8f97" fill="none" stroke-width="0.8" /><rect x="1.5" y="4" width="11" height="9" stroke="#8c8f97" fill="#fff" stroke-width="1.2" /><path d="M7 6l2.500 2.500l-2.500 2.500l-2.500-2.500z" stroke="#8c8f97" fill="none" stroke-width="1" /></svg>
<svg style="position:absolute;left:1873px;top:742px" width="16" height="16" viewBox="0 0 16 16" ><path d="M10 1.500h5.500v5.500 M0.500 9v5.500h5.500" stroke="#8c8f97" fill="none" stroke-width="0.8" /><path d="M6 1.500h3v3h-3z" stroke="#8c8f97" fill="none" stroke-width="1" /><rect x="1.5" y="5" width="12" height="8.5" stroke="#8c8f97" fill="#fff" stroke-width="1.2" /><circle cx="7.5" cy="9.5" r="2" stroke="#8c8f97" fill="none" stroke-width="1" /></svg>
<svg style="position:absolute;left:1873px;top:763px" width="16" height="16" viewBox="0 0 16 16" ><path d="M10 1.500h5.500v5.500 M0.500 9v5.500h5.500" stroke="#8c8f97" fill="none" stroke-width="0.8" /><path d="M1 3h2 M4 3h2 M7 3h2 M10 3h3 M5 3v3 M8 3v3 M11 3l-2 3" stroke="#8c8f97" fill="none" stroke-width="1" /><path d="M1 11l5-4h8l-5 4z M1 11v3h8v-3 M9 14l5-4v-3" stroke="#8c8f97" fill="#d4d6db" stroke-width="0.9" /></svg>
<svg style="position:absolute;left:1873px;top:784px" width="16" height="16" viewBox="0 0 16 16" ><path d="M10 1.500h5.500v5.500 M0.500 9v5.500h5.500" stroke="#8c8f97" fill="none" stroke-width="0.8" /><path d="M2 2v12 M4 2v12" stroke="#8c8f97" fill="none" stroke-width="1.2" /><path d="M6 3h7v2.500h-2v4h2v2.500h-7v-2.500h2v-4h-2z" stroke="#8c8f97" fill="#d4d6db" stroke-width="1" /><path d="M5 14l9-3" stroke="#8c8f97" fill="none" stroke-width="1.2" /></svg>
<svg style="position:absolute;left:1873px;top:805px" width="16" height="16" viewBox="0 0 16 16" ><path d="M3 1v14 M6.500 1v14 M10 1v14 M13.500 1v14" stroke="#8c8f97" fill="none" stroke-width="1.6" /><path d="M1 4h14 M1 8h14 M1 12h14" stroke="#8c8f97" fill="none" stroke-width="1.1" /></svg>
<svg style="position:absolute;left:1873px;top:826px" width="16" height="16" viewBox="0 0 16 16" ><rect x="1" y="1.5" width="14" height="13" stroke="#8c8f97" fill="#fff" stroke-width="1.2" /><path d="M1 1.500l14 13 M15 1.500l-14 13" stroke="#8c8f97" fill="none" stroke-width="1" /><rect x="6" y="6" width="4" height="4" stroke="none" fill="#777" stroke-width="1" /></svg>
<svg style="position:absolute;left:1873px;top:847px" width="16" height="16" viewBox="0 0 16 16" ><path d="M10 1.500h5.500v5.500 M0.500 9v5.500h5.500" stroke="#8c8f97" fill="none" stroke-width="0.8" /><path d="M1 13c1-7 3-9 4-9s2.500 4 3.500 9c1-7 2.500-9 3.500-9s2.500 3 3.500 9 M1 13.500h14" stroke="#8c8f97" fill="none" stroke-width="1.1" /></svg>
<svg style="position:absolute;left:1873px;top:868px" width="16" height="16" viewBox="0 0 16 16" ><path d="M1 1.500l14 13 M15 1.500l-14 13 M8 1v14 M1 8h14" stroke="#8c8f97" fill="none" stroke-width="1.1" /><rect x="2" y="2.5" width="12" height="11" stroke="#8c8f97" fill="none" stroke-width="1" /><path d="M8 3l5 5l-5 5l-5-5z" stroke="#8c8f97" fill="none" stroke-width="0.8" /></svg>
<svg style="position:absolute;left:1873px;top:889px" width="16" height="16" viewBox="0 0 16 16" ><path d="M10 1.500h5.500v5.500 M0.500 9v5.500h5.500" stroke="#f0d800" fill="none" stroke-width="1" /><path d="M3.500 1v14" stroke="#000" fill="none" stroke-width="1.2" /><rect x="6.5" y="4.5" width="6" height="7" stroke="#e8d020" fill="#fff" stroke-width="1.2" /><path d="M5 8h3 M8 6.500v0.010 M8 10v0.010" stroke="#000" fill="none" stroke-width="1.2" /></svg>
<svg style="position:absolute;left:1873px;top:910px" width="16" height="16" viewBox="0 0 16 16" ><path d="M10 1.500h5.500v5.500 M0.500 9v5.500h5.500" stroke="#f0d800" fill="none" stroke-width="1" /><defs><pattern id="ht" width="2" height="2" patternUnits="userSpaceOnUse" patternTransform="rotate(45)"><rect width="2" height="2" fill="#fff"/><rect width="1" height="2" fill="#444"/></pattern></defs><rect x="2" y="2" width="8" height="8" stroke="#000" fill="url(#ht)" stroke-width="1.1" /><rect x="6.5" y="6.5" width="7.5" height="7.5" stroke="#000" fill="url(#ht)" stroke-width="1.1" /><rect x="6.5" y="6.5" width="3.5" height="3.5" stroke="#000" fill="#fff" stroke-width="1" /></svg>
<svg style="position:absolute;left:1873px;top:930px" width="16" height="16" viewBox="0 0 16 16" ><path d="M10 1.500h3 M0.500 9v5.500h5.500" stroke="#f0d800" fill="none" stroke-width="1" /><rect x="2" y="3.5" width="4.5" height="6" stroke="#e8d020" fill="#fff" stroke-width="1.2" /><path d="M4 5.500v2.500" stroke="#000" fill="none" stroke-width="1.2" /><path d="M6.500 6.500h6" stroke="#000" fill="none" stroke-width="1.2" /><rect x="11" y="6" width="3.5" height="8.5" stroke="none" fill="#000" stroke-width="1" /></svg>
<svg style="position:absolute;left:1899px;top:182px" width="16" height="16" viewBox="0 0 16 16" ><path d="M1.5 1h3.500l1.500 1.500v4.500h-5z" stroke="#000" fill="#fff" stroke-width="1.1" /><path d="M5.500 4h4l2.500 2.500v4h-6.500z" stroke="#e01010" fill="#fff" stroke-width="1.2" /><path d="M7 8.5h4l1.500 1.500h3v5.500h-8.500z" stroke="#000" fill="#fff" stroke-width="1.2" /><path d="M9 13.0h4.500" stroke="#000" fill="none" stroke-width="1.1" /></svg>
<div style="position:absolute;left:1900px;top:205px;width:14px;height:1px;background:#9a9ea8;box-shadow:0 1px 0 #fff"></div>
<svg style="position:absolute;left:1899px;top:212px" width="16" height="16" viewBox="0 0 16 16" ><rect x="1" y="1" width="10.5" height="13" stroke="#000" fill="#fff" stroke-width="1.2" /><path d="M3 4l1 1.500l2.500-3.500" stroke="#1a1ac0" fill="none" stroke-width="1" /><path d="M7 4h3 M2.500 7.500h7.500 M2.500 10h7.500 M2.500 12.500h5" stroke="#1a1ac0" fill="none" stroke-width="1.1" /><path d="M7 8.5h4l1.500 1.500h3v5.500h-8.500z" stroke="#000" fill="#fff" stroke-width="1.2" /><path d="M9 13.0h4.500" stroke="#000" fill="none" stroke-width="1.1" /></svg>
<svg style="position:absolute;left:1899px;top:233px" width="16" height="16" viewBox="0 0 16 16" ><rect x="1" y="1" width="10.5" height="13" stroke="#000" fill="#fff" stroke-width="1.2" /><path d="M3 4l1 1.500l2.500-3.500" stroke="#1a1ac0" fill="none" stroke-width="1" /><path d="M7 4h3 M2.500 7.500h7.500 M2.500 10h7.500 M2.500 12.500h5" stroke="#1a1ac0" fill="none" stroke-width="1.1" /><path d="M7 8.5h4l1.500 1.500h3v5.500h-8.500z" stroke="#000" fill="#fff" stroke-width="1.2" /><path d="M9 13.0h4.500" stroke="#000" fill="none" stroke-width="1.1" /></svg>
<svg style="position:absolute;left:1899px;top:254px" width="16" height="16" viewBox="0 0 16 16" ><rect x="1" y="1" width="10.5" height="13" stroke="#000" fill="#fff" stroke-width="1.2" /><path d="M3 4l1 1.500l2.500-3.500" stroke="#1a1ac0" fill="none" stroke-width="1" /><path d="M7 4h3 M2.500 7.500h7.500 M2.500 10h7.500 M2.500 12.500h5" stroke="#1a1ac0" fill="none" stroke-width="1.1" /><path d="M7 8.5h4l1.500 1.500h3v5.500h-8.500z" stroke="#000" fill="#fff" stroke-width="1.2" /><path d="M9 13.0h4.500" stroke="#000" fill="none" stroke-width="1.1" /></svg>
<svg style="position:absolute;left:1899px;top:275px" width="16" height="16" viewBox="0 0 16 16" ><path d="M1.500 1.500h7v4h4v5h-11z" stroke="#1a1ac0" fill="#fff" stroke-width="1.4" /><path d="M3 11v3.500 M1.500 13l1.500 1.500l1.500-1.500" stroke="#000" fill="none" stroke-width="1" /><path d="M7 8.5h4l1.500 1.500h3v5.500h-8.500z" stroke="#000" fill="#fff" stroke-width="1.2" /><path d="M9 13.0h4.500" stroke="#000" fill="none" stroke-width="1.1" /></svg>
<svg style="position:absolute;left:1899px;top:296px" width="16" height="16" viewBox="0 0 16 16" ><defs><linearGradient id="rb" x1="0" x2="0" y1="0" y2="1"><stop offset="0" stop-color="#e01010"/><stop offset=".35" stop-color="#f0e010"/><stop offset=".65" stop-color="#20c040"/><stop offset="1" stop-color="#2020d0"/></linearGradient></defs><path d="M6 1h4v4.500h4.500v3h-13v-3h4.500z" stroke="#000" fill="#fff" stroke-width="1.1" /><rect x="1.5" y="9" width="13" height="6" stroke="none" fill="url(#rb)" stroke-width="1" /><path d="M3 8.500v1 M13 8.500v1" stroke="#000" fill="none" stroke-width="1.5" /></svg>
<div style="position:absolute;left:1900px;top:317px;width:14px;height:1px;background:#9a9ea8;box-shadow:0 1px 0 #fff"></div>
<svg style="position:absolute;left:1899px;top:324px" width="16" height="16" viewBox="0 0 16 16" ><path d="M1 7.500h9 M1 9.500h7" stroke="#000" fill="none" stroke-width="1.2" /><path d="M6 1.500v5 M4.500 5l1.500 2l1.500-2" stroke="#000" fill="none" stroke-width="1" /><text x="8" y="5.5" font-size="6" fill="#444" font-family="Liberation Sans, sans-serif" >F</text><path d="M2 10l-1.500 2.500h3z" stroke="none" fill="#888" stroke-width="1" /><path d="M7 8.5h4l1.500 1.500h3v5.500h-8.500z" stroke="#000" fill="#fff" stroke-width="1.2" /><path d="M9 13.0h4.500" stroke="#000" fill="none" stroke-width="1.1" /></svg>
<svg style="position:absolute;left:1899px;top:345px" width="16" height="16" viewBox="0 0 16 16" ><path d="M1 2h9v6.500h-9z" stroke="#000" fill="#fff" stroke-width="1" /><path d="M1 4h9 M1 6h9" stroke="#000" fill="none" stroke-width="1" /><path d="M3 9.500v4 M1.500 12l1.500 1.500l1.500-1.500" stroke="#000" fill="none" stroke-width="1" /><path d="M7 8.5h4l1.500 1.500h3v5.500h-8.500z" stroke="#000" fill="#fff" stroke-width="1.2" /><path d="M9 13.0h4.500" stroke="#000" fill="none" stroke-width="1.1" /></svg>
<svg style="position:absolute;left:1899px;top:366px" width="16" height="16" viewBox="0 0 16 16" ><path d="M1 1.500h9v7h-9z M1 4h9 M1 6.500h9 M4 1.500v7 M7 1.500v7" stroke="#000" fill="#fff" stroke-width="1" /><path d="M3 9.500v4 M1.500 12l1.500 1.500l1.500-1.500" stroke="#000" fill="none" stroke-width="1" /><path d="M7 8.5h4l1.500 1.500h3v5.500h-8.500z" stroke="#000" fill="#fff" stroke-width="1.2" /><path d="M9 13.0h4.500" stroke="#000" fill="none" stroke-width="1.1" /></svg>
<svg style="position:absolute;left:1899px;top:386px" width="16" height="16" viewBox="0 0 16 16" ><path d="M2 1h10v2h-1.500v9h-7v-9h-1.500z" stroke="#000" fill="#fff" stroke-width="1.1" /><path d="M5 3v9 M6.500 3v9 M8 3v9" stroke="#000" fill="none" stroke-width="0.8" /><path d="M7 8.5h4l1.500 1.500h3v5.500h-8.500z" stroke="#000" fill="#fff" stroke-width="1.2" /><path d="M9 13.0h4.500" stroke="#000" fill="none" stroke-width="1.1" /></svg>
<svg style="position:absolute;left:1899px;top:408px" width="16" height="16" viewBox="0 0 16 16" ><path d="M1 11V6l6-4.500V8z M3 10.500v-5 M5 9.500v-6" stroke="#000" fill="#bbb" stroke-width="0.9" /><path d="M7 1.500h3v6" stroke="#777" fill="none" stroke-width="1" /><path d="M7 8.5h4l1.500 1.500h3v5.500h-8.500z" stroke="#000" fill="#fff" stroke-width="1.2" /><path d="M9 13.0h4.500" stroke="#000" fill="none" stroke-width="1.1" /></svg>
<svg style="position:absolute;left:1899px;top:429px" width="16" height="16" viewBox="0 0 16 16" ><path d="M2 4c2-3 8-3 10 0v7c-2 3-8 3-10 0z" stroke="#000" fill="#aaa" stroke-width="1" /><path d="M2 6.500c2 2.500 8 2.500 10 0 M2 9c2 2.500 8 2.500 10 0" stroke="#333" fill="none" stroke-width="0.9" /><path d="M7 8.5h4l1.500 1.500h3v5.500h-8.500z" stroke="#000" fill="#fff" stroke-width="1.2" /><path d="M9 13.0h4.500" stroke="#000" fill="none" stroke-width="1.1" /></svg>
<svg style="position:absolute;left:1899px;top:450px" width="16" height="16" viewBox="0 0 16 16" ><path d="M4 1h3v4l2.500 4h-8l2.500-4z" stroke="#888" fill="#fff" stroke-width="1" /><text x="9.5" y="5.5" font-size="6" fill="#444" font-family="Liberation Sans, sans-serif" >F</text><path d="M0.500 10.500h9 M0.500 12h7" stroke="#000" fill="none" stroke-width="1.1" /><path d="M7 8.5h4l1.500 1.500h3v5.500h-8.500z" stroke="#000" fill="#fff" stroke-width="1.2" /><path d="M9 13.0h4.500" stroke="#000" fill="none" stroke-width="1.1" /></svg>
<svg style="position:absolute;left:1899px;top:471px" width="16" height="16" viewBox="0 0 16 16" ><path d="M4.500 1h3.500v5l3 5.500h-9.500l3-5.500z" stroke="#999" fill="#fff" stroke-width="1.1" /><path d="M7 8.5h4l1.500 1.500h3v5.500h-8.500z" stroke="#000" fill="#fff" stroke-width="1.2" /><path d="M9 13.0h4.500" stroke="#000" fill="none" stroke-width="1.1" /></svg>
<svg style="position:absolute;left:1899px;top:492px" width="16" height="16" viewBox="0 0 16 16" ><path d="M1 3.500h13v2h-2l-1.500 3h-6l-1.500-3h-2z" stroke="#000" fill="#fff" stroke-width="1.1" /><path d="M3 2h9" stroke="#1a1ac0" fill="none" stroke-width="1.5" /><path d="M7 8.5h4l1.500 1.500h3v5.500h-8.500z" stroke="#000" fill="#fff" stroke-width="1.2" /><path d="M9 13.0h4.500" stroke="#000" fill="none" stroke-width="1.1" /></svg>
<svg style="position:absolute;left:1899px;top:513px" width="16" height="16" viewBox="0 0 16 16" ><rect x="1" y="1.5" width="10.5" height="8" stroke="#1a1ac0" fill="#fff" stroke-width="1.5" /><path d="M3 11v3.500 M1.500 13l1.500 1.500l1.500-1.500" stroke="#000" fill="none" stroke-width="1" /><path d="M7 8.5h4l1.500 1.500h3v5.500h-8.500z" stroke="#000" fill="#fff" stroke-width="1.2" /><path d="M9 13.0h4.500" stroke="#000" fill="none" stroke-width="1.1" /></svg>
<svg style="position:absolute;left:1899px;top:534px" width="16" height="16" viewBox="0 0 16 16" ><rect x="1" y="1.5" width="10.5" height="8" stroke="#1a1ac0" fill="#fff" stroke-width="1.5" /><path d="M3 11v3.500 M1.500 13l1.500 1.500l1.500-1.500" stroke="#000" fill="none" stroke-width="1" /><path d="M7 8.5h4l1.500 1.500h3v5.500h-8.500z" stroke="#000" fill="#fff" stroke-width="1.2" /><path d="M9 13.0h4.500" stroke="#000" fill="none" stroke-width="1.1" /></svg>
<svg style="position:absolute;left:1899px;top:555px" width="16" height="16" viewBox="0 0 16 16" ><path d="M1 1.500h13v3h-13z M3 4.500v10.500 M6 4.500v10.500" stroke="#1f3b48" fill="#2f4b58" stroke-width="1.6" /><path d="M7 8.5h4l1.500 1.500h3v5.500h-8.500z" stroke="#000" fill="#fff" stroke-width="1.2" /><path d="M9 13.0h4.500" stroke="#000" fill="none" stroke-width="1.1" /></svg>
<div style="position:absolute;left:1900px;top:578px;width:14px;height:1px;background:#9a9ea8;box-shadow:0 1px 0 #fff"></div>
<svg style="position:absolute;left:1899px;top:584px" width="16" height="16" viewBox="0 0 16 16" ><path d="M1 14l4-5V5l3-3.500v9l3-3" stroke="#000" fill="none" stroke-width="1.2" /><path d="M8 5l2-1.500l1 1l2-1.500v3" stroke="#f0d800" fill="none" stroke-width="1.6" /><path d="M7 8.5h4l1.500 1.500h3v5.500h-8.500z" stroke="#e01010" fill="#fff" stroke-width="1.2" /><path d="M9 13.0h4.500" stroke="#e01010" fill="none" stroke-width="1.1" /></svg>
<svg style="position:absolute;left:1899px;top:605px" width="16" height="16" viewBox="0 0 16 16" ><path d="M0.500 9c1-5 3.500-7 7-7s6 2 7 7z" stroke="#000" fill="#555" stroke-width="1" /><path d="M0.500 9c1-5.500 3.500-7.500 7-7.500s6 2 7 7.500" stroke="#f0d800" fill="none" stroke-width="1.5" /><path d="M3 9l2-5 M6 9l1-6 M9 9l-1-6" stroke="#ddd" fill="none" stroke-width="0.8" /><path d="M7 8.5h4l1.500 1.500h3v5.500h-8.500z" stroke="#e01010" fill="#fff" stroke-width="1.2" /><path d="M9 13.0h4.500" stroke="#e01010" fill="none" stroke-width="1.1" /></svg>
<svg style="position:absolute;left:1899px;top:626px" width="16" height="16" viewBox="0 0 16 16" ><path d="M4.500 1h3v7l2 4.500h-8l2-4.500z" stroke="#1f3b58" fill="#fff" stroke-width="1.2" /><path d="M8 8.5h4l1.500 1.500h3v5.500h-8.500z" stroke="#000" fill="#fff" stroke-width="1.2" /><path d="M10 13.0h4.500" stroke="#000" fill="none" stroke-width="1.1" /></svg>
<svg style="position:absolute;left:1899px;top:647px" width="16" height="16" viewBox="0 0 16 16" ><path d="M5 1h3.500v7h4v4h-11v-4h3.500z" stroke="#1f3b58" fill="#6f93b0" stroke-width="1.1" /><path d="M7 8.5h4l1.500 1.500h3v5.500h-8.500z" stroke="#000" fill="#fff" stroke-width="1.2" /><path d="M9 13.0h4.500" stroke="#000" fill="none" stroke-width="1.1" /></svg>
<div style="position:absolute;left:1900px;top:670px;width:14px;height:1px;background:#9a9ea8;box-shadow:0 1px 0 #fff"></div>
<svg style="position:absolute;left:1899px;top:676px" width="16" height="16" viewBox="0 0 16 16" ><path d="M1 3h5 M1 6.500h5 M1 10h4" stroke="#e01010" fill="none" stroke-width="1.5" /><path d="M5 1.500l2 1.500l-2 1.500z M5 5l2 1.500l-2 1.500z M4 8.500l2 1.500l-2 1.500z" stroke="none" fill="#e01010" stroke-width="1" /><path d="M8 2h5v5 M8 2v6 M10.500 2v5" stroke="#777" fill="none" stroke-width="1" /><path d="M7 8.5h4l1.500 1.500h3v5.500h-8.500z" stroke="#000" fill="#fff" stroke-width="1.2" /><path d="M9 13.0h4.500" stroke="#000" fill="none" stroke-width="1.1" /></svg>
<svg style="position:absolute;left:1899px;top:697px" width="16" height="16" viewBox="0 0 16 16" ><path d="M1 5.500h5" stroke="#e01010" fill="none" stroke-width="1.5" /><path d="M5 4l2 1.500l-2 1.500z" stroke="none" fill="#e01010" stroke-width="1" /><path d="M8 2h5v5 M8 2v6 M10.500 2v5" stroke="#777" fill="none" stroke-width="1" /><path d="M7 8.5h4l1.500 1.500h3v5.500h-8.500z" stroke="#000" fill="#fff" stroke-width="1.2" /><path d="M9 13.0h4.500" stroke="#000" fill="none" stroke-width="1.1" /></svg>
<svg style="position:absolute;left:1899px;top:718px" width="16" height="16" viewBox="0 0 16 16" ><path d="M3 1.500h9.500v10h-9.500z M1.500 11.500h12v3.500h-12z" stroke="#000" fill="#ddd" stroke-width="1.1" /><path d="M5 2v9 M7 2v9 M9 2v9 M11 2v9" stroke="#000" fill="none" stroke-width="0.7" /><path d="M7 8.5h4l1.500 1.500h3v5.500h-8.500z" stroke="#000" fill="#fff" stroke-width="1.2" /><path d="M9 13.0h4.500" stroke="#000" fill="none" stroke-width="1.1" /></svg>
<div style="position:absolute;left:1900px;top:741px;width:14px;height:1px;background:#9a9ea8;box-shadow:0 1px 0 #fff"></div>
<svg style="position:absolute;left:1899px;top:748px" width="16" height="16" viewBox="0 0 16 16" ><path d="M2.500 1.500v12h6" stroke="#000" fill="none" stroke-width="1.3" /><path d="M2.500 0l1.500 2.500h-3z" stroke="none" fill="#000" stroke-width="1" /><path d="M3 13l5-5" stroke="#444" fill="none" stroke-width="1" /><path d="M8 7l3-1.500" stroke="#e01010" fill="none" stroke-width="1.2" /><path d="M7 8.5h4l1.500 1.500h3v5.500h-8.500z" stroke="#000" fill="#fff" stroke-width="1.2" /><path d="M9 13.0h4.500" stroke="#000" fill="none" stroke-width="1.1" /></svg>
<div style="position:absolute;left:1900px;top:770px;width:14px;height:1px;background:#9a9ea8;box-shadow:0 1px 0 #fff"></div>
<svg style="position:absolute;left:1899px;top:776px" width="16" height="16" viewBox="0 0 16 16" ><path d="M3.500 1.500h6.500l2.500 2.500v10.500h-9z" stroke="#e01010" fill="#fff" stroke-width="1.3" /><path d="M5.500 7h5 M5.500 9.500h5 M5.500 12h3" stroke="#e01010" fill="none" stroke-width="1.1" /></svg>
<svg style="position:absolute;left:1899px;top:797px" width="16" height="16" viewBox="0 0 16 16" ><path d="M5 1v9 M0.500 5.500h9" stroke="#000" fill="none" stroke-width="1.8" /><circle cx="5" cy="5.5" r="1.6" stroke="#000" fill="#fff" stroke-width="1" /><path d="M7 8.5h4l1.500 1.500h3v5.500h-8.500z" stroke="#e01010" fill="#fff" stroke-width="1.2" /><path d="M9 13.0h4.500" stroke="#e01010" fill="none" stroke-width="1.1" /></svg>
<svg style="position:absolute;left:1899px;top:842px" width="16" height="16" viewBox="0 0 16 16" ><path d="M1 1.500h14v4h-14z" stroke="#000" fill="#fff" stroke-width="1.3" /><path d="M3 1.500v2 M5 1.500v2.500 M7 1.500v2 M9 1.500v2.500 M11 1.500v2 M13 1.500v2.500" stroke="#000" fill="none" stroke-width="0.9" /><path d="M3.500 8v5 M1.500 11.500l2 2l2-2" stroke="#000" fill="none" stroke-width="1.1" /><path d="M7 8.5h4l1.500 1.500h3v5.500h-8.500z" stroke="#000" fill="#fff" stroke-width="1.2" /><path d="M9 13.0h4.500" stroke="#000" fill="none" stroke-width="1.1" /></svg>
<svg style="position:absolute;left:1899px;top:863px" width="16" height="16" viewBox="0 0 16 16" ><path d="M1 3h11 M1 6.500h11 M1 10h6" stroke="#000" fill="none" stroke-width="1" /><path d="M11 1.500l2.500 1.500l-2.500 1.500z M11 5l2.500 1.500l-2.500 1.500z" stroke="none" fill="#000" stroke-width="1" /><path d="M7 8.5h4l1.500 1.500h3v5.500h-8.500z" stroke="#000" fill="#fff" stroke-width="1.2" /><path d="M9 13.0h4.500" stroke="#000" fill="none" stroke-width="1.1" /></svg>
<svg style="position:absolute;left:1899px;top:884px" width="16" height="16" viewBox="0 0 16 16" ><ellipse cx="7" cy="6.5" rx="6" ry="5" stroke="#000" fill="#8a8a8a" stroke-width="1.3" /><ellipse cx="7" cy="6.5" rx="3" ry="2.5" stroke="#444" fill="#555" stroke-width="1" /><path d="M7 8.5h4l1.500 1.500h3v5.500h-8.500z" stroke="#000" fill="#fff" stroke-width="1.2" /><path d="M9 13.0h4.500" stroke="#000" fill="none" stroke-width="1.1" /></svg>
<svg style="position:absolute;left:1899px;top:905px" width="16" height="16" viewBox="0 0 16 16" ><path d="M2.500 14V5l3.500-4v13z M7 14V6l3 2.500" stroke="#1f3b58" fill="#7f9db8" stroke-width="1" /><path d="M7 8.5h4l1.500 1.500h3v5.500h-8.500z" stroke="#000" fill="#fff" stroke-width="1.2" /><path d="M9 13.0h4.500" stroke="#000" fill="none" stroke-width="1.1" /></svg>
<svg style="position:absolute;left:1899px;top:926px" width="16" height="16" viewBox="0 0 16 16" ><path d="M1 2.500h13 M1 4.500h13 M1 8h10 M1 10.500h8 M1 13h6" stroke="#2f4b60" fill="none" stroke-width="1.3" /><rect x="1" y="5" width="13" height="2.5" stroke="none" fill="#9ab" stroke-width="1" /><path d="M7 8.5h4l1.500 1.500h3v5.500h-8.500z" stroke="#000" fill="#fff" stroke-width="1.2" /><path d="M9 13.0h4.500" stroke="#000" fill="none" stroke-width="1.1" /></svg>
<svg style="position:absolute;left:1899px;top:947px" width="16" height="16" viewBox="0 0 16 16" ><path d="M3 1v14 M7 1v14 M11 1v14" stroke="#8a0a0a" fill="none" stroke-width="2" /><path d="M1 3.500h14 M1 8h14 M1 12.500h7" stroke="#444" fill="none" stroke-width="1" /><path d="M7 8.5h4l1.500 1.500h3v5.500h-8.500z" stroke="#000" fill="#fff" stroke-width="1.2" /><path d="M9 13.0h4.500" stroke="#000" fill="none" stroke-width="1.1" /></svg>
<svg style="position:absolute;left:1899px;top:968px" width="16" height="16" viewBox="0 0 16 16" ><path d="M3 1v14 M7 1v14 M11 1v14 M15 1v7" stroke="#8fb8d8" fill="none" stroke-width="1.8" /><path d="M1 3.500h14 M1 8h14 M1 12.500h7" stroke="#2f5f80" fill="none" stroke-width="1" stroke-dasharray="1.500 1"/><path d="M7 8.5h4l1.500 1.500h3v5.500h-8.500z" stroke="#000" fill="#fff" stroke-width="1.2" /><path d="M9 13.0h4.500" stroke="#000" fill="none" stroke-width="1.1" /></svg>
<svg style="position:absolute;left:1899px;top:989px" width="16" height="16" viewBox="0 0 16 16" ><path d="M1 2h14 M1 4h14" stroke="#2f4b60" fill="none" stroke-width="1.2" /><path d="M2 4.500l5.500 9l5.500-9" stroke="#2f4b60" fill="none" stroke-width="1.2" /><path d="M1 14.500h6" stroke="#2f4b60" fill="none" stroke-width="1.2" /><path d="M7 8.5h4l1.500 1.500h3v5.500h-8.500z" stroke="#000" fill="#fff" stroke-width="1.2" /><path d="M9 13.0h4.500" stroke="#000" fill="none" stroke-width="1.1" /></svg>
<svg style="position:absolute;left:1899px;top:1010px" width="16" height="16" viewBox="0 0 16 16" ><rect x="1" y="1" width="13" height="14" stroke="#1f3b58" fill="#8fb0cc" stroke-width="1.3" /><rect x="3" y="3" width="9" height="10" stroke="#1f3b58" fill="#e4ecf2" stroke-width="1" /><path d="M3 3l9 10 M12 3l-9 10" stroke="#c03030" fill="none" stroke-width="0.9" /><path d="M7 8.5h4l1.500 1.500h3v5.500h-8.500z" stroke="#000" fill="#fff" stroke-width="1.2" /><path d="M9 13.0h4.500" stroke="#000" fill="none" stroke-width="1.1" /></svg>
<svg style="position:absolute;left:1899px;top:1031px" width="16" height="16" viewBox="0 0 16 16" ><rect x="1" y="1" width="13" height="14" stroke="#1f3b58" fill="#fff" stroke-width="1.3" /><rect x="3" y="3" width="9" height="10" stroke="#6f93b0" fill="#eef" stroke-width="1" /><path d="M12 2.500L4 13.500" stroke="#8a0a0a" fill="none" stroke-width="2.2" /><path d="M7 8.5h4l1.500 1.500h3v5.500h-8.500z" stroke="#000" fill="#fff" stroke-width="1.2" /><path d="M9 13.0h4.500" stroke="#000" fill="none" stroke-width="1.1" /></svg>
</body></html>
